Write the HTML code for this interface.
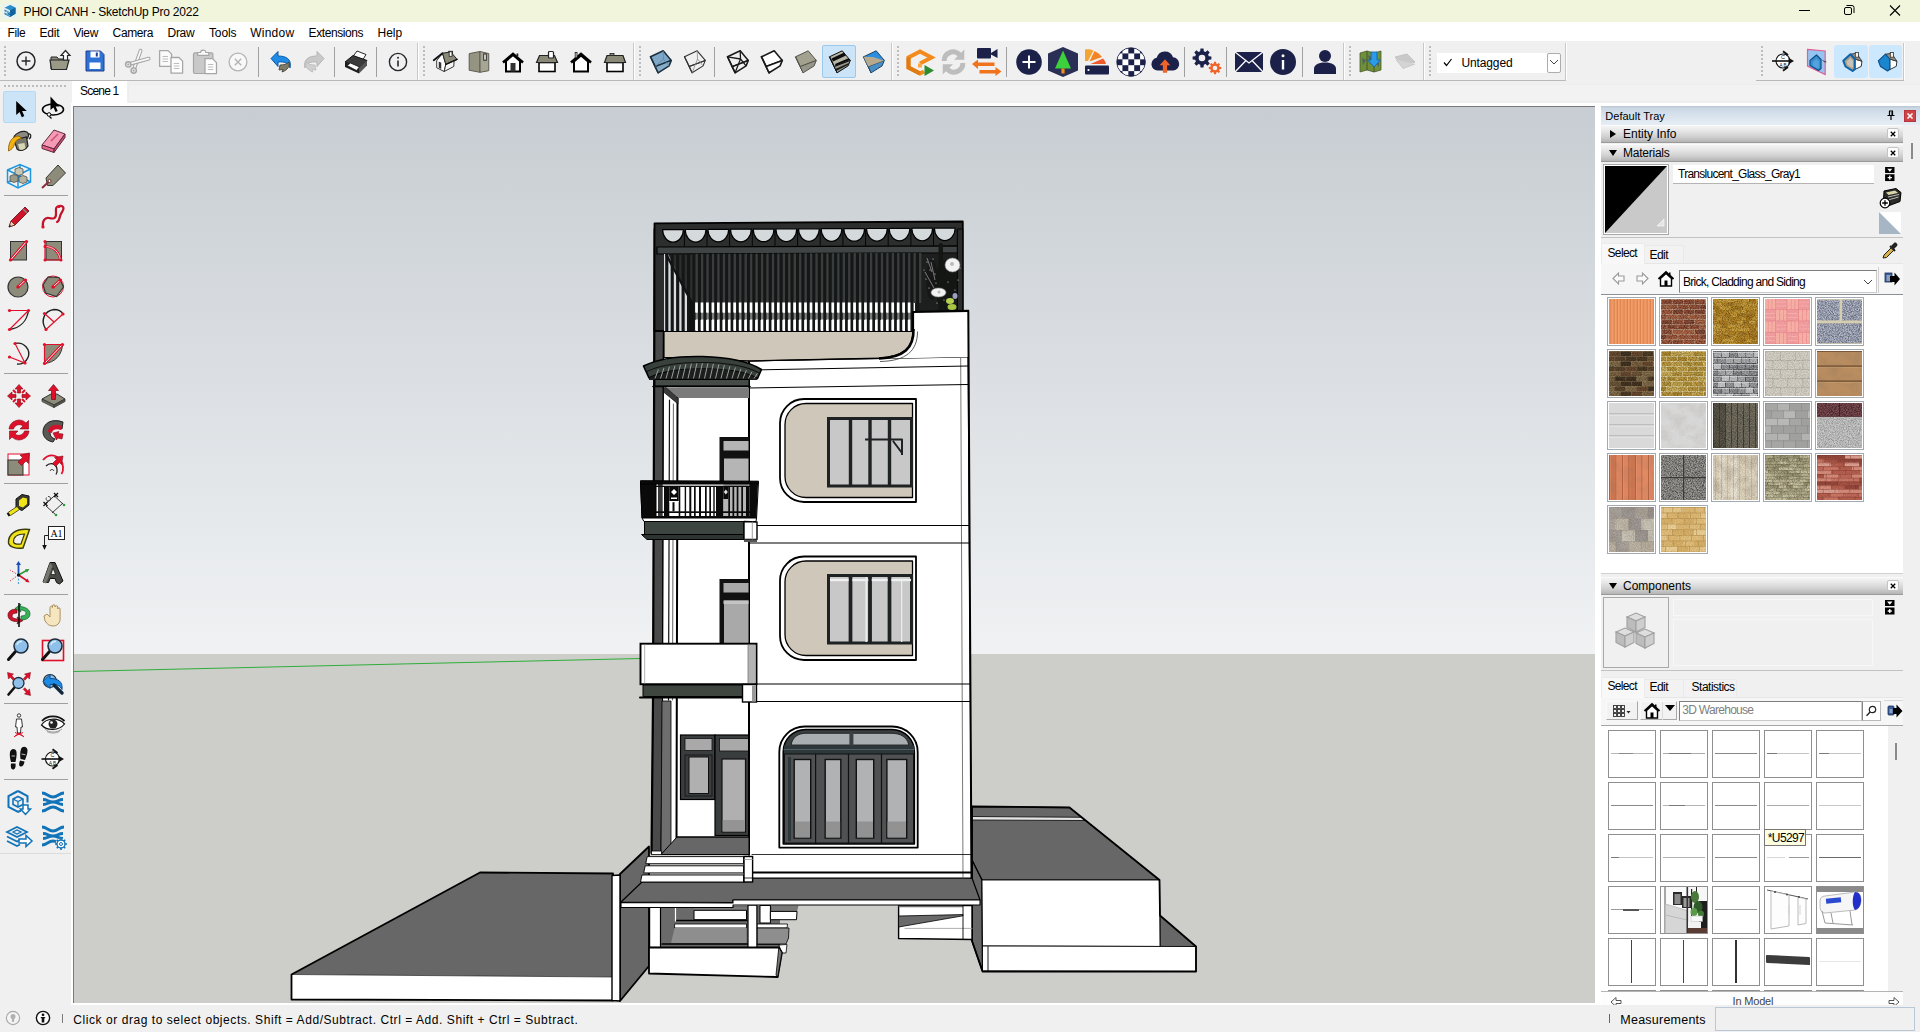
<!DOCTYPE html>
<html lang="en"><head><meta charset="utf-8"><title>PHOI CANH - SketchUp Pro 2022</title>
<style>
*{box-sizing:border-box;margin:0;padding:0}
html,body{width:1920px;height:1032px;overflow:hidden;background:#f0f0f0;font-family:"Liberation Sans",sans-serif;font-size:12px;color:#000}
.abs{position:absolute}
.t{position:absolute;white-space:nowrap;line-height:1;transform-origin:0 0}
#titlebar{position:absolute;left:0;top:0;width:1920px;height:22px;background:#f1f5dc}
#menubar{position:absolute;left:0;top:22px;width:1920px;height:19px;background:#fff}
#toolbar{position:absolute;left:0;top:41px;width:1920px;height:40px;background:#f0f0f0}
#lefttb{position:absolute;left:0;top:81px;width:71px;height:924px;background:#f0f0f0}
#scenerow{position:absolute;left:71px;top:81px;width:1530px;height:25px;background:#f0f0f0}
#vp{position:absolute;left:73px;top:106px;width:1522px;height:897px;background:#ccc;border-left:1px solid #7a7a7a;border-top:1px solid #7a7a7a;overflow:hidden}
#tray{position:absolute;left:1601px;top:106px;width:319px;height:899px;background:#f0f0f0}
#status{position:absolute;left:0;top:1005px;width:1920px;height:27px;background:#f0f0f0}
svg{position:absolute;overflow:visible}
</style></head><body>
<div id="titlebar">
<div class="abs" style="left:2px;top:3px;width:16px;height:16px;background:#eaf3ee"></div>
<svg class="abs" style="left:4px;top:5px" width="12" height="12" viewBox="0 0 12 12"><path d="M6 0L11.500 2.800V8.800L6 12 0.500 9.200V7.600L3.500 9V7.600L0.500 6.200V4.600L6 7.200Z" fill="#1b78b3"/><path d="M6 0L11.500 2.800 6 5.600 0.500 2.800Z" fill="#2a8fcc"/><path d="M6 5.600L11.500 2.800V8.800L6 12Z" fill="#12659c"/><path d="M1.800 3.400l4.200 2.200M1.800 6l4.200 2.200M2 8.800l4 2" stroke="#cfe6f4" stroke-width=".7" fill="none" opacity=".7"/></svg>
<div class="t"  style="left:23.6px;top:5.5px;font-size:12px;letter-spacing:-0.221px;color:#000;">PHOI CANH - SketchUp Pro 2022</div>
<svg class="abs" style="left:1780px;top:0" width="140" height="23" viewBox="0 0 140 23"><path d="M19 10.5h11" stroke="#000" stroke-width="1" fill="none"/><rect x="64.500" y="7.500" width="7" height="7" rx="1.500" stroke="#000" stroke-width="1" fill="none"/><path d="M66.500 5.500h5.500a2 2 0 0 1 2 2v5.500" stroke="#000" stroke-width="1" fill="none"/><path d="M110 5.500l10 10M120 5.500l-10 10" stroke="#000" stroke-width="1.100" fill="none"/></svg>
</div>
<div id="menubar">
<div class="t"  style="left:7.6px;top:4.6px;font-size:12px;letter-spacing:-0.409px;color:#000;">File</div>
<div class="t"  style="left:39.599999999999994px;top:4.6px;font-size:12px;letter-spacing:-0.244px;color:#000;">Edit</div>
<div class="t"  style="left:73.6px;top:4.6px;font-size:12px;letter-spacing:-0.348px;color:#000;">View</div>
<div class="t"  style="left:112.6px;top:4.6px;font-size:12px;letter-spacing:-0.38px;color:#000;">Camera</div>
<div class="t"  style="left:167.60000000000002px;top:4.6px;font-size:12px;letter-spacing:-0.326px;color:#000;">Draw</div>
<div class="t"  style="left:209.0px;top:4.6px;font-size:12px;letter-spacing:-0.143px;color:#000;">Tools</div>
<div class="t"  style="left:250.3px;top:4.6px;font-size:12px;letter-spacing:0.22px;color:#000;">Window</div>
<div class="t"  style="left:308.6px;top:4.6px;font-size:12px;letter-spacing:-0.43px;color:#000;">Extensions</div>
<div class="t"  style="left:377.6px;top:4.6px;font-size:12px;letter-spacing:-0.07px;color:#000;">Help</div>
</div>
<div id="toolbar"><div class="abs" style="left:0;top:39px;width:1566px;height:1px;background:#b9b9b9"></div><div class="abs" style="left:1756px;top:39px;width:148px;height:1px;background:#b9b9b9"></div></div>
<div class="abs" style="left:4px;top:46px;width:2px;height:2px;background:#bdbdbd"></div><div class="abs" style="left:4px;top:50px;width:2px;height:2px;background:#bdbdbd"></div><div class="abs" style="left:4px;top:54px;width:2px;height:2px;background:#bdbdbd"></div><div class="abs" style="left:4px;top:58px;width:2px;height:2px;background:#bdbdbd"></div><div class="abs" style="left:4px;top:62px;width:2px;height:2px;background:#bdbdbd"></div><div class="abs" style="left:4px;top:66px;width:2px;height:2px;background:#bdbdbd"></div><div class="abs" style="left:4px;top:70px;width:2px;height:2px;background:#bdbdbd"></div><div class="abs" style="left:4px;top:74px;width:2px;height:2px;background:#bdbdbd"></div>
<svg class="abs" style="left:14.399999999999999px;top:49.3px" width="24" height="24" viewBox="0 0 24 24"><circle cx="12" cy="12" r="9" fill="none" stroke="#25272b" stroke-width="1.500"/><path d="M12 7.600v8.800M7.600 12h8.800" stroke="#25272b" stroke-width="1.400"/></svg>
<svg class="abs" style="left:48.0px;top:49.0px" width="24" height="24" viewBox="0 0 24 24"><path d="M3 8h6l1.500 2H18v10H3z" fill="#8c8b78" stroke="#25272b" stroke-width="1"/><path d="M2 11h19l-2.500 9.500H3.500z" fill="#9a9985" stroke="#25272b" stroke-width="1.200"/><path d="M17.500 1.500l4.500 5h-2.500v4.500h-4v-4.500H13z" fill="#fff" stroke="#25272b" stroke-width="1.200"/></svg>
<svg class="abs" style="left:83.0px;top:49.0px" width="24" height="24" viewBox="0 0 24 24"><path d="M3 2h14.500L21 5.500V22H3z" fill="#2f72d6" stroke="#1f3f8f" stroke-width="1"/><rect x="7.500" y="2.500" width="9" height="6" fill="#fff"/><rect x="12.800" y="3.500" width="2" height="4" fill="#1f3f8f"/><rect x="6.500" y="13.500" width="11" height="6.500" fill="#fff"/></svg>
<div class="abs" style="left:114px;top:47px;width:1px;height:30px;background:#a0a0a0"></div>
<svg class="abs" style="left:124.0px;top:49.0px" width="26" height="26" viewBox="0 0 26 26"><path d="M16.600 1.600L10.200 19.500" stroke="#a6a6a6" stroke-width="3.800" stroke-linecap="round"/><path d="M16.600 1.600L10.200 19.500" stroke="#fafafa" stroke-width="1.700" stroke-linecap="round"/><path d="M24.700 9.600L6 14.800" stroke="#a6a6a6" stroke-width="3.800" stroke-linecap="round"/><path d="M24.700 9.600L6 14.800" stroke="#fafafa" stroke-width="1.700" stroke-linecap="round"/><circle cx="4.200" cy="15.400" r="2.700" fill="#e0e0e0" stroke="#a6a6a6" stroke-width="1.400"/><circle cx="4.200" cy="15.400" r=".9" fill="#a6a6a6"/><circle cx="9.700" cy="21.600" r="2.700" fill="#e0e0e0" stroke="#a6a6a6" stroke-width="1.400"/><circle cx="9.700" cy="21.600" r=".9" fill="#a6a6a6"/></svg>
<svg class="abs" style="left:159.0px;top:50.0px" width="24" height="24" viewBox="0 0 24 24"><path d="M.6 .6h8.500l3.500 3.500V16.300H.6z" fill="#fafafa" stroke="#a6a6a6" stroke-width="1.300" stroke-linejoin="round"/><path d="M3.500 6.500h5.500M3.500 9h5.500M3.500 11.500h5.500" stroke="#bdbdbd" stroke-width="1.100"/><path d="M12 7.500h8l3.600 3.600V23.200H12z" fill="#fdfdfd" stroke="#a6a6a6" stroke-width="1.300" stroke-linejoin="round"/><path d="M14.800 13.500h5.500M14.800 16h5.500M14.800 18.500h5.500" stroke="#bdbdbd" stroke-width="1.100"/></svg>
<svg class="abs" style="left:193.0px;top:50.0px" width="24" height="24" viewBox="0 0 24 24"><rect x=".5" y="2.800" width="19.400" height="20.700" rx="1.500" fill="#c9c9c9" stroke="#a6a6a6" stroke-width="1.200"/><path d="M4.600 5.300V2.500h3c0-3.300 5.200-3.300 5.200 0h3v2.800z" fill="#fafafa" stroke="#a6a6a6" stroke-width="1.200" stroke-linejoin="round"/><path d="M12 8.600h7.500l4 4V23.600H12z" fill="#fdfdfd" stroke="#a6a6a6" stroke-width="1.300" stroke-linejoin="round"/><path d="M14.800 14.500h5.500M14.800 17h5.500M14.800 19.500h5.500" stroke="#bdbdbd" stroke-width="1.100"/></svg>
<svg class="abs" style="left:226.1px;top:49.5px" width="24" height="24" viewBox="0 0 24 24"><circle cx="12" cy="12" r="8.900" fill="#f8f8f8" stroke="#b4b4b4" stroke-width="1.300"/><path d="M8.800 8.800l6.400 6.400M15.200 8.800l-6.400 6.400" stroke="#b4b4b4" stroke-width="1.400"/></svg>
<div class="abs" style="left:258px;top:47px;width:1px;height:30px;background:#a0a0a0"></div>
<svg class="abs" style="left:269.0px;top:50.0px" width="24" height="24" viewBox="0 0 24 24"><path d="M2 8.500L9 1.500v4.500c8 0 14 3 12 12-1.500-5-5-6.500-12-6v4.500z" fill="#1e8ce6" stroke="#0d5aa8" stroke-width="1"/><path d="M11 15c4 0 7-1 9-3 1 4-1 8-7 10l1-2.500-4 .5z" fill="#7d7c69" stroke="#3c3c34" stroke-width=".8"/></svg>
<svg class="abs" style="left:302.0px;top:50.0px" width="24" height="24" viewBox="0 0 24 24"><path d="M22 8.500L15 1.500v4.500c-8 0-14 3-12 12 1.500-5 5-6.500 12-6v4.500z" fill="#c9c9c9" stroke="#b5b5b5" stroke-width="1"/><path d="M13 15c-4 0-7-1-9-3-1 4 1 8 7 10l-1-2.500 4 .5z" fill="#cfcfcf" stroke="#bcbcbc" stroke-width=".8"/></svg>
<div class="abs" style="left:334px;top:47px;width:1px;height:30px;background:#a0a0a0"></div>
<svg class="abs" style="left:344.0px;top:50.0px" width="24" height="24" viewBox="0 0 24 24"><path d="M9 6.500L13 1l9 3.500-3 5z" fill="#fff" stroke="#25272b" stroke-width="1"/><path d="M1 12l8-6.500L23 10.500l-7 7.500z" fill="#3b3b3b" stroke="#111" stroke-width="1"/><path d="M1 12v5l14 6.500V18z" fill="#1e1e1e"/><path d="M15 18l8-7.500v5L15 23.500z" fill="#555"/><path d="M3 15.500l3.500-2.500 9 4-3 3.500z" fill="#fff" stroke="#111" stroke-width=".8"/></svg>
<div class="abs" style="left:376px;top:47px;width:1px;height:30px;background:#a0a0a0"></div>
<svg class="abs" style="left:386.0px;top:49.5px" width="24" height="24" viewBox="0 0 24 24"><circle cx="12" cy="12" r="8.600" fill="none" stroke="#25272b" stroke-width="1.400"/><path d="M12 10.500v6" stroke="#25272b" stroke-width="1.600"/><circle cx="12" cy="7.800" r="1" fill="#25272b"/></svg>
<div class="abs" style="left:417px;top:43px;width:1px;height:37px;background:#c8c8c8"></div><div class="abs" style="left:418px;top:43px;width:1px;height:37px;background:#fff"></div>
<div class="abs" style="left:423px;top:46px;width:2px;height:2px;background:#bdbdbd"></div><div class="abs" style="left:423px;top:50px;width:2px;height:2px;background:#bdbdbd"></div><div class="abs" style="left:423px;top:54px;width:2px;height:2px;background:#bdbdbd"></div><div class="abs" style="left:423px;top:58px;width:2px;height:2px;background:#bdbdbd"></div><div class="abs" style="left:423px;top:62px;width:2px;height:2px;background:#bdbdbd"></div><div class="abs" style="left:423px;top:66px;width:2px;height:2px;background:#bdbdbd"></div><div class="abs" style="left:423px;top:70px;width:2px;height:2px;background:#bdbdbd"></div><div class="abs" style="left:423px;top:74px;width:2px;height:2px;background:#bdbdbd"></div>
<svg class="abs" style="left:433.0px;top:50.0px" width="24" height="24" viewBox="0 0 24 24"><path d="M3.700 10.700L9.500 3.200 12.800 14.400 11.200 21.500 3.700 17.750z" fill="#fff" stroke="#222" stroke-width=".9" stroke-linejoin="round"/><path d="M12.800 14.400L21.200 10.250 20.750 16.500 11.200 21.500z" fill="#f4f4f4" stroke="#222" stroke-width=".9" stroke-linejoin="round"/><rect x="15.750" y="1.300" width="3.750" height="6" fill="#fff" stroke="#222" stroke-width=".9"/><path d="M9.500 3.200L17.800 1.900 24.100 9.400 12.800 14.400z" fill="#8a8978" stroke="#222" stroke-width="1" stroke-linejoin="round"/><rect x="16.200" y="1.800" width="2.800" height="4.500" fill="#fff" stroke="#222" stroke-width=".8"/><path d="M.75 10.250L9.500 3.200" stroke="#111" stroke-width="1.800" stroke-linecap="round"/><path d="M12.800 14.400L24.100 9.400" stroke="#111" stroke-width="1.500" stroke-linecap="round"/><rect x="5.750" y="12" width="2.500" height="6.200" fill="#333" transform="skewY(26) translate(0 -3.300)"/></svg>
<svg class="abs" style="left:467.0px;top:50.0px" width="24" height="24" viewBox="0 0 24 24"><path d="M2.200 3.600L13 1.500V22.300L2.200 20.250z" fill="#959382" stroke="#5e5d50" stroke-width="1"/><path d="M13 1.500L21.750 3.600V20.700L13 22.300z" fill="#a7a594" stroke="#5e5d50" stroke-width="1"/><rect x="16.750" y="4" width="2.500" height="6.250" fill="#fff" stroke="#222" stroke-width="1"/></svg>
<svg class="abs" style="left:501.0px;top:50.0px" width="24" height="24" viewBox="0 0 24 24"><path d="M2 12.500L12 4l10 8.500" fill="none" stroke="#000" stroke-width="2.600"/><path d="M5 11v10.500h14V11L12 5z" fill="#fff" stroke="#000" stroke-width="2"/><rect x="9.500" y="13" width="5" height="8.500" fill="#333"/><rect x="15.500" y="3.500" width="1.800" height="3" fill="#222"/></svg>
<svg class="abs" style="left:535.0px;top:50.0px" width="24" height="24" viewBox="0 0 24 24"><rect x="4" y="12.500" width="16" height="9" fill="#fff" stroke="#000" stroke-width="1.600"/><path d="M1.500 12.500L4.500 5.500h15l3 7z" fill="#8a8978" stroke="#222" stroke-width="1.200"/><rect x="13.500" y="1.500" width="5" height="6.500" rx="1" fill="#fff" stroke="#222" stroke-width="1.200"/></svg>
<svg class="abs" style="left:569.0px;top:50.0px" width="24" height="24" viewBox="0 0 24 24"><path d="M2 12.500L12 4l10 8.500" fill="none" stroke="#000" stroke-width="2.600"/><path d="M5 11.500V21.500h14V11.500L12 5.500z" fill="#fff" stroke="#000" stroke-width="2"/><rect x="6.200" y="2.500" width="1.800" height="5" fill="#fff" stroke="#222" stroke-width=".9"/></svg>
<svg class="abs" style="left:603.0px;top:50.0px" width="24" height="24" viewBox="0 0 24 24"><rect x="4" y="12.500" width="16" height="9" fill="#fff" stroke="#000" stroke-width="1.600"/><path d="M1.500 12.500L4 5.500h16l2.500 7z" fill="#8a8978" stroke="#222" stroke-width="1.200"/><rect x="7" y="3.500" width="4" height="2" fill="#8a8978" stroke="#222" stroke-width=".8"/></svg>
<div class="abs" style="left:633px;top:43px;width:1px;height:37px;background:#c8c8c8"></div><div class="abs" style="left:634px;top:43px;width:1px;height:37px;background:#fff"></div>
<div class="abs" style="left:639px;top:46px;width:2px;height:2px;background:#bdbdbd"></div><div class="abs" style="left:639px;top:50px;width:2px;height:2px;background:#bdbdbd"></div><div class="abs" style="left:639px;top:54px;width:2px;height:2px;background:#bdbdbd"></div><div class="abs" style="left:639px;top:58px;width:2px;height:2px;background:#bdbdbd"></div><div class="abs" style="left:639px;top:62px;width:2px;height:2px;background:#bdbdbd"></div><div class="abs" style="left:639px;top:66px;width:2px;height:2px;background:#bdbdbd"></div><div class="abs" style="left:639px;top:70px;width:2px;height:2px;background:#bdbdbd"></div><div class="abs" style="left:639px;top:74px;width:2px;height:2px;background:#bdbdbd"></div>
<svg class="abs" style="left:648.0px;top:50.0px" width="24" height="24" viewBox="0 0 24 24"><path d="M2.500 6.800L15.200 .8 23.300 10.400 7.200 16.600z" fill="#7fa8c8" stroke="#1d2f3d" stroke-width="1.5" stroke-linejoin="round"/><path d="M2.500 6.800L7.200 16.600 10.100 22.800z" fill="#6d97b8" stroke="#1d2f3d" stroke-width="1.5" stroke-linejoin="round"/><path d="M7.200 16.600L23.300 10.400 21.100 15.900 10.100 22.800z" fill="#86aeca" stroke="#1d2f3d" stroke-width="1.5" stroke-linejoin="round"/><path d="M15.200 .8L15.500 9 7.200 16.600M15.500 9l5.600 6.900" stroke="#5d88a6" stroke-width=".8" fill="none"/></svg>
<svg class="abs" style="left:682.0px;top:50.0px" width="24" height="24" viewBox="0 0 24 24"><path d="M2.500 6.800L15.200 .8 23.300 10.400 7.200 16.600z" fill="none" stroke="#333" stroke-width="1.1" stroke-linejoin="round"/><path d="M2.500 6.800L7.200 16.600 10.100 22.800z" fill="none" stroke="#333" stroke-width="1.1" stroke-linejoin="round"/><path d="M7.200 16.600L23.300 10.400 21.100 15.900 10.100 22.800z" fill="none" stroke="#333" stroke-width="1.1" stroke-linejoin="round"/><path d="M15.200 .8L15.500 9 10.100 22.800M15.500 9l5.600 6.900" stroke="#888" stroke-width=".8" fill="none"/></svg>
<div class="abs" style="left:714px;top:47px;width:1px;height:30px;background:#a0a0a0"></div>
<svg class="abs" style="left:725.0px;top:50.0px" width="24" height="24" viewBox="0 0 24 24"><path d="M2.500 6.800L15.200 .8 23.300 10.400 7.200 16.600z" fill="none" stroke="#1a1a1a" stroke-width="1.5" stroke-linejoin="round"/><path d="M2.500 6.800L7.200 16.600 10.100 22.800z" fill="none" stroke="#1a1a1a" stroke-width="1.5" stroke-linejoin="round"/><path d="M7.200 16.600L23.300 10.400 21.100 15.900 10.100 22.800z" fill="none" stroke="#1a1a1a" stroke-width="1.5" stroke-linejoin="round"/><path d="M15.200 .8L15.500 9 10.100 22.800M15.500 9l5.600 6.900M2.500 6.800L15.500 9" stroke="#1a1a1a" stroke-width="1.300" fill="none"/></svg>
<svg class="abs" style="left:759.0px;top:50.0px" width="24" height="24" viewBox="0 0 24 24"><path d="M2.500 6.800L15.200 .8 23.300 10.400 7.200 16.600z" fill="#fff" stroke="#1a1a1a" stroke-width="1.6" stroke-linejoin="round"/><path d="M2.500 6.800L7.200 16.600 10.100 22.800z" fill="#fff" stroke="#1a1a1a" stroke-width="1.6" stroke-linejoin="round"/><path d="M7.200 16.600L23.300 10.400 21.100 15.900 10.100 22.800z" fill="#fff" stroke="#1a1a1a" stroke-width="1.6" stroke-linejoin="round"/></svg>
<svg class="abs" style="left:793.0px;top:50.0px" width="24" height="24" viewBox="0 0 24 24"><path d="M2.500 6.800L15.200 .8 23.300 10.400 7.200 16.600z" fill="#a3a291" stroke="#55554a" stroke-width="1.0" stroke-linejoin="round"/><path d="M2.500 6.800L7.200 16.600 10.100 22.800z" fill="#8b8a79" stroke="#55554a" stroke-width="1.0" stroke-linejoin="round"/><path d="M7.200 16.600L23.300 10.400 21.100 15.900 10.100 22.800z" fill="#97968a" stroke="#55554a" stroke-width="1.0" stroke-linejoin="round"/></svg>
<div class="abs" style="left:822px;top:45px;width:34px;height:33px;background:#cce4f7;border:1px solid #99c9ef;border-radius:2px"></div>
<svg class="abs" style="left:827.0px;top:50.0px" width="24" height="24" viewBox="0 0 24 24"><path d="M2.500 6.800L15.200 .8 23.300 10.400 7.200 16.600z" fill="#b6b5a5" stroke="#111" stroke-width="1.0" stroke-linejoin="round"/><path d="M2.500 6.800L7.200 16.600 10.100 22.800z" fill="#8b8a79" stroke="#111" stroke-width="1.0" stroke-linejoin="round"/><path d="M7.200 16.600L23.300 10.400 21.100 15.900 10.100 22.800z" fill="#97968a" stroke="#111" stroke-width="1.0" stroke-linejoin="round"/><path d="M4.500 8.500L16.800 2.800 19 5.500 6 11.500z M8 14L21.500 8.300 22.800 10 8.800 15.800z" fill="#0c0c0c"/><path d="M8.300 19l13.700-6-.6 1.800L9 21z" fill="#1a1a1a"/></svg>
<svg class="abs" style="left:861.0px;top:50.0px" width="24" height="24" viewBox="0 0 24 24"><path d="M2.500 6.800L15.200 .8 23.300 10.400 7.200 16.600z" fill="#2e8ede" stroke="#1d4466" stroke-width="1.0" stroke-linejoin="round"/><path d="M2.500 6.800L7.200 16.600 10.100 22.800z" fill="#a69c85" stroke="#1d4466" stroke-width="1.0" stroke-linejoin="round"/><path d="M7.200 16.600L23.300 10.400 21.100 15.900 10.100 22.800z" fill="#4a8fc4" stroke="#1d4466" stroke-width="1.0" stroke-linejoin="round"/><path d="M2.500 6.800L7.200 16.600 23.300 10.400 12 7z" fill="#b7a98d"/></svg>
<div class="abs" style="left:891px;top:43px;width:1px;height:37px;background:#c8c8c8"></div><div class="abs" style="left:892px;top:43px;width:1px;height:37px;background:#fff"></div>
<div class="abs" style="left:897px;top:46px;width:2px;height:2px;background:#bdbdbd"></div><div class="abs" style="left:897px;top:50px;width:2px;height:2px;background:#bdbdbd"></div><div class="abs" style="left:897px;top:54px;width:2px;height:2px;background:#bdbdbd"></div><div class="abs" style="left:897px;top:58px;width:2px;height:2px;background:#bdbdbd"></div><div class="abs" style="left:897px;top:62px;width:2px;height:2px;background:#bdbdbd"></div><div class="abs" style="left:897px;top:66px;width:2px;height:2px;background:#bdbdbd"></div><div class="abs" style="left:897px;top:70px;width:2px;height:2px;background:#bdbdbd"></div><div class="abs" style="left:897px;top:74px;width:2px;height:2px;background:#bdbdbd"></div>
<svg class="abs" style="left:904.5px;top:46.5px" width="30" height="30" viewBox="0 0 30 30"><path d="M15 16.500L26.500 10.500 15 4.500 3.500 10.500V20.500l11.500 6 4-2" fill="none" stroke="#f28a1c" stroke-width="4" stroke-linejoin="miter"/><path d="M3.500 10.500V20.500l11.500 6" fill="none" stroke="#e07a12" stroke-width="4"/><path d="M15 16.500v4" stroke="#ffa63f" stroke-width="4"/><path d="M19.500 18l9.500 5.500-9.500 5.500z" fill="#2e8b2e"/></svg>
<svg class="abs" style="left:938.5px;top:48.0px" width="29" height="28" viewBox="0 0 26 26"><path d="M2 12A10.500 10.500 0 0 1 20 4.500L23 1.500v9.500h-9.500l3.300-3.300A6 6 0 0 0 6.600 12z" fill="#bdbdbd"/><path d="M24 14A10.500 10.500 0 0 1 6 21.500L3 24.500V15h9.500l-3.300 3.300A6 6 0 0 0 19.400 14z" fill="#bdbdbd"/></svg>
<svg class="abs" style="left:972.0px;top:47.5px" width="30" height="28" viewBox="0 0 30 28"><rect x="5" y="0" width="14" height="10.500" rx="1" fill="#1b2149"/><path d="M19 5l6.500-4v9L19 6.500z" fill="#1b2149"/><path d="M0 16l6-4.500v3h16.500v3.500H6V21z" fill="#f0731e"/><path d="M29.500 23.500l-6-4.500v3H7.500v3.500H23.500V28z" fill="#f0731e"/></svg>
<div class="abs" style="left:1006px;top:47px;width:1px;height:30px;background:#a0a0a0"></div>
<svg class="abs" style="left:1015.5px;top:49.0px" width="26" height="26" viewBox="0 0 26 26"><circle cx="13" cy="13" r="12.800" fill="#1b2149"/><path d="M13 6.500v13M6.500 13h13" stroke="#fff" stroke-width="2"/></svg>
<svg class="abs" style="left:1048.0px;top:47.0px" width="30" height="30" viewBox="0 0 30 30"><path d="M15 0L30 6.500V23.500L15 30 0 23.500V6.500z" fill="#2a2f55"/><path d="M15 3.500L23 21.500H7z" fill="#3ed13e"/><rect x="13.400" y="21.500" width="3.200" height="5" fill="#f28a1c"/></svg>
<svg class="abs" style="left:1084.0px;top:48.0px" width="26" height="28" viewBox="0 0 26 28"><path d="M1 1.500c3-.6 6 0 8.500 1L4 13H1z" fill="#f4a433"/><path d="M10.500 3c3 1.300 5.500 3.500 7.500 6L5.500 13.500z" fill="#f28424"/><path d="M19 10.500c1.500 1.500 2.500 3.500 3 5.500H6.500z" fill="#ef5a2a"/><rect x="1" y="17.500" width="24" height="9" rx="1" fill="#1b2149"/><circle cx="4.500" cy="22" r="1.100" fill="#fff"/></svg>
<svg class="abs" style="left:1116.0px;top:47.0px" width="30" height="30" viewBox="0 0 28 28"><defs><pattern id="chk" width="11" height="11" patternUnits="userSpaceOnUse"><rect width="11" height="11" fill="#fff"/><rect width="5.500" height="5.500" fill="#1b2149"/><rect x="5.500" y="5.500" width="5.500" height="5.500" fill="#1b2149"/></pattern><clipPath id="cc"><circle cx="14" cy="14" r="13.500"/></clipPath></defs><g clip-path="url(#cc)"><rect x="0" y="0" width="28" height="28" fill="url(#chk)" transform="translate(0.500 0.500)"/></g><circle cx="14" cy="14" r="13.300" fill="none" stroke="#1b2149" stroke-width=".8"/></svg>
<svg class="abs" style="left:1149.0px;top:47.0px" width="32" height="30" viewBox="-1 -1 30 28"><path d="M7 21a6 6 0 0 1-.8-11.900A8 8 0 0 1 21.500 8.500 6.300 6.300 0 0 1 22 21z" fill="#1b2149"/><path d="M14 10.500l5 5.500h-3v7h-4v-7H9z" fill="#f0642a"/></svg>
<div class="abs" style="left:1184px;top:47px;width:1px;height:30px;background:#a0a0a0"></div>
<svg class="abs" style="left:1192.0px;top:48.0px" width="30" height="28" viewBox="0 0 30 28"><polygon points="19.38,8.49 19.38,11.51 16.79,11.81 16.08,13.53 17.70,15.56 15.56,17.70 13.53,16.08 11.81,16.79 11.51,19.38 8.49,19.38 8.19,16.79 6.47,16.08 4.44,17.70 2.30,15.56 3.92,13.53 3.21,11.81 0.62,11.51 0.62,8.49 3.21,8.19 3.92,6.47 2.30,4.44 4.44,2.30 6.47,3.92 8.19,3.21 8.49,0.62 11.51,0.62 11.81,3.21 13.53,3.92 15.56,2.30 17.70,4.44 16.08,6.47 16.79,8.19" fill="#1b2149"/><circle cx="10" cy="10" r="3.3" fill="#f0f0f0"/><polygon points="29.22,19.00 29.22,21.00 27.51,21.20 27.03,22.34 28.11,23.69 26.69,25.11 25.34,24.03 24.20,24.51 24.00,26.22 22.00,26.22 21.80,24.51 20.66,24.03 19.31,25.11 17.89,23.69 18.97,22.34 18.49,21.20 16.78,21.00 16.78,19.00 18.49,18.80 18.97,17.66 17.89,16.31 19.31,14.89 20.66,15.97 21.80,15.49 22.00,13.78 24.00,13.78 24.20,15.49 25.34,15.97 26.69,14.89 28.11,16.31 27.03,17.66 27.51,18.80" fill="#f0642a"/><circle cx="23" cy="20" r="2.3" fill="#f0f0f0"/></svg>
<div class="abs" style="left:1226px;top:47px;width:1px;height:30px;background:#a0a0a0"></div>
<svg class="abs" style="left:1234.5px;top:52.0px" width="28" height="20" viewBox="0 0 28 20"><rect x="0" y="0" width="28" height="20" fill="#1b2149"/><path d="M0 0l14 11L28 0M0 20l10.500-11M28 20L17.500 9" stroke="#fff" stroke-width="1.300" fill="none"/></svg>
<svg class="abs" style="left:1270.0px;top:49.0px" width="26" height="26" viewBox="0 0 26 26"><circle cx="13" cy="13" r="13" fill="#1b2149"/><path d="M13 11v9.500" stroke="#fff" stroke-width="2.400"/><circle cx="13" cy="6.800" r="1.500" fill="#fff"/></svg>
<div class="abs" style="left:1302px;top:47px;width:1px;height:30px;background:#a0a0a0"></div>
<svg class="abs" style="left:1313.5px;top:50.0px" width="22" height="24" viewBox="0 0 22 24"><circle cx="11" cy="6" r="6" fill="#1b2149"/><path d="M0 24v-5c0-4 4-6.500 11-6.500s11 2.500 11 6.500v5z" fill="#1b2149"/></svg>
<div class="abs" style="left:1343px;top:43px;width:1px;height:37px;background:#c8c8c8"></div><div class="abs" style="left:1344px;top:43px;width:1px;height:37px;background:#fff"></div>
<div class="abs" style="left:1349px;top:46px;width:2px;height:2px;background:#bdbdbd"></div><div class="abs" style="left:1349px;top:50px;width:2px;height:2px;background:#bdbdbd"></div><div class="abs" style="left:1349px;top:54px;width:2px;height:2px;background:#bdbdbd"></div><div class="abs" style="left:1349px;top:58px;width:2px;height:2px;background:#bdbdbd"></div><div class="abs" style="left:1349px;top:62px;width:2px;height:2px;background:#bdbdbd"></div><div class="abs" style="left:1349px;top:66px;width:2px;height:2px;background:#bdbdbd"></div><div class="abs" style="left:1349px;top:70px;width:2px;height:2px;background:#bdbdbd"></div><div class="abs" style="left:1349px;top:74px;width:2px;height:2px;background:#bdbdbd"></div>
<svg class="abs" style="left:1359.0px;top:50.0px" width="24" height="24" viewBox="0 0 24 24"><path d="M1 3l7-2 7 2 7-2v19l-7 2-7-2-7 2z" fill="#6f8f3a" stroke="#4a5a2a" stroke-width=".8"/><path d="M8 1v19M15 3v19" stroke="#3d4a22" stroke-width=".8"/><path d="M3 8l4 2-3 5zM9 5l4 3-2 6zM16 12l4-2v7z" fill="#49566b" opacity=".8"/><path d="M12 2h6v8h3.500L15 17 8.500 10H12z" fill="#2e9be8" stroke="#0f5fa8" stroke-width=".8"/></svg>
<svg class="abs" style="left:1393.0px;top:50.0px" width="24" height="24" viewBox="0 0 24 24"><path d="M2 7l12-3 8 8-12 4z" fill="#c9c9c9" stroke="#bdbdbd" stroke-width=".8"/><path d="M3 9.500l7 9 12-4.500" fill="#d4d4d4" stroke="#c2c2c2" stroke-width=".8"/></svg>
<div class="abs" style="left:1423px;top:43px;width:1px;height:37px;background:#c8c8c8"></div><div class="abs" style="left:1424px;top:43px;width:1px;height:37px;background:#fff"></div>
<div class="abs" style="left:1429px;top:46px;width:2px;height:2px;background:#bdbdbd"></div><div class="abs" style="left:1429px;top:50px;width:2px;height:2px;background:#bdbdbd"></div><div class="abs" style="left:1429px;top:54px;width:2px;height:2px;background:#bdbdbd"></div><div class="abs" style="left:1429px;top:58px;width:2px;height:2px;background:#bdbdbd"></div><div class="abs" style="left:1429px;top:62px;width:2px;height:2px;background:#bdbdbd"></div><div class="abs" style="left:1429px;top:66px;width:2px;height:2px;background:#bdbdbd"></div><div class="abs" style="left:1429px;top:70px;width:2px;height:2px;background:#bdbdbd"></div><div class="abs" style="left:1429px;top:74px;width:2px;height:2px;background:#bdbdbd"></div>
<div class="abs" style="left:1437px;top:53px;width:110px;height:20px;background:#fff"></div>
<svg class="abs" style="left:1443px;top:58px" width="10" height="9" viewBox="0 0 10 9"><path d="M1 4.500l2.500 3L8.500 1" stroke="#000" stroke-width="1.200" fill="none"/></svg>
<div class="t"  style="left:1461.5px;top:57px;font-size:12px;letter-spacing:-0.13px;color:#000;">Untagged</div>
<div class="abs" style="left:1547px;top:53px;width:14px;height:20px;background:#fff;border:1px solid #adadad;border-radius:2px"></div>
<svg class="abs" style="left:1549px;top:59px" width="10" height="7" viewBox="0 0 10 7"><path d="M1 1l4 4 4-4" stroke="#444" stroke-width="1" fill="none"/></svg>
<div class="abs" style="left:1565px;top:43px;width:1px;height:37px;background:#c8c8c8"></div><div class="abs" style="left:1566px;top:43px;width:1px;height:37px;background:#fff"></div>
<div class="abs" style="left:1761px;top:46px;width:2px;height:2px;background:#bdbdbd"></div><div class="abs" style="left:1761px;top:50px;width:2px;height:2px;background:#bdbdbd"></div><div class="abs" style="left:1761px;top:54px;width:2px;height:2px;background:#bdbdbd"></div><div class="abs" style="left:1761px;top:58px;width:2px;height:2px;background:#bdbdbd"></div><div class="abs" style="left:1761px;top:62px;width:2px;height:2px;background:#bdbdbd"></div><div class="abs" style="left:1761px;top:66px;width:2px;height:2px;background:#bdbdbd"></div><div class="abs" style="left:1761px;top:70px;width:2px;height:2px;background:#bdbdbd"></div><div class="abs" style="left:1761px;top:74px;width:2px;height:2px;background:#bdbdbd"></div>
<svg class="abs" style="left:1770.7px;top:49.3px" width="24" height="24" viewBox="0 0 24 24"><circle cx="12" cy="12" r="7" fill="#fff" stroke="#111" stroke-width="1.100"/><path d="M1 12h20" stroke="#111" stroke-width="1.600"/><path d="M23 12l-5.500-3.200v6.400z" fill="#111"/><path d="M12 2.200l5 3.800M12 21.800l5-3.800" stroke="#111" stroke-width="1.800"/><text x="12" y="10.300" font-size="5.500" text-anchor="middle" font-family="Liberation Sans,sans-serif" fill="#111">C</text><text x="12" y="18" font-size="4.600" text-anchor="middle" font-family="Liberation Sans,sans-serif" fill="#111">A B</text></svg>
<svg class="abs" style="left:1804.0px;top:49.0px" width="26" height="26" viewBox="0 0 26 26"><path d="M3.500 .3L21.200 2 21.200 25.500 3.500 17z" fill="#8cc0f0" opacity=".9" stroke="#e0508a" stroke-width="1.200"/><path d="M6 11.500l6.500-5.500 4.500 4.500v9l-2.500 2-8.500-5z" fill="#3a8fd0" stroke="#0d4f86" stroke-width="1.200" stroke-linejoin="round"/><path d="M17 10.500l6 2.500-2 .5z" fill="#444"/><path d="M9 13l3.500-3 2.500 2.500v6l-1.500 1-4.500-2.800z" fill="#5aa5e0" opacity=".8"/></svg>
<div class="abs" style="left:1834px;top:45px;width:34px;height:33px;background:#cce8ff;border-radius:3px"></div>
<div class="abs" style="left:1869px;top:45px;width:33px;height:33px;background:#cce8ff;border-radius:3px"></div>
<svg class="abs" style="left:1839.0px;top:49.0px" width="26" height="26" viewBox="0 0 26 26"><path d="M15.800 10L22.900 12.200 22.300 17.300 15.800 20.600z" fill="#fff" stroke="#222" stroke-width=".9" stroke-linejoin="miter"/><path d="M11.400 5.200L17.600 4.300 22.900 12.200 15.800 10z" fill="#9a9182" stroke="#333" stroke-width=".9" stroke-linejoin="round"/><rect x="16.300" y="3.500" width="3.200" height="4.700" fill="#f4f0ea" stroke="#333" stroke-width=".8"/><path d="M4.300 11.800L11.400 5.200 15.800 10V20.200L13.600 22 6.500 17.500z" fill="#a89e8e" stroke="#0d62a8" stroke-width="2" stroke-linejoin="round"/><path d="M7.500 12.500l4-3.500 2.500 3v6l-1 .8-4.500-2.800z" fill="#c9c1b3"/></svg>
<svg class="abs" style="left:1874.0px;top:49.0px" width="26" height="26" viewBox="0 0 26 26"><path d="M15.800 10L22.900 12.200 22.300 17.300 15.800 20.600z" fill="#fff" stroke="#222" stroke-width=".9" stroke-linejoin="miter"/><path d="M11.400 5.200L17.600 4.300 22.900 12.200 15.800 10z" fill="#9a9182" stroke="#333" stroke-width=".9" stroke-linejoin="round"/><rect x="16.300" y="3.500" width="3.200" height="4.700" fill="#f4f0ea" stroke="#333" stroke-width=".8"/><path d="M4.300 11.800L11.400 5.200 15.800 10V20.200L13.600 22 6.500 17.500z" fill="#1a86d0" stroke="#0d4f86" stroke-width="1.100" stroke-linejoin="round"/></svg>
<div class="abs" style="left:1903px;top:43px;width:1px;height:37px;background:#c8c8c8"></div><div class="abs" style="left:1904px;top:43px;width:1px;height:37px;background:#fff"></div>
<div id="lefttb"></div>
<div class="abs" style="left:71px;top:81px;width:2px;height:924px;background:#fff"></div>
<div class="abs" style="left:4px;top:85px;width:2px;height:2px;background:#bdbdbd"></div><div class="abs" style="left:8px;top:85px;width:2px;height:2px;background:#bdbdbd"></div><div class="abs" style="left:12px;top:85px;width:2px;height:2px;background:#bdbdbd"></div><div class="abs" style="left:16px;top:85px;width:2px;height:2px;background:#bdbdbd"></div><div class="abs" style="left:20px;top:85px;width:2px;height:2px;background:#bdbdbd"></div><div class="abs" style="left:24px;top:85px;width:2px;height:2px;background:#bdbdbd"></div><div class="abs" style="left:28px;top:85px;width:2px;height:2px;background:#bdbdbd"></div><div class="abs" style="left:32px;top:85px;width:2px;height:2px;background:#bdbdbd"></div><div class="abs" style="left:36px;top:85px;width:2px;height:2px;background:#bdbdbd"></div><div class="abs" style="left:40px;top:85px;width:2px;height:2px;background:#bdbdbd"></div><div class="abs" style="left:44px;top:85px;width:2px;height:2px;background:#bdbdbd"></div><div class="abs" style="left:48px;top:85px;width:2px;height:2px;background:#bdbdbd"></div><div class="abs" style="left:52px;top:85px;width:2px;height:2px;background:#bdbdbd"></div><div class="abs" style="left:56px;top:85px;width:2px;height:2px;background:#bdbdbd"></div><div class="abs" style="left:60px;top:85px;width:2px;height:2px;background:#bdbdbd"></div><div class="abs" style="left:64px;top:85px;width:2px;height:2px;background:#bdbdbd"></div>
<div class="abs" style="left:4px;top:195px;width:64px;height:1px;background:#a0a0a0"></div>
<div class="abs" style="left:4px;top:373px;width:64px;height:1px;background:#a0a0a0"></div>
<div class="abs" style="left:4px;top:483px;width:64px;height:1px;background:#a0a0a0"></div>
<div class="abs" style="left:4px;top:594px;width:64px;height:1px;background:#a0a0a0"></div>
<div class="abs" style="left:4px;top:703px;width:64px;height:1px;background:#a0a0a0"></div>
<div class="abs" style="left:4px;top:779px;width:64px;height:1px;background:#a0a0a0"></div>
<div class="abs" style="left:0px;top:853px;width:71px;height:1px;background:#dcdcdc"></div>
<div class="abs" style="left:3px;top:91px;width:33px;height:32px;background:#cce4f7;border:1px solid #b5d8f3;border-radius:2px"></div>
<svg class="abs" style="left:6.0px;top:95.0px" width="26" height="26" viewBox="0 0 26 26"><path d="M10.200 6V20l3.400-3 2.200 5.200 2.500-1.100-2.200-5h4.700z" fill="#000"/></svg>
<svg class="abs" style="left:40.0px;top:95.0px" width="26" height="26" viewBox="0 0 26 26"><ellipse cx="13" cy="14.500" rx="10.500" ry="5.500" fill="none" stroke="#000" stroke-width="1.600"/><path d="M10.500 1.500V15l3-2.500 2 4.500 2.200-1-2-4.500h4z" fill="#000"/><circle cx="9" cy="19.500" r="1.800" fill="#fff" stroke="#000" stroke-width="1"/><path d="M9.500 21.500l2 2" stroke="#000" stroke-width="1.200"/></svg>
<svg class="abs" style="left:6.0px;top:128.0px" width="26" height="26" viewBox="0 0 26 26"><ellipse cx="15" cy="9" rx="8" ry="5" transform="rotate(-25 15 9)" fill="#8a8a80" stroke="#222" stroke-width="1.200"/><path d="M8 12l3 9c3 3 9 1 11-3l-1.500-9z" fill="#77776c" stroke="#222" stroke-width="1.200"/><path d="M12 16l1.500 5.500c2 1 5 0 6-1.500l-1-5z" fill="#d8d7b5"/><path d="M22 6c3-1 4 3 1 5" fill="none" stroke="#222" stroke-width="1.300"/><path d="M13 8C7 8 2 13 2.500 23c2.500-1 5-3 6-7 1-3 3-5 7-5.500z" fill="#f3b211" stroke="#8a5a00" stroke-width=".8"/></svg>
<svg class="abs" style="left:40.0px;top:128.0px" width="26" height="26" viewBox="0 0 26 26"><path d="M2 17L14 2l11 4-11 15z" fill="#f59ab5" stroke="#5a2a3a" stroke-width="1"/><path d="M2 17l12 4v3.500L2 20.500z" fill="#e8648a" stroke="#5a2a3a" stroke-width="1"/><path d="M14 21L25 6v3.500L14 24.500z" fill="#c94d74" stroke="#5a2a3a" stroke-width="1"/><path d="M11 13l7-7" stroke="#c94d74" stroke-width="1.500"/></svg>
<svg class="abs" style="left:6.0px;top:163.0px" width="26" height="26" viewBox="0 0 26 26"><g fill="none" stroke="#1e96e0" stroke-width="1.500"><path d="M1.500 7L14 1.500 24.500 6v13L12 25 1.500 19.500z"/><path d="M1.500 7L12 12v13M12 12l12.500-6M14 1.500V13M1.500 19.500L14 13l10.500 6"/></g><g stroke="#444" stroke-width=".7"><path d="M9 6l4-1.500 4 1.500v5l-4 1.500-4-1.500z" fill="#c8c7b5"/><path d="M4 13l4-1.500 4 1.500v5l-4 1.500-4-1.500z" fill="#9c9b8a"/><path d="M13 14l4-1.500 4 1.500v5l-4 1.500-4-1.500z" fill="#b6b5a3"/></g></svg>
<svg class="abs" style="left:40.0px;top:163.0px" width="26" height="26" viewBox="0 0 26 26"><path d="M6 15L18 2l7.500 8L13 22.500H7.500z" fill="#8d8c7a" stroke="#3a3a33" stroke-width="1"/><circle cx="9.500" cy="18" r="1.500" fill="#fff" stroke="#5a1a1a" stroke-width=".8"/><path d="M8.500 19L2 25" stroke="#8a2b3a" stroke-width="2"/></svg>
<svg class="abs" style="left:6.0px;top:204.0px" width="26" height="26" viewBox="0 0 26 26"><path d="M3 23l2-6L19 3l4 4L9 21z" fill="#d0122a" stroke="#5a0a12" stroke-width=".8"/><path d="M3 23l2-6 4 4z" fill="#e8d2a8" stroke="#5a0a12" stroke-width=".6"/><path d="M3 23l.8-2.300 1.500 1.500z" fill="#222"/><path d="M17 5l4 4" stroke="#888" stroke-width="1.500"/></svg>
<svg class="abs" style="left:40.0px;top:204.0px" width="26" height="26" viewBox="0 0 26 26"><path d="M3 23c-1-6 2-10 6-9s7 1 7-4-1-7 3-8 6 2 3 6-2 9-5 10" fill="none" stroke="#c0142c" stroke-width="2.200" stroke-linecap="round"/><circle cx="3" cy="23" r="1.600" fill="#e0102a"/><circle cx="19" cy="2.500" r="1.600" fill="#e0102a"/></svg>
<svg class="abs" style="left:6.0px;top:238.0px" width="26" height="26" viewBox="0 0 26 26"><rect x="4.500" y="3.500" width="16" height="18.500" fill="#8d8c7a" stroke="#333" stroke-width="1"/><path d="M4.500 22L20.500 3.500" stroke="#e0102a" stroke-width="3"/><path d="M4.500 22L20.500 3.500" stroke="#fff" stroke-width="1"/><circle cx="4.500" cy="22" r="1.600" fill="#e0102a"/><circle cx="20.500" cy="3.500" r="1.600" fill="#e0102a"/></svg>
<svg class="abs" style="left:40.0px;top:238.0px" width="26" height="26" viewBox="0 0 26 26"><rect x="6" y="3.500" width="15.500" height="18.500" fill="#8d8c7a" stroke="#333" stroke-width="1"/><path d="M5 3.500v18.500h16.500" fill="none" stroke="#e0102a" stroke-width="1.200"/><path d="M5 8.500c8 0 14 5 15.500 13.500" fill="none" stroke="#e0102a" stroke-width="2.600"/><path d="M5 8.500c8 0 14 5 15.500 13.500" fill="none" stroke="#fff" stroke-width=".8"/><circle cx="5" cy="3.500" r="1.500" fill="#e0102a"/><circle cx="5" cy="8.500" r="1.500" fill="#e0102a"/><circle cx="5" cy="22" r="1.500" fill="#e0102a"/><circle cx="21" cy="22" r="1.500" fill="#e0102a"/></svg>
<svg class="abs" style="left:6.0px;top:273.0px" width="26" height="26" viewBox="0 0 26 26"><circle cx="12" cy="14" r="10" fill="#8d8c7a" stroke="#333" stroke-width="1.200"/><path d="M12 14l7.500-7" stroke="#e0102a" stroke-width="3"/><path d="M12 14l7.500-7" stroke="#fff" stroke-width="1"/><circle cx="12" cy="14" r="1.700" fill="#e0102a"/><circle cx="19.500" cy="7" r="1.600" fill="#e0102a"/></svg>
<svg class="abs" style="left:40.0px;top:273.0px" width="26" height="26" viewBox="0 0 26 26"><circle cx="13" cy="13.500" r="10.500" fill="none" stroke="#e0102a" stroke-width="1"/><path d="M8 4l11 .5 4.500 9.500-7 9.500-11-3.500-2.500-8z" fill="#8d8c7a" stroke="#333" stroke-width="1.200"/><path d="M13 14l7.500-7" stroke="#e0102a" stroke-width="3"/><path d="M13 14l7.500-7" stroke="#fff" stroke-width="1"/><circle cx="13" cy="14" r="1.700" fill="#e0102a"/><circle cx="20.500" cy="7" r="1.600" fill="#e0102a"/></svg>
<svg class="abs" style="left:6.0px;top:307.0px" width="26" height="26" viewBox="0 0 26 26"><path d="M3.500 22.500C14 21 21 14 22.500 3.500" fill="none" stroke="#222" stroke-width="1.400"/><path d="M3.500 3.500h19L3.500 22.500" fill="none" stroke="#e0102a" stroke-width="1.200"/><circle cx="3.500" cy="3.500" r="1.600" fill="#e0102a"/><circle cx="22.500" cy="3.500" r="1.600" fill="#e0102a"/><circle cx="3.500" cy="22.500" r="1.600" fill="#e0102a"/></svg>
<svg class="abs" style="left:40.0px;top:307.0px" width="26" height="26" viewBox="0 0 26 26"><path d="M6 22.500C0 14 4 4 14 2.500c4 0 7 1 9 4.500" fill="none" stroke="#222" stroke-width="1.400"/><path d="M6 22.500L23 7M4.500 6.500L14 15" fill="none" stroke="#e0102a" stroke-width="1.200"/><circle cx="6" cy="22.500" r="1.600" fill="#e0102a"/><circle cx="23" cy="7" r="1.600" fill="#e0102a"/><circle cx="4.500" cy="6.500" r="1.600" fill="#e0102a"/></svg>
<svg class="abs" style="left:6.0px;top:341.0px" width="26" height="26" viewBox="0 0 26 26"><path d="M9 2.500c9-2 16 6 13 14-2 5-7 7-11 6.500" fill="none" stroke="#222" stroke-width="1.400"/><path d="M9 2.500L19 22 3.500 16" fill="none" stroke="#e0102a" stroke-width="1.200"/><circle cx="9" cy="2.500" r="1.600" fill="#e0102a"/><circle cx="19" cy="22" r="1.600" fill="#e0102a"/><circle cx="3.500" cy="16" r="1.600" fill="#e0102a"/></svg>
<svg class="abs" style="left:40.0px;top:341.0px" width="26" height="26" viewBox="0 0 26 26"><path d="M4.500 3.500h18C22 14 15 21.500 4.500 22.500z" fill="#8d8c7a" stroke="#333" stroke-width="1"/><path d="M4.500 22.500L22.500 3.500" stroke="#e0102a" stroke-width="3"/><path d="M4.500 22.500L22.500 3.500" stroke="#fff" stroke-width="1"/><path d="M4.500 3.500h18M4.500 3.500v19" stroke="#e0102a" stroke-width="1.200"/><circle cx="4.500" cy="3.500" r="1.600" fill="#e0102a"/><circle cx="22.500" cy="3.500" r="1.600" fill="#e0102a"/><circle cx="4.500" cy="22.500" r="1.600" fill="#e0102a"/></svg>
<svg class="abs" style="left:6.0px;top:383.0px" width="26" height="26" viewBox="0 0 26 26"><g fill="#e0102a" stroke="#7a0a14" stroke-width=".6"><path d="M13 1.500l4 4.500h-2.500v4h-3V6H9z"/><path d="M13 24.500l4-4.500h-2.500v-4h-3v4H9z"/><path d="M1.500 13l4.500-4v2.500h4v3H6V17z"/><path d="M24.500 13l-4.500-4v2.500h-4v3h4V17z"/></g><path d="M7 7l3 3M19 7l-3 3M7 19l3-3M19 19l-3-3" stroke="#e0102a" stroke-width="2"/></svg>
<svg class="abs" style="left:40.0px;top:383.0px" width="26" height="26" viewBox="0 0 26 26"><path d="M2 16l9-5h6l8 5-11 6z" fill="#8d8c7a" stroke="#333" stroke-width="1"/><path d="M2 16l12 6v2.500L2 18.500z" fill="#6d6c5d" stroke="#333" stroke-width=".8"/><path d="M14 22l11-6v2.500L14 24.500z" fill="#55554a" stroke="#333" stroke-width=".8"/><path d="M13.500 1.500l5 6h-3v9h-4v-9h-3z" fill="#e0102a" stroke="#7a0a14" stroke-width=".7"/></svg>
<svg class="abs" style="left:6.0px;top:417.0px" width="26" height="26" viewBox="0 0 26 26"><path d="M3 12A10 10 0 0 1 20 6l2.500-2.500V12H14l3-3A6 6 0 0 0 7.500 12z" fill="#e0102a" stroke="#7a0a14" stroke-width=".6"/><path d="M23 14A10 10 0 0 1 6 20L3.500 22.500V14H12l-3 3a6 6 0 0 0 9.500-3z" fill="#e0102a" stroke="#7a0a14" stroke-width=".6"/></svg>
<svg class="abs" style="left:40.0px;top:417.0px" width="26" height="26" viewBox="0 0 26 26"><path d="M3 15C3 6 12 1 23 5l-1 7c-6-3-12-1-12 4 0 3 2 5 5 6l-2 3C7 24 3 20 3 15z" fill="#5a5a55" stroke="#222" stroke-width="1"/><path d="M8 15c0-6 7-9 14-6l-1 4c-5-2-9 0-9 3z" fill="#d0122a"/><path d="M13 16l6-1.500-1 2 5 .5-1 5-4.500-1-1 2z" fill="#e0102a" stroke="#7a0a14" stroke-width=".6"/></svg>
<svg class="abs" style="left:6.0px;top:451.0px" width="26" height="26" viewBox="0 0 26 26"><rect x="2" y="3" width="21" height="21" fill="#fff" stroke="#e0102a" stroke-width="1"/><rect x="2" y="9" width="15" height="15" fill="#8d8c7a" stroke="#333" stroke-width="1"/><path d="M23.500 2L14 4l2.500 2.500L12 11l3.500 3.500L20 10l2.500 2.500z" fill="#e0102a" stroke="#7a0a14" stroke-width=".6"/></svg>
<svg class="abs" style="left:40.0px;top:451.0px" width="26" height="26" viewBox="0 0 26 26"><path d="M3 9C10 1 22 4 23 16c.3 3-.5 5.500-1.500 7" fill="none" stroke="#e0102a" stroke-width="1.800"/><path d="M6 15c4-4 10-3 11 3 .3 2 0 4-1 5.500" fill="none" stroke="#222" stroke-width="1.300"/><path d="M10 20c1-2 3-2 4 0" fill="none" stroke="#222" stroke-width="1"/><path d="M23 5L14.500 6.500l2 2-4 4 3 3 4-4 2 2z" fill="#e0102a" stroke="#7a0a14" stroke-width=".6"/></svg>
<svg class="abs" style="left:6.0px;top:492.0px" width="26" height="26" viewBox="0 0 26 26"><path d="M10 7l6-4.500 7 1.500v9l-7 5.500-6-2.500z" fill="#3a3a32" stroke="#111" stroke-width="1"/><path d="M13 8.500l4-3 4 1v5.500l-4 3.500-4-1.500z" fill="#f1e419"/><path d="M2 20.500l9-6 2.500 3-9 6z" fill="#f1e419" stroke="#3a3a12" stroke-width=".8"/><path d="M1.500 21l2 3" stroke="#111" stroke-width="2"/></svg>
<svg class="abs" style="left:40.0px;top:492.0px" width="26" height="26" viewBox="0 0 26 26"><path d="M5 12L16 2.500M12 21L23 11" stroke="#222" stroke-width=".9"/><path d="M6 14l10 9M15 4.500l9 8.500" stroke="#222" stroke-width=".9"/><path d="M3.500 10l4 4M3.500 14l4-4M14 1l4 4M14 5l4-4" stroke="#111" stroke-width="1.300"/><circle cx="16" cy="23" r="1.300" fill="#2c9a3a"/><circle cx="24" cy="13" r="1.300" fill="#2c9a3a"/><path d="M8 4.500a2.300 2.300 0 1 1-1.500 1" fill="none" stroke="#222" stroke-width=".8"/></svg>
<svg class="abs" style="left:6.0px;top:525.0px" width="26" height="26" viewBox="0 0 26 26"><path d="M2.500 18C2 9 10 3 23.500 4.500L17 23C10 24 3.500 22 2.500 18z" fill="#f1e419" stroke="#3a3a12" stroke-width="1.400"/><path d="M7.500 17c0-5 4-8 11-8l-3.500 10c-4 .5-7-.5-7.500-2z" fill="#f0f0f0" stroke="#3a3a12" stroke-width="1.200"/></svg>
<svg class="abs" style="left:40.0px;top:525.0px" width="26" height="26" viewBox="0 0 26 26"><rect x="8.500" y="1.500" width="16" height="13" fill="#fff" stroke="#222" stroke-width="1"/><text x="16.500" y="12" font-family="Liberation Serif,serif" font-size="10" text-anchor="middle" fill="#000">A1</text><path d="M8.500 10.500H4.500V21" fill="none" stroke="#222" stroke-width="1"/><path d="M4.500 25l-2.300-5h4.600z" fill="#111"/></svg>
<svg class="abs" style="left:6.0px;top:560.0px" width="26" height="26" viewBox="0 0 26 26"><path d="M12.500 15V3" stroke="#1a4fb5" stroke-width="1.800"/><path d="M12.500 1l-2.500 4h5z" fill="#1a4fb5"/><path d="M12.500 15l9-5" stroke="#2c9a3a" stroke-width="1.600"/><path d="M23.500 9l-4.500.2 2 3.300z" fill="#2c9a3a"/><path d="M12.500 15l9 6" stroke="#d0122a" stroke-width="1.600"/><path d="M23.500 22.500l-2-4-2.300 3.200z" fill="#d0122a"/><path d="M12.500 15v9" stroke="#58a8e0" stroke-width="1.200" stroke-dasharray="2 1.500"/><path d="M12.500 15L4 10M12.500 15L4 21" stroke="#d0122a" stroke-width=".8" stroke-dasharray="1.500 1.500"/><circle cx="12.500" cy="15" r="1.600" fill="#111"/></svg>
<svg class="abs" style="left:40.0px;top:560.0px" width="26" height="26" viewBox="0 0 26 26"><path d="M3 22L10 2.500h5L23 21l-3.500 3-3-1.500-1.500-4H10l-1.500 4z" fill="#4a4a45" stroke="#111" stroke-width="1"/><path d="M10 2.500L3 22l3 1.500L12.500 6z" fill="#77776f"/><path d="M11 14.500h4.500L13 8z" fill="#f0f0f0" stroke="#111" stroke-width=".7"/></svg>
<svg class="abs" style="left:6.0px;top:602.0px" width="26" height="26" viewBox="0 0 26 26"><path d="M2 13c0-4 4-6 9-6v4c-3 0-5 1-5 3s3 3 6 3l-1-2 6 3.500-6 3.500 1-2.500C6 20 2 17.500 2 13z" fill="#d0122a" stroke="#6a0a12" stroke-width=".7"/><path d="M24 12c0 4-4 6-9 6v-4c3 0 5-1 5-3s-3-3-6-3l1 2-6-3.500L15 2l-1 2.500C20 5 24 7.500 24 12z" fill="#38b058" stroke="#14602a" stroke-width=".7"/><path d="M13 1v24" stroke="#111" stroke-width="1.600"/></svg>
<svg class="abs" style="left:40.0px;top:602.0px" width="26" height="26" viewBox="0 0 26 26"><path d="M4 14l3-2 3 3V5.500c0-1.800 2.500-1.800 2.500 0V4c0-1.800 2.600-1.800 2.600 0v1c0-1.800 2.600-1.800 2.600 0v2c0-1.600 2.400-1.600 2.400 0V17c0 4-3 7-7 7s-6-2-8-5z" fill="#f6e6c0" stroke="#a89060" stroke-width="1"/></svg>
<svg class="abs" style="left:6.0px;top:637.0px" width="26" height="26" viewBox="0 0 26 26"><path d="M9.500 14.500L2.500 22.500" stroke="#111" stroke-width="3" stroke-linecap="round"/><circle cx="15" cy="9" r="7" fill="#8fc0ea" stroke="#1c2c3c" stroke-width="1.500"/><path d="M11 8a4.500 4.500 0 0 1 5-3.500" fill="none" stroke="#d8ecfa" stroke-width="1.400"/></svg>
<svg class="abs" style="left:40.0px;top:637.0px" width="26" height="26" viewBox="0 0 26 26"><rect x="2.500" y="3.500" width="21" height="20" fill="none" stroke="#e0102a" stroke-width="1.600"/><path d="M9.500 14.500L2.500 22.500" stroke="#111" stroke-width="3" stroke-linecap="round"/><circle cx="15" cy="9" r="7" fill="#8fc0ea" stroke="#1c2c3c" stroke-width="1.500"/><path d="M11 8a4.500 4.500 0 0 1 5-3.500" fill="none" stroke="#d8ecfa" stroke-width="1.400"/></svg>
<svg class="abs" style="left:6.0px;top:671.0px" width="26" height="26" viewBox="0 0 26 26"><path d="M8.500 16.500L2.500 23.500" stroke="#111" stroke-width="2.600" stroke-linecap="round"/><circle cx="12.500" cy="12" r="5.500" fill="#8fc0ea" stroke="#1c2c3c" stroke-width="1.300"/><g fill="#e0102a" stroke="#7a0a14" stroke-width=".5"><path d="M1.500 1.500l6 1.500-1.700 1.700 3 3-1.600 1.600-3-3L2.500 8z"/><path d="M24.500 1.500l-6 1.500 1.700 1.700-3 3 1.600 1.600 3-3L23.500 8z"/><path d="M24.500 24.500l-6-1.500 1.700-1.700-3-3 1.600-1.600 3 3 1.700-1.700z"/></g></svg>
<svg class="abs" style="left:40.0px;top:671.0px" width="26" height="26" viewBox="0 0 26 26"><circle cx="10" cy="10" r="6.500" fill="#8fc0ea" stroke="#1c2c3c" stroke-width="1.200"/><path d="M3 10.500l7-7v4c8 0 13 3 12 11-2-4-5-5.500-12-5v4z" fill="#1e8ce6" stroke="#0d4a88" stroke-width="1"/><path d="M14 14l8 8" stroke="#12283c" stroke-width="3.400" stroke-linecap="round"/></svg>
<svg class="abs" style="left:6.0px;top:712.0px" width="26" height="26" viewBox="0 0 26 26"><circle cx="13" cy="3.500" r="1.700" fill="#fff" stroke="#222" stroke-width=".9"/><path d="M10.500 7h5l1 8h-1.500l-.5 6h-3l-.5-6H9.500z" fill="#fff" stroke="#222" stroke-width=".9"/><path d="M8 25l5-4 5 4M9 20.500l8 3.500M17 20.500L9 24" fill="none" stroke="#e0102a" stroke-width="1"/></svg>
<svg class="abs" style="left:40.0px;top:712.0px" width="26" height="26" viewBox="0 0 26 26"><path d="M1.500 13C6 6 18 5 24.500 12 19 19 7 19 1.500 13z" fill="#fff" stroke="#111" stroke-width="1.200"/><path d="M2 9C7 3 18 2.500 24.500 9" fill="none" stroke="#111" stroke-width="1.800"/><circle cx="13" cy="12" r="4.500" fill="#222"/><circle cx="11.500" cy="10.500" r="1.300" fill="#fff"/><path d="M5 17c4 4 12 4 17 0M7 19.500c3 2 9 2 12.500 0" fill="none" stroke="#888" stroke-width=".8"/></svg>
<svg class="abs" style="left:6.0px;top:746.0px" width="26" height="26" viewBox="0 0 26 26"><path d="M4 6c1-4 6-4 6.500 0 .5 3.500-.5 7-1 10H5C4 13 3.500 9 4 6z" fill="#111"/><path d="M5 17.500h4.500c.5 3.500-.5 6-2.500 6s-2.500-3-2-6z" fill="#111"/><path d="M15 3c1.500-3.500 6.500-2.500 6.500 1.500 0 3.500-1.500 6.500-2.500 9.500l-4.500-1C14 10 14 6 15 3z" fill="#111"/><path d="M14 14.500l4.500 1c-.5 3.500-2 5.500-4 5s-1.500-3.500-.5-6z" fill="#111"/><path d="M5.500 10h3.500M15.500 8l4 .8" stroke="#bbb" stroke-width="1"/></svg>
<svg class="abs" style="left:40.0px;top:746.0px" width="26" height="26" viewBox="0 0 26 26"><circle cx="12.500" cy="13" r="7" fill="#fff" stroke="#111" stroke-width="1.100"/><path d="M1.500 13h20" stroke="#111" stroke-width="1.600"/><path d="M24 13l-5.500-3.200v6.400z" fill="#111"/><path d="M12.500 3.200l5 3.800M12.500 22.800l5-3.800" stroke="#111" stroke-width="1.800"/><text x="12.500" y="11.300" font-size="5.500" text-anchor="middle" font-family="Liberation Sans,sans-serif" fill="#111">C</text><text x="12.500" y="19" font-size="4.600" text-anchor="middle" font-family="Liberation Sans,sans-serif" fill="#111">A B</text></svg>
<svg class="abs" style="left:5.0px;top:788.0px" width="28" height="28" viewBox="-1 -1 28 28"><g fill="none" stroke="#1173b8" stroke-width="2"><path d="M12 2L21.500 7v6.500M12 2L2.500 7v11l9.500 5 3-1.500"/><path d="M12 7.500l5 2.500v5.500l-5 2.500-5-2.500V10z" stroke-width="1.600"/><path d="M7 10l5 2.500 5-2.500M12 12.500V18" stroke-width="1.300"/></g><path d="M17 16h5v4h2.500L19.500 25.500 14.500 20H17z" fill="#fff" stroke="#1173b8" stroke-width="1.500"/></svg>
<svg class="abs" style="left:39.0px;top:788.0px" width="28" height="28" viewBox="-1 -1 28 28"><g fill="none" stroke="#1173b8" stroke-width="2.800"><path d="M2 4c5 0 6 4 11 4s6-4 11-4"/><path d="M2 22c5 0 6-4 11-4s6 4 11 4"/><path d="M3 10.500c5 0 5 2.500 10 2.500s5-2.500 10-2.500M3 15.500c5 0 5-2.500 10-2.500s5 2.500 10 2.500"/></g></svg>
<svg class="abs" style="left:5.0px;top:822.0px" width="28" height="28" viewBox="0 -1 28 28"><g fill="none" stroke="#1173b8" stroke-width="1.800"><path d="M2 9l10-5 10 5-10 5z"/><path d="M2 13.500l10 5 4-2M2 18l10 5 3-1.500"/><path d="M8 9l4-2 4 2-4 2z" stroke-width="1.300"/></g><path d="M14 16h7v-3.500l6 5.500-6 5.500V20h-7z" fill="#fff" stroke="#1173b8" stroke-width="1.500"/></svg>
<svg class="abs" style="left:39.0px;top:822.0px" width="28" height="28" viewBox="-1 -1 28 28"><g fill="none" stroke="#1173b8" stroke-width="2.800"><path d="M2 4c5 0 6 4 11 4s6-4 11-4"/><path d="M2 22c5 0 6-4 11-4s6 4 11 4"/><path d="M3 10.500c5 0 5 2.500 10 2.500s5-2.500 10-2.500M3 15.500c5 0 5-2.500 10-2.500s5 2.500 10 2.500"/></g><circle cx="21" cy="21" r="5.500" fill="#f0f0f0"/><circle cx="21" cy="21" r="4" fill="#fff" stroke="#1173b8" stroke-width="1.400"/><circle cx="21" cy="21" r="1.500" fill="none" stroke="#1173b8" stroke-width="1"/><g stroke="#1173b8" stroke-width="1.600"><path d="M21 15v2M21 25v2M15 21h2M25 21h2M16.800 16.800l1.400 1.400M23.800 23.800l1.400 1.400M16.800 25.200l1.400-1.400M23.800 18.200l1.400-1.400"/></g></svg>
<div id="vp"><svg style="left:-74px;top:-107px" width="1920" height="1032" viewBox="0 0 1920 1032">
<defs><linearGradient id="sky" x1="0" y1="0" x2="0" y2="1"><stop offset="0" stop-color="#c7cdd2"/><stop offset="1" stop-color="#f0f2f4"/></linearGradient><clipPath id="slatclip"><polygon points="664,254 957,252.500 957,312 913,312 913,331 664,331"/></clipPath></defs>
<rect x="74" y="107" width="1521" height="547" fill="url(#sky)"/>
<rect x="74" y="654" width="1521" height="349" fill="#cdcec9"/>
<line x1="74" y1="671.500" x2="641" y2="658.500" stroke="#2fae3a" stroke-width="1"/>
<polygon points="291.500,974.500 480,872.500 613,873.500 613,977" fill="#676767" stroke="none" stroke-width="1" stroke-linejoin="round" />
<polygon points="291.500,974.500 613,977 613,1000.500 291.500,999.500" fill="#fff" stroke="none" stroke-width="1" stroke-linejoin="round" />
<line x1="291.5" y1="974.5" x2="613" y2="977" stroke="#222" stroke-width="0.7" stroke-linecap="round"/>
<polygon points="291.500,974.500 480,872.500 613,873.500 613,1000.500 291.500,999.500" fill="none" stroke="#000" stroke-width="1.8" stroke-linejoin="round" />
<polygon points="620,874 649,846.500 649,966 620,1001" fill="#676767" stroke="#000" stroke-width="1.8" stroke-linejoin="round" />
<polygon points="612,875.500 620,875 620,1001 612,1000.500" fill="#fff" stroke="#000" stroke-width="1.4" stroke-linejoin="round" />
<polygon points="972,806.500 1069.500,807.500 1159,880 982,880 972,860" fill="#676767" stroke="#000" stroke-width="0.9" stroke-linejoin="round" />
<polygon points="972,816.500 1081,817.300 1084.500,820.500 972,820" fill="#e4e4e4" stroke="#000" stroke-width="0.8" stroke-linejoin="round" />
<polygon points="972,860 982,880 982.500,971 972,941" fill="#676767" stroke="#000" stroke-width="1.4" stroke-linejoin="round" />
<polygon points="1160,915.500 1196,946.500 1160,946.500" fill="#676767" stroke="#000" stroke-width="0.9" stroke-linejoin="round" />
<polygon points="982,880 1159.500,880 1160,946.500 982.500,946" fill="#fff" stroke="#000" stroke-width="0.9" stroke-linejoin="round" />
<polygon points="982.500,946 1196,946.500 1196,971.500 982.500,971" fill="#fff" stroke="#000" stroke-width="0.9" stroke-linejoin="round" />
<path d="M972 806.500L1069.500 807.500 1159.500 880 1160 915.500 1196 946.500V971.500H982.500L972 941z" fill="none" stroke="#000" stroke-width="1.800" stroke-linejoin="round"/>
<line x1="988" y1="946.5" x2="988" y2="971" stroke="#000" stroke-width="0.9" stroke-linecap="round"/>
<polygon points="660,906 780,906 780,948 660,948" fill="#6a6a6a" stroke="none" stroke-width="1" stroke-linejoin="round" />
<polygon points="694,907 747,907 747,910.300 694,910.300" fill="#7a7a7a" stroke="none" stroke-width="1" stroke-linejoin="round" />
<polygon points="694,910.300 746.500,910.300 746.500,919.700 694,919.700" fill="#fff" stroke="#000" stroke-width="1" stroke-linejoin="round" />
<line x1="676" y1="920.5" x2="747" y2="920.5" stroke="#000" stroke-width="1.4" stroke-linecap="round"/>
<line x1="675.5" y1="907" x2="675.5" y2="921" stroke="#fff" stroke-width="1.2" stroke-linecap="round"/>
<polygon points="674.600,924 746.500,924 746.500,928 674.600,928" fill="#fff" stroke="#000" stroke-width="0.8" stroke-linejoin="round" />
<polygon points="674.600,928 746.500,928 746.500,943 671,943" fill="#8e8e8e" stroke="none" stroke-width="1" stroke-linejoin="round" />
<line x1="662" y1="944" x2="780" y2="944" stroke="#000" stroke-width="1.4" stroke-linecap="round"/>
<polygon points="772,905.500 798.500,905.500 797,911.400 772,911.400" fill="#7a7a7a" stroke="none" stroke-width="1" stroke-linejoin="round" />
<rect x="760" y="905.5" width="10.4" height="17.5" fill="#fff" stroke="#000" stroke-width="1" />
<polygon points="770.400,911.400 797,911.400 796.500,919.700 770.400,919.700" fill="#fff" stroke="#000" stroke-width="1" stroke-linejoin="round" />
<polygon points="757,924 787.500,924 787,928 757,928" fill="#fff" stroke="#000" stroke-width="0.8" stroke-linejoin="round" />
<polygon points="757,928 789,928 788.500,938 786,944 757,944" fill="#8e8e8e" stroke="#000" stroke-width="0.8" stroke-linejoin="round" />
<polygon points="778.800,945 787,944.500 786,953 781.900,953" fill="#fff" stroke="#000" stroke-width="0.8" stroke-linejoin="round" />
<rect x="649.6" y="906.5" width="10.9" height="41" fill="#fff" stroke="#000" stroke-width="1.2" />
<rect x="748" y="905" width="8.9" height="44.5" fill="#fff" stroke="#000" stroke-width="1.2" />
<polygon points="649,947.500 778.800,947.500 781.900,952.500 777.700,977 649,973.500" fill="#fff" stroke="#000" stroke-width="1.8" stroke-linejoin="round" />
<polygon points="778.800,947.500 781.900,952.500 777.700,977 776,975" fill="#777" stroke="#000" stroke-width="0.8" stroke-linejoin="round" />
<polygon points="898.600,905.500 972,905.500 972,939.500 898.600,938.500" fill="#fff" stroke="#000" stroke-width="1.4" stroke-linejoin="round" />
<polygon points="898.600,905.500 963,905.500 963,907.300 898.600,907.300" fill="#6a6a6a" stroke="none" stroke-width="1" stroke-linejoin="round" />
<polygon points="898.600,916 963,914.600 963,915.800 898.600,927" fill="#6a6a6a" stroke="#000" stroke-width="0.8" stroke-linejoin="round" />
<line x1="905" y1="928.4" x2="972" y2="928.4" stroke="#999" stroke-width="0.8" stroke-linecap="round"/>
<line x1="963" y1="905.5" x2="963" y2="939.3" stroke="#000" stroke-width="0.9" stroke-linecap="round"/>
<polygon points="621,902 642,882 745,882 752,878 972,878 980,900 733,900 733,902.500" fill="#676767" stroke="#000" stroke-width="1.2" stroke-linejoin="round" />
<polygon points="621,902.500 733,903 733,900 980,900 980,905 733,905 733,907.500 621,907.500" fill="#fff" stroke="#000" stroke-width="1.1" stroke-linejoin="round" />
<polygon points="749,361 968,357 971.500,878 752,878 749,855" fill="#fff" stroke="#000" stroke-width="1" stroke-linejoin="round" />
<line x1="960.5" y1="312" x2="963" y2="878" stroke="#555" stroke-width="0.8" stroke-linecap="round"/>
<line x1="752" y1="854.5" x2="971" y2="854.5" stroke="#000" stroke-width="0.8" stroke-linecap="round"/>
<line x1="752" y1="872.5" x2="971.5" y2="872.5" stroke="#000" stroke-width="1.8" stroke-linecap="round"/>
<polygon points="664,386 678,386 677,855 663,855" fill="#fff" stroke="none" stroke-width="1" stroke-linejoin="round" />
<polygon points="678,398 749,398 749,838 677,838" fill="#fff" stroke="none" stroke-width="1" stroke-linejoin="round" />
<line x1="669.5" y1="400" x2="668.5" y2="700" stroke="#111" stroke-width="1.2" stroke-linecap="round"/>
<line x1="673.4" y1="404" x2="672.5" y2="700" stroke="#555" stroke-width="0.9" stroke-linecap="round"/>
<line x1="677.5" y1="398" x2="676.5" y2="838" stroke="#000" stroke-width="2" stroke-linecap="round"/>
<polygon points="654.500,229 663.500,229 662.500,701 661,853 651.500,853 653,701" fill="#4a4a4a" stroke="#000" stroke-width="1" stroke-linejoin="round" />
<line x1="654.7" y1="229" x2="653" y2="701" stroke="#000" stroke-width="2.2" stroke-linecap="round"/>
<line x1="653" y1="701" x2="651.5" y2="853" stroke="#000" stroke-width="2.2" stroke-linecap="round"/>
<line x1="663.5" y1="331" x2="662.5" y2="701" stroke="#000" stroke-width="1" stroke-linecap="round"/>
<polygon points="662,701 671,701 671,853 661,853" fill="#6e6e6e" stroke="#000" stroke-width="0.8" stroke-linejoin="round" />
<polygon points="654.500,223.300 962.800,221.500 962.800,311 957,311 957,331 654.500,331" fill="#2c2e2e" stroke="#000" stroke-width="1.8" stroke-linejoin="round" />
<path d="M662.6 229.6h20.800a10.400 12.600 0 0 1 -20.800 0z" fill="#d4d9dc" stroke="#000" stroke-width="1.200"/>
<path d="M685.2 229.5h20.800a10.400 12.600 0 0 1 -20.800 0z" fill="#d4d9dc" stroke="#000" stroke-width="1.200"/>
<line x1="684.4" y1="230.5" x2="684.4" y2="246.7" stroke="#000" stroke-width=".9"/>
<path d="M707.9 229.3h20.800a10.400 12.600 0 0 1 -20.800 0z" fill="#d4d9dc" stroke="#000" stroke-width="1.200"/>
<line x1="707.0" y1="230.3" x2="707.0" y2="246.6" stroke="#000" stroke-width=".9"/>
<path d="M730.5 229.2h20.800a10.400 12.600 0 0 1 -20.800 0z" fill="#d4d9dc" stroke="#000" stroke-width="1.200"/>
<line x1="729.6" y1="230.2" x2="729.6" y2="246.6" stroke="#000" stroke-width=".9"/>
<path d="M753.2 229.1h20.800a10.400 12.600 0 0 1 -20.800 0z" fill="#d4d9dc" stroke="#000" stroke-width="1.200"/>
<line x1="752.3" y1="230.1" x2="752.3" y2="246.5" stroke="#000" stroke-width=".9"/>
<path d="M775.9 229.0h20.800a10.400 12.600 0 0 1 -20.800 0z" fill="#d4d9dc" stroke="#000" stroke-width="1.200"/>
<line x1="775.0" y1="230.0" x2="775.0" y2="246.4" stroke="#000" stroke-width=".9"/>
<path d="M798.5 228.8h20.800a10.400 12.600 0 0 1 -20.800 0z" fill="#d4d9dc" stroke="#000" stroke-width="1.200"/>
<line x1="797.6" y1="229.8" x2="797.6" y2="246.3" stroke="#000" stroke-width=".9"/>
<path d="M821.1 228.7h20.800a10.400 12.600 0 0 1 -20.800 0z" fill="#d4d9dc" stroke="#000" stroke-width="1.200"/>
<line x1="820.2" y1="229.7" x2="820.2" y2="246.2" stroke="#000" stroke-width=".9"/>
<path d="M843.8 228.6h20.800a10.400 12.600 0 0 1 -20.800 0z" fill="#d4d9dc" stroke="#000" stroke-width="1.200"/>
<line x1="842.9" y1="229.6" x2="842.9" y2="246.2" stroke="#000" stroke-width=".9"/>
<path d="M866.5 228.5h20.800a10.400 12.600 0 0 1 -20.800 0z" fill="#d4d9dc" stroke="#000" stroke-width="1.200"/>
<line x1="865.6" y1="229.5" x2="865.6" y2="246.1" stroke="#000" stroke-width=".9"/>
<path d="M889.1 228.3h20.800a10.400 12.600 0 0 1 -20.800 0z" fill="#d4d9dc" stroke="#000" stroke-width="1.200"/>
<line x1="888.2" y1="229.3" x2="888.2" y2="246.0" stroke="#000" stroke-width=".9"/>
<path d="M911.8 228.2h20.800a10.400 12.600 0 0 1 -20.800 0z" fill="#d4d9dc" stroke="#000" stroke-width="1.200"/>
<line x1="910.9" y1="229.2" x2="910.9" y2="245.9" stroke="#000" stroke-width=".9"/>
<path d="M934.4 228.1h20.800a10.400 12.600 0 0 1 -20.800 0z" fill="#d4d9dc" stroke="#000" stroke-width="1.200"/>
<line x1="933.5" y1="229.1" x2="933.5" y2="245.8" stroke="#000" stroke-width=".9"/>
<polygon points="657,247 960,245.800 960,252.800 657,254" fill="#414444" stroke="#000" stroke-width="1.2" stroke-linejoin="round" />
<g clip-path="url(#slatclip)">
<polygon points="664,254 668,254 691,302 691,331 664,331" fill="#d9dde0" stroke="none" stroke-width="1" stroke-linejoin="round" />
<rect x="691" y="302.5" width="224" height="28.5" fill="#fff" stroke="none" stroke-width="1" />
<rect x="691" y="312.5" width="224" height="7" fill="#7d7d7d" stroke="none" stroke-width="1" />
<rect x="915" y="254" width="42" height="58" fill="#1d1f1f" stroke="none" stroke-width="1" />
<rect x="665.20" y="253" width="3.150" height="78" fill="#151717"/>
<rect x="668.35" y="253" width="2.300" height="50" fill="#3a3d3d" opacity="0"/>
<rect x="670.65" y="253" width="3.150" height="78" fill="#151717"/>
<rect x="673.80" y="253" width="2.300" height="50" fill="#3a3d3d" opacity="0"/>
<rect x="676.10" y="253" width="3.150" height="78" fill="#151717"/>
<rect x="679.25" y="253" width="2.300" height="50" fill="#3a3d3d" opacity="0"/>
<rect x="681.55" y="253" width="3.150" height="78" fill="#151717"/>
<rect x="684.70" y="253" width="2.300" height="50" fill="#3a3d3d" opacity="0"/>
<rect x="687.00" y="253" width="3.150" height="78" fill="#151717"/>
<rect x="690.15" y="253" width="2.300" height="50" fill="#3a3d3d" opacity="0"/>
<rect x="692.45" y="253" width="3.150" height="78" fill="#151717"/>
<rect x="695.60" y="253" width="2.300" height="50" fill="#3a3d3d" opacity="1"/>
<rect x="695.20" y="302.500" width="3" height="10" fill="#fff"/><rect x="695.20" y="320" width="3" height="10.500" fill="#fff"/>
<rect x="697.90" y="253" width="3.150" height="78" fill="#151717"/>
<rect x="701.05" y="253" width="2.300" height="50" fill="#3a3d3d" opacity="1"/>
<rect x="700.65" y="302.500" width="3" height="10" fill="#fff"/><rect x="700.65" y="320" width="3" height="10.500" fill="#fff"/>
<rect x="703.35" y="253" width="3.150" height="78" fill="#151717"/>
<rect x="706.50" y="253" width="2.300" height="50" fill="#3a3d3d" opacity="1"/>
<rect x="706.10" y="302.500" width="3" height="10" fill="#fff"/><rect x="706.10" y="320" width="3" height="10.500" fill="#fff"/>
<rect x="708.80" y="253" width="3.150" height="78" fill="#151717"/>
<rect x="711.95" y="253" width="2.300" height="50" fill="#3a3d3d" opacity="1"/>
<rect x="711.55" y="302.500" width="3" height="10" fill="#fff"/><rect x="711.55" y="320" width="3" height="10.500" fill="#fff"/>
<rect x="714.25" y="253" width="3.150" height="78" fill="#151717"/>
<rect x="717.40" y="253" width="2.300" height="50" fill="#3a3d3d" opacity="1"/>
<rect x="717.00" y="302.500" width="3" height="10" fill="#fff"/><rect x="717.00" y="320" width="3" height="10.500" fill="#fff"/>
<rect x="719.70" y="253" width="3.150" height="78" fill="#151717"/>
<rect x="722.85" y="253" width="2.300" height="50" fill="#3a3d3d" opacity="1"/>
<rect x="722.45" y="302.500" width="3" height="10" fill="#fff"/><rect x="722.45" y="320" width="3" height="10.500" fill="#fff"/>
<rect x="725.15" y="253" width="3.150" height="78" fill="#151717"/>
<rect x="728.30" y="253" width="2.300" height="50" fill="#3a3d3d" opacity="1"/>
<rect x="727.90" y="302.500" width="3" height="10" fill="#fff"/><rect x="727.90" y="320" width="3" height="10.500" fill="#fff"/>
<rect x="730.60" y="253" width="3.150" height="78" fill="#151717"/>
<rect x="733.75" y="253" width="2.300" height="50" fill="#3a3d3d" opacity="1"/>
<rect x="733.35" y="302.500" width="3" height="10" fill="#fff"/><rect x="733.35" y="320" width="3" height="10.500" fill="#fff"/>
<rect x="736.05" y="253" width="3.150" height="78" fill="#151717"/>
<rect x="739.20" y="253" width="2.300" height="50" fill="#3a3d3d" opacity="1"/>
<rect x="738.80" y="302.500" width="3" height="10" fill="#fff"/><rect x="738.80" y="320" width="3" height="10.500" fill="#fff"/>
<rect x="741.50" y="253" width="3.150" height="78" fill="#151717"/>
<rect x="744.65" y="253" width="2.300" height="50" fill="#3a3d3d" opacity="1"/>
<rect x="744.25" y="302.500" width="3" height="10" fill="#fff"/><rect x="744.25" y="320" width="3" height="10.500" fill="#fff"/>
<rect x="746.95" y="253" width="3.150" height="78" fill="#151717"/>
<rect x="750.10" y="253" width="2.300" height="50" fill="#3a3d3d" opacity="1"/>
<rect x="749.70" y="302.500" width="3" height="10" fill="#fff"/><rect x="749.70" y="320" width="3" height="10.500" fill="#fff"/>
<rect x="752.40" y="253" width="3.150" height="78" fill="#151717"/>
<rect x="755.55" y="253" width="2.300" height="50" fill="#3a3d3d" opacity="1"/>
<rect x="755.15" y="302.500" width="3" height="10" fill="#fff"/><rect x="755.15" y="320" width="3" height="10.500" fill="#fff"/>
<rect x="757.85" y="253" width="3.150" height="78" fill="#151717"/>
<rect x="761.00" y="253" width="2.300" height="50" fill="#3a3d3d" opacity="1"/>
<rect x="760.60" y="302.500" width="3" height="10" fill="#fff"/><rect x="760.60" y="320" width="3" height="10.500" fill="#fff"/>
<rect x="763.30" y="253" width="3.150" height="78" fill="#151717"/>
<rect x="766.45" y="253" width="2.300" height="50" fill="#3a3d3d" opacity="1"/>
<rect x="766.05" y="302.500" width="3" height="10" fill="#fff"/><rect x="766.05" y="320" width="3" height="10.500" fill="#fff"/>
<rect x="768.75" y="253" width="3.150" height="78" fill="#151717"/>
<rect x="771.90" y="253" width="2.300" height="50" fill="#3a3d3d" opacity="1"/>
<rect x="771.50" y="302.500" width="3" height="10" fill="#fff"/><rect x="771.50" y="320" width="3" height="10.500" fill="#fff"/>
<rect x="774.20" y="253" width="3.150" height="78" fill="#151717"/>
<rect x="777.35" y="253" width="2.300" height="50" fill="#3a3d3d" opacity="1"/>
<rect x="776.95" y="302.500" width="3" height="10" fill="#fff"/><rect x="776.95" y="320" width="3" height="10.500" fill="#fff"/>
<rect x="779.65" y="253" width="3.150" height="78" fill="#151717"/>
<rect x="782.80" y="253" width="2.300" height="50" fill="#3a3d3d" opacity="1"/>
<rect x="782.40" y="302.500" width="3" height="10" fill="#fff"/><rect x="782.40" y="320" width="3" height="10.500" fill="#fff"/>
<rect x="785.10" y="253" width="3.150" height="78" fill="#151717"/>
<rect x="788.25" y="253" width="2.300" height="50" fill="#3a3d3d" opacity="1"/>
<rect x="787.85" y="302.500" width="3" height="10" fill="#fff"/><rect x="787.85" y="320" width="3" height="10.500" fill="#fff"/>
<rect x="790.55" y="253" width="3.150" height="78" fill="#151717"/>
<rect x="793.70" y="253" width="2.300" height="50" fill="#3a3d3d" opacity="1"/>
<rect x="793.30" y="302.500" width="3" height="10" fill="#fff"/><rect x="793.30" y="320" width="3" height="10.500" fill="#fff"/>
<rect x="796.00" y="253" width="3.150" height="78" fill="#151717"/>
<rect x="799.15" y="253" width="2.300" height="50" fill="#3a3d3d" opacity="1"/>
<rect x="798.75" y="302.500" width="3" height="10" fill="#fff"/><rect x="798.75" y="320" width="3" height="10.500" fill="#fff"/>
<rect x="801.45" y="253" width="3.150" height="78" fill="#151717"/>
<rect x="804.60" y="253" width="2.300" height="50" fill="#3a3d3d" opacity="1"/>
<rect x="804.20" y="302.500" width="3" height="10" fill="#fff"/><rect x="804.20" y="320" width="3" height="10.500" fill="#fff"/>
<rect x="806.90" y="253" width="3.150" height="78" fill="#151717"/>
<rect x="810.05" y="253" width="2.300" height="50" fill="#3a3d3d" opacity="1"/>
<rect x="809.65" y="302.500" width="3" height="10" fill="#fff"/><rect x="809.65" y="320" width="3" height="10.500" fill="#fff"/>
<rect x="812.35" y="253" width="3.150" height="78" fill="#151717"/>
<rect x="815.50" y="253" width="2.300" height="50" fill="#3a3d3d" opacity="1"/>
<rect x="815.10" y="302.500" width="3" height="10" fill="#fff"/><rect x="815.10" y="320" width="3" height="10.500" fill="#fff"/>
<rect x="817.80" y="253" width="3.150" height="78" fill="#151717"/>
<rect x="820.95" y="253" width="2.300" height="50" fill="#3a3d3d" opacity="1"/>
<rect x="820.55" y="302.500" width="3" height="10" fill="#fff"/><rect x="820.55" y="320" width="3" height="10.500" fill="#fff"/>
<rect x="823.25" y="253" width="3.150" height="78" fill="#151717"/>
<rect x="826.40" y="253" width="2.300" height="50" fill="#3a3d3d" opacity="1"/>
<rect x="826.00" y="302.500" width="3" height="10" fill="#fff"/><rect x="826.00" y="320" width="3" height="10.500" fill="#fff"/>
<rect x="828.70" y="253" width="3.150" height="78" fill="#151717"/>
<rect x="831.85" y="253" width="2.300" height="50" fill="#3a3d3d" opacity="1"/>
<rect x="831.45" y="302.500" width="3" height="10" fill="#fff"/><rect x="831.45" y="320" width="3" height="10.500" fill="#fff"/>
<rect x="834.15" y="253" width="3.150" height="78" fill="#151717"/>
<rect x="837.30" y="253" width="2.300" height="50" fill="#3a3d3d" opacity="1"/>
<rect x="836.90" y="302.500" width="3" height="10" fill="#fff"/><rect x="836.90" y="320" width="3" height="10.500" fill="#fff"/>
<rect x="839.60" y="253" width="3.150" height="78" fill="#151717"/>
<rect x="842.75" y="253" width="2.300" height="50" fill="#3a3d3d" opacity="1"/>
<rect x="842.35" y="302.500" width="3" height="10" fill="#fff"/><rect x="842.35" y="320" width="3" height="10.500" fill="#fff"/>
<rect x="845.05" y="253" width="3.150" height="78" fill="#151717"/>
<rect x="848.20" y="253" width="2.300" height="50" fill="#3a3d3d" opacity="1"/>
<rect x="847.80" y="302.500" width="3" height="10" fill="#fff"/><rect x="847.80" y="320" width="3" height="10.500" fill="#fff"/>
<rect x="850.50" y="253" width="3.150" height="78" fill="#151717"/>
<rect x="853.65" y="253" width="2.300" height="50" fill="#3a3d3d" opacity="1"/>
<rect x="853.25" y="302.500" width="3" height="10" fill="#fff"/><rect x="853.25" y="320" width="3" height="10.500" fill="#fff"/>
<rect x="855.95" y="253" width="3.150" height="78" fill="#151717"/>
<rect x="859.10" y="253" width="2.300" height="50" fill="#3a3d3d" opacity="1"/>
<rect x="858.70" y="302.500" width="3" height="10" fill="#fff"/><rect x="858.70" y="320" width="3" height="10.500" fill="#fff"/>
<rect x="861.40" y="253" width="3.150" height="78" fill="#151717"/>
<rect x="864.55" y="253" width="2.300" height="50" fill="#3a3d3d" opacity="1"/>
<rect x="864.15" y="302.500" width="3" height="10" fill="#fff"/><rect x="864.15" y="320" width="3" height="10.500" fill="#fff"/>
<rect x="866.85" y="253" width="3.150" height="78" fill="#151717"/>
<rect x="870.00" y="253" width="2.300" height="50" fill="#3a3d3d" opacity="1"/>
<rect x="869.60" y="302.500" width="3" height="10" fill="#fff"/><rect x="869.60" y="320" width="3" height="10.500" fill="#fff"/>
<rect x="872.30" y="253" width="3.150" height="78" fill="#151717"/>
<rect x="875.45" y="253" width="2.300" height="50" fill="#3a3d3d" opacity="1"/>
<rect x="875.05" y="302.500" width="3" height="10" fill="#fff"/><rect x="875.05" y="320" width="3" height="10.500" fill="#fff"/>
<rect x="877.75" y="253" width="3.150" height="78" fill="#151717"/>
<rect x="880.90" y="253" width="2.300" height="50" fill="#3a3d3d" opacity="1"/>
<rect x="880.50" y="302.500" width="3" height="10" fill="#fff"/><rect x="880.50" y="320" width="3" height="10.500" fill="#fff"/>
<rect x="883.20" y="253" width="3.150" height="78" fill="#151717"/>
<rect x="886.35" y="253" width="2.300" height="50" fill="#3a3d3d" opacity="1"/>
<rect x="885.95" y="302.500" width="3" height="10" fill="#fff"/><rect x="885.95" y="320" width="3" height="10.500" fill="#fff"/>
<rect x="888.65" y="253" width="3.150" height="78" fill="#151717"/>
<rect x="891.80" y="253" width="2.300" height="50" fill="#3a3d3d" opacity="1"/>
<rect x="891.40" y="302.500" width="3" height="10" fill="#fff"/><rect x="891.40" y="320" width="3" height="10.500" fill="#fff"/>
<rect x="894.10" y="253" width="3.150" height="78" fill="#151717"/>
<rect x="897.25" y="253" width="2.300" height="50" fill="#3a3d3d" opacity="1"/>
<rect x="896.85" y="302.500" width="3" height="10" fill="#fff"/><rect x="896.85" y="320" width="3" height="10.500" fill="#fff"/>
<rect x="899.55" y="253" width="3.150" height="78" fill="#151717"/>
<rect x="902.70" y="253" width="2.300" height="50" fill="#3a3d3d" opacity="1"/>
<rect x="902.30" y="302.500" width="3" height="10" fill="#fff"/><rect x="902.30" y="320" width="3" height="10.500" fill="#fff"/>
<rect x="905.00" y="253" width="3.150" height="78" fill="#151717"/>
<rect x="908.15" y="253" width="2.300" height="50" fill="#3a3d3d" opacity="1"/>
<rect x="907.75" y="302.500" width="3" height="10" fill="#fff"/><rect x="907.75" y="320" width="3" height="10.500" fill="#fff"/>
<rect x="910.45" y="253" width="3.150" height="78" fill="#151717"/>
<rect x="913.60" y="253" width="2.300" height="50" fill="#3a3d3d" opacity="1"/>
<rect x="915.90" y="253" width="3.150" height="78" fill="#151717"/>
<rect x="919.05" y="253" width="2.300" height="50" fill="#3a3d3d" opacity="1"/>
</g>
<line x1="666.5" y1="255" x2="692" y2="303" stroke="#111" stroke-width="2.4" stroke-linecap="round"/>
<rect x="689.5" y="302" width="4.5" height="29" fill="#111" stroke="none" stroke-width="1" />
<polygon points="957.300,229 962.800,229 962.800,311 957.300,311" fill="#2c2e2e" stroke="#000" stroke-width="1" stroke-linejoin="round" />
<g fill="#141614"><rect x="938.500" y="243" width="4.500" height="68" rx="2"/><ellipse cx="946" cy="285" rx="11" ry="25"/><ellipse cx="932" cy="280" rx="6" ry="20" opacity=".75"/></g>
<g fill="#d8d8d8"><circle cx="927" cy="262" r=".6"/><circle cx="930" cy="270" r=".6"/><circle cx="926" cy="279" r=".6"/><circle cx="933" cy="259" r=".6"/><circle cx="935" cy="274" r=".6"/><circle cx="929" cy="288" r=".6"/><circle cx="936" cy="283" r=".6"/><circle cx="924" cy="270" r=".5"/><circle cx="958" cy="280" r=".6"/><circle cx="960" cy="268" r=".6"/><circle cx="955" cy="290" r=".6"/><circle cx="948" cy="282" r=".6"/><circle cx="944" cy="300" r=".6"/><circle cx="937" cy="303" r=".6"/></g>
<path d="M927 258l5 14M931 262l4 18M925 272l9 16" stroke="#bbb" stroke-width=".6" fill="none"/>
<ellipse cx="952.500" cy="265" rx="7.500" ry="7" fill="#f2f2f2" stroke="#888" stroke-width=".6"/><ellipse cx="938.500" cy="292.500" rx="7.500" ry="4.500" fill="#f2f2f2" stroke="#888" stroke-width=".6"/><circle cx="952" cy="264" r="2" fill="#bbb"/><circle cx="939" cy="292" r="1.500" fill="#bbb"/>
<ellipse cx="950" cy="301" rx="4" ry="3" fill="#b5cf52"/><ellipse cx="952" cy="307" rx="4.500" ry="3" fill="#a9c544"/><ellipse cx="955" cy="296" rx="2.500" ry="3" fill="#9d9fc0"/>
<polygon points="664,331.500 913,331.500 913,312 968.300,310.800 968,357 749,361 664,357.500" fill="#fff" stroke="none" stroke-width="1" stroke-linejoin="round" />
<path d="M664 331.500H913C913 348 903 356.500 879 358L749 361 664 357.500z" fill="#cfc7ba" stroke="#000" stroke-width="1.2" stroke-linejoin="round"/>
<path d="M913 331.500V312L968.300 310.800" fill="none" stroke="#000" stroke-width="2.2" stroke-linejoin="round"/>
<path d="M913.500 329C914 348 904 357.500 879 358.500" fill="none" stroke="#000" stroke-width="2.6" stroke-linejoin="round"/>
<path d="M917.500 331.500C917.500 351 906 361 880 361.500" fill="none" stroke="#333" stroke-width="0.8" stroke-linejoin="round"/>
<line x1="968.3" y1="310.8" x2="971.5" y2="878" stroke="#000" stroke-width="2" stroke-linecap="round"/>
<line x1="664" y1="357.5" x2="749" y2="361" stroke="#000" stroke-width="1.2" stroke-linecap="round"/>
<line x1="749" y1="361" x2="879" y2="358.3" stroke="#000" stroke-width="1.2" stroke-linecap="round"/>
<line x1="762" y1="369.8" x2="968" y2="366" stroke="#000" stroke-width="1" stroke-linecap="round"/>
<line x1="749" y1="388" x2="968" y2="384.5" stroke="#000" stroke-width="1" stroke-linecap="round"/>
<path d="M749 361V855" fill="none" stroke="#000" stroke-width="2" stroke-linejoin="round"/>
<path d="M643.500 366C670 352.500 735 353 761.500 369.500L757.500 378.500C735 366 672 366 649 378z" fill="#39413d" stroke="#000" stroke-width="1.6" stroke-linejoin="round"/>
<path d="M649 378C672 365.500 735 365.500 757.500 378.500L757 380H649z" fill="#1c1e1d" stroke="none" stroke-width="1" stroke-linejoin="round"/>
<path d="M647 371.500C672 359 735 359.500 759 373" fill="none" stroke="#111" stroke-width="1.2" stroke-linejoin="round"/>
<line x1="655.0" y1="378.5" x2="658.4" y2="369.4" stroke="#a9b0ac" stroke-width=".9"/>
<line x1="660.5" y1="378.5" x2="663.9" y2="368.1" stroke="#a9b0ac" stroke-width=".9"/>
<line x1="666.0" y1="378.5" x2="669.4" y2="366.8" stroke="#a9b0ac" stroke-width=".9"/>
<line x1="671.5" y1="378.5" x2="674.9" y2="365.8" stroke="#a9b0ac" stroke-width=".9"/>
<line x1="677.0" y1="378.5" x2="680.4" y2="364.9" stroke="#a9b0ac" stroke-width=".9"/>
<line x1="682.5" y1="378.5" x2="685.9" y2="364.1" stroke="#a9b0ac" stroke-width=".9"/>
<line x1="688.0" y1="378.5" x2="691.4" y2="363.6" stroke="#a9b0ac" stroke-width=".9"/>
<line x1="693.5" y1="378.5" x2="696.9" y2="363.3" stroke="#a9b0ac" stroke-width=".9"/>
<line x1="699.0" y1="378.5" x2="702.4" y2="363.2" stroke="#a9b0ac" stroke-width=".9"/>
<line x1="704.5" y1="378.5" x2="707.9" y2="363.4" stroke="#a9b0ac" stroke-width=".9"/>
<line x1="710.0" y1="378.5" x2="713.4" y2="363.8" stroke="#a9b0ac" stroke-width=".9"/>
<line x1="715.5" y1="378.5" x2="718.9" y2="364.4" stroke="#a9b0ac" stroke-width=".9"/>
<line x1="721.0" y1="378.5" x2="724.4" y2="365.2" stroke="#a9b0ac" stroke-width=".9"/>
<line x1="726.5" y1="378.5" x2="729.9" y2="366.3" stroke="#a9b0ac" stroke-width=".9"/>
<line x1="732.0" y1="378.5" x2="735.4" y2="367.5" stroke="#a9b0ac" stroke-width=".9"/>
<line x1="737.5" y1="378.5" x2="740.9" y2="368.8" stroke="#a9b0ac" stroke-width=".9"/>
<line x1="743.0" y1="378.5" x2="746.4" y2="370.2" stroke="#a9b0ac" stroke-width=".9"/>
<line x1="748.5" y1="378.5" x2="751.9" y2="371.8" stroke="#a9b0ac" stroke-width=".9"/>
<line x1="754.0" y1="378.5" x2="757.4" y2="373.3" stroke="#a9b0ac" stroke-width=".9"/>
<rect x="655" y="379.5" width="94" height="6.5" fill="#454c48" stroke="#000" stroke-width="1" />
<line x1="653" y1="386.5" x2="750" y2="386.5" stroke="#000" stroke-width="1.6" stroke-linecap="round"/>
<polygon points="666,387.500 749,387.500 749,398 678,398" fill="#7b7b7b" stroke="none" stroke-width="1" stroke-linejoin="round" />
<polygon points="663.500,388 666,387.500 678,398 678,404 663.500,392" fill="#3a3a3a" stroke="#000" stroke-width="0.6" stroke-linejoin="round" />
<path d="M916 399H804A24 24 0 0 0 780 423V478A24 24 0 0 0 804 502H916z" fill="#fff" stroke="#000" stroke-width="1.8" stroke-linejoin="round"/>
<path d="M912.500 403.5H806A21 21 0 0 0 785 424.5V476.5A21 21 0 0 0 806 497.5H912.500z" fill="#cfc7ba" stroke="#000" stroke-width="1.3" stroke-linejoin="round"/>
<rect x="828.5" y="418.5" width="83" height="67.5" fill="#c8c8c8" stroke="#1e2223" stroke-width="3" />
<rect x="848.8" y="418.5" width="3.400" height="67.5" fill="#1e2223"/>
<rect x="868.3" y="418.5" width="3.400" height="67.5" fill="#1e2223"/>
<rect x="887.8" y="418.5" width="3.400" height="67.5" fill="#1e2223"/>
<path d="M916 556.5H804A24 24 0 0 0 780 580.5V636A24 24 0 0 0 804 660H916z" fill="#fff" stroke="#000" stroke-width="1.8" stroke-linejoin="round"/>
<path d="M912.500 561.0H806A21 21 0 0 0 785 582.0V634.5A21 21 0 0 0 806 655.5H912.500z" fill="#cfc7ba" stroke="#000" stroke-width="1.3" stroke-linejoin="round"/>
<rect x="828.5" y="575.5" width="83" height="67.5" fill="#c8c8c8" stroke="#1e2223" stroke-width="3" />
<rect x="848.8" y="575.5" width="3.400" height="67.5" fill="#1e2223"/>
<rect x="868.3" y="575.5" width="3.400" height="67.5" fill="#1e2223"/>
<rect x="887.8" y="575.5" width="3.400" height="67.5" fill="#1e2223"/>
<path d="M865 439.500H902V455M893 441L902 453" fill="none" stroke="#1e2223" stroke-width="2" stroke-linejoin="round"/>
<rect x="830" y="578.800" width="81" height="2.400" fill="#f0f0f0"/><rect x="865.400" y="577" width="1.800" height="65" fill="#ececec"/><rect x="901" y="581" width="1.300" height="61" fill="#ececec"/>
<rect x="848.8" y="575.500" width="3.400" height="67.500" fill="#1e2223"/>
<rect x="868.3" y="575.500" width="3.400" height="67.500" fill="#1e2223"/>
<rect x="887.8" y="575.500" width="3.400" height="67.500" fill="#1e2223"/>
<line x1="757" y1="525.5" x2="968.8" y2="525.5" stroke="#000" stroke-width="1.2" stroke-linecap="round"/>
<line x1="749" y1="543" x2="969" y2="543" stroke="#000" stroke-width="1.2" stroke-linecap="round"/>
<line x1="756" y1="684" x2="969.7" y2="684" stroke="#000" stroke-width="1.2" stroke-linecap="round"/>
<line x1="749" y1="701.5" x2="970" y2="701.5" stroke="#000" stroke-width="1.2" stroke-linecap="round"/>
<rect x="719.5" y="437" width="29.5" height="46" fill="#111" stroke="none" stroke-width="1" />
<rect x="723.5" y="441" width="25" height="9.5" fill="#b5b5b5" stroke="none" stroke-width="1" />
<rect x="723.5" y="458.5" width="25" height="23.5" fill="#b5b5b5" stroke="none" stroke-width="1" />
<line x1="723.5" y1="458.5" x2="723.5" y2="482" stroke="#111" stroke-width="1" stroke-linecap="round"/>
<rect x="719.5" y="579" width="29.5" height="66" fill="#111" stroke="none" stroke-width="1" />
<rect x="723.5" y="583" width="25" height="9.5" fill="#a9a9a9" stroke="none" stroke-width="1" />
<rect x="723.5" y="600.5" width="25" height="43.5" fill="#a9a9a9" stroke="none" stroke-width="1" />
<line x1="723.5" y1="600.5" x2="723.5" y2="644" stroke="#111" stroke-width="1" stroke-linecap="round"/>
<rect x="723.500" y="600.500" width="25" height="3.500" fill="#c4c4c4"/>
<rect x="656" y="484" width="100" height="34" fill="#fff" stroke="none" stroke-width="1" />
<rect x="723.5" y="484" width="25" height="34" fill="#b5b5b5" stroke="none" stroke-width="1" />
<polygon points="640.500,481.500 758.500,482 756.500,519 642,518" fill="none" stroke="#000" stroke-width="1" stroke-linejoin="round" />
<polygon points="640.500,481.500 656,481.500 656,518 642,518" fill="#0a0a0a" stroke="#000" stroke-width="1" stroke-linejoin="round" />
<rect x="658" y="484" width="4.7" height="34" fill="#3a3a3a" stroke="none" stroke-width="1" />
<polygon points="640.500,480.700 758.500,481.200 758,484 640.500,484" fill="#0a0a0a" stroke="#000" stroke-width="1" stroke-linejoin="round" />
<rect x="656" y="485.7" width="94" height="1.3" fill="#0a0a0a" stroke="none" stroke-width="1" />
<rect x="656" y="511.3" width="94" height="1.7" fill="#0a0a0a" stroke="none" stroke-width="1" />
<rect x="642" y="516" width="114.5" height="2.2" fill="#0a0a0a" stroke="none" stroke-width="1" />
<polygon points="749.300,484 758,484 756.500,518 749.300,518" fill="#0a0a0a" stroke="none" stroke-width="1" stroke-linejoin="round" />
<rect x="664" y="486" width="5.3" height="30" fill="#0a0a0a" stroke="none" stroke-width="1" />
<rect x="678.7" y="486" width="1.6" height="30" fill="#0a0a0a" stroke="none" stroke-width="1" />
<rect x="684.7" y="486" width="1.4" height="30" fill="#0a0a0a" stroke="none" stroke-width="1" />
<rect x="689.3" y="486" width="2" height="30" fill="#0a0a0a" stroke="none" stroke-width="1" />
<rect x="694" y="486" width="1.7" height="30" fill="#0a0a0a" stroke="none" stroke-width="1" />
<rect x="699" y="486" width="2" height="30" fill="#0a0a0a" stroke="none" stroke-width="1" />
<rect x="705" y="486" width="1.7" height="30" fill="#0a0a0a" stroke="none" stroke-width="1" />
<rect x="709.3" y="486" width="1.7" height="30" fill="#0a0a0a" stroke="none" stroke-width="1" />
<rect x="713.3" y="486" width="1.4" height="30" fill="#0a0a0a" stroke="none" stroke-width="1" />
<rect x="716" y="486" width="7.3" height="30" fill="#0a0a0a" stroke="none" stroke-width="1" />
<rect x="728.3" y="486" width="1.7" height="30" fill="#0a0a0a" stroke="none" stroke-width="1" />
<rect x="732.5" y="486" width="1.7" height="30" fill="#0a0a0a" stroke="none" stroke-width="1" />
<rect x="736.7" y="486" width="1.7" height="30" fill="#0a0a0a" stroke="none" stroke-width="1" />
<rect x="741.3" y="486" width="1.7" height="30" fill="#0a0a0a" stroke="none" stroke-width="1" />
<rect x="746" y="486" width="3.3" height="30" fill="#0a0a0a" stroke="none" stroke-width="1" />
<path d="M669.300 487h9.400v14h-9.400z" fill="#0a0a0a"/><path d="M674 489l3 3-3 3-3-3z M671 497.500h6v1.500h-6z" fill="#fff"/><path d="M723.300 487h5v12h-5z" fill="#0a0a0a"/><path d="M725.800 489.500l2 2.500-2 2.500-2-2.500z" fill="#ddd"/>
<rect x="669.3" y="501" width="9.4" height="1.2" fill="#fff" stroke="none" stroke-width="1" />
<rect x="672.5" y="502.2" width="2" height="9" fill="#0a0a0a" stroke="none" stroke-width="1" />
<polygon points="642,518 756.500,518 756,521.500 644,521.500" fill="#fff" stroke="#000" stroke-width="1" stroke-linejoin="round" />
<polygon points="644.500,521.500 744,521.500 744,534.500 644.500,534.500" fill="#3d4541" stroke="#000" stroke-width="1" stroke-linejoin="round" />
<polygon points="641.500,534.500 744,534.500 744,539.500 647,539.500" fill="#2d3330" stroke="#000" stroke-width="1" stroke-linejoin="round" />
<polygon points="744,521.500 757,522 757,539.500 744,539.500" fill="#fff" stroke="#000" stroke-width="1.4" stroke-linejoin="round" />
<line x1="752.3" y1="522" x2="752.3" y2="539.5" stroke="#888" stroke-width="0.8" stroke-linecap="round"/>
<rect x="744" y="539.5" width="13" height="2.5" fill="#555" stroke="none" stroke-width="1" />
<rect x="640.5" y="643.7" width="116" height="40.5" fill="#fff" stroke="#000" stroke-width="1.9" />
<line x1="644.7" y1="645" x2="644.7" y2="683" stroke="#aaa" stroke-width="0.9" stroke-linecap="round"/>
<rect x="748" y="645" width="7.500" height="38" fill="#b4b4b4"/>
<line x1="748" y1="645" x2="748" y2="683" stroke="#777" stroke-width="0.8" stroke-linecap="round"/>
<polygon points="643,685 742.500,685 742.500,696.500 643,696.500" fill="#3f4640" stroke="#000" stroke-width="1" stroke-linejoin="round" />
<line x1="640" y1="697.5" x2="742.5" y2="697.5" stroke="#000" stroke-width="2" stroke-linecap="round"/>
<rect x="742.5" y="684.5" width="14" height="17.5" fill="#fff" stroke="#000" stroke-width="1.4" />
<rect x="752" y="685.500" width="3.800" height="16" fill="#999"/>
<path d="M917.700 847.600V752A25.500 25.500 0 0 0 892 726.500H805A25.500 25.500 0 0 0 779.300 752V847.600z" fill="#fff" stroke="#000" stroke-width="1.8" stroke-linejoin="round"/>
<path d="M914.400 844V752A22.500 22.500 0 0 0 892 729.400H805.500A22.500 22.500 0 0 0 783.200 752V844z" fill="#3a3f41" stroke="#000" stroke-width="1.5" stroke-linejoin="round"/>
<path d="M908.600 745H791.300V744C793 737 798 733.300 806 733.300H891C901 733.300 906.500 737 908.600 744z" fill="#a9aeb0" stroke="#111" stroke-width="0.8" stroke-linejoin="round"/>
<rect x="849.4" y="732" width="4" height="14" fill="#3a3f41" stroke="none" stroke-width="1" />
<rect x="784" y="745.5" width="130" height="8.5" fill="#2e383b" stroke="none" stroke-width="1" />
<line x1="784" y1="749.5" x2="914" y2="749.5" stroke="#4d6066" stroke-width="1.2" stroke-linecap="round"/>
<rect x="784.5" y="754" width="129" height="89" fill="#4f5152" stroke="#111" stroke-width="1" />
<line x1="815.6" y1="754" x2="815.6" y2="843" stroke="#111" stroke-width="1.2" stroke-linecap="round"/>
<line x1="848.5" y1="754" x2="848.5" y2="843" stroke="#111" stroke-width="1.2" stroke-linecap="round"/>
<line x1="881.5" y1="754" x2="881.5" y2="843" stroke="#111" stroke-width="1.2" stroke-linecap="round"/>
<rect x="794.2" y="759.5" width="16.5" height="78.5" fill="#b0b2b3" stroke="#111" stroke-width="1.4" />
<rect x="794.9000000000001" y="821.5" width="15.1" height="16" fill="#929292" stroke="none" stroke-width="1" />
<rect x="825.2" y="759.5" width="15.599999999999909" height="78.5" fill="#b0b2b3" stroke="#111" stroke-width="1.4" />
<rect x="825.9000000000001" y="821.5" width="14.199999999999909" height="16" fill="#929292" stroke="none" stroke-width="1" />
<rect x="856.3" y="759.5" width="17.40000000000009" height="78.5" fill="#b0b2b3" stroke="#111" stroke-width="1.4" />
<rect x="857.0" y="821.5" width="16.000000000000092" height="16" fill="#929292" stroke="none" stroke-width="1" />
<rect x="886.9" y="759.5" width="19.800000000000068" height="78.5" fill="#b0b2b3" stroke="#111" stroke-width="1.4" />
<rect x="887.6" y="821.5" width="18.40000000000007" height="16" fill="#929292" stroke="none" stroke-width="1" />
<rect x="788" y="757" width="3" height="84" fill="#2e383b" stroke="none" stroke-width="1" />
<rect x="680.5" y="735" width="34.5" height="64.5" fill="#3a3d3e" stroke="#000" stroke-width="1.2" />
<rect x="685" y="738.5" width="27" height="12" fill="#a9a9a9" stroke="#111" stroke-width="0.8" />
<rect x="689" y="757" width="19.5" height="36.5" fill="#b0b0b0" stroke="#111" stroke-width="1" />
<rect x="685" y="755" width="27" height="41" fill="none" stroke="#111" stroke-width="0.8" />
<rect x="715" y="735" width="34" height="100.5" fill="#3a3d3e" stroke="#000" stroke-width="1.2" />
<rect x="719.5" y="738.5" width="29.5" height="12.5" fill="#a9a9a9" stroke="#111" stroke-width="0.8" />
<rect x="722" y="759" width="23.5" height="73" fill="#b0b0b0" stroke="#111" stroke-width="1.2" />
<rect x="722.7" y="820" width="22.1" height="11.5" fill="#949494" stroke="none" stroke-width="1" />
<line x1="748.5" y1="735" x2="748.5" y2="836" stroke="#000" stroke-width="1" stroke-linecap="round"/>
<polygon points="661,854.500 677,837 749,837 749,854.500" fill="#676767" stroke="#000" stroke-width="1" stroke-linejoin="round" />
<line x1="677" y1="837" x2="749" y2="837" stroke="#000" stroke-width="1.2" stroke-linecap="round"/>
<rect x="651.5" y="851" width="10" height="3.5" fill="#fff" stroke="#000" stroke-width="0.8" />
<polygon points="647.2,856.6 743.500,856.6 743.500,863.7 645.7,863.7" fill="#fff" stroke="#000" stroke-width="0.9" stroke-linejoin="round" />
<polygon points="645.2,865.8 743.500,865.8 743.500,872.9 643.7,872.9" fill="#fff" stroke="#000" stroke-width="0.9" stroke-linejoin="round" />
<polygon points="642,875 743.500,875 743.500,882 640.5,882" fill="#fff" stroke="#000" stroke-width="0.9" stroke-linejoin="round" />
<rect x="744" y="856.5" width="8.6" height="25.5" fill="#fff" stroke="#000" stroke-width="1.4" />
<line x1="744" y1="878" x2="752.6" y2="878" stroke="#000" stroke-width="0.8" stroke-linecap="round"/>
<line x1="744" y1="859.5" x2="752.6" y2="859.5" stroke="#888" stroke-width="0.7" stroke-linecap="round"/>
</svg></div>
<div id="scenerow"></div>
<div class="abs" style="left:71px;top:103px;width:1849px;height:3px;background:#fff"></div>
<div class="abs" style="left:72px;top:81px;width:55px;height:24px;background:#fff"></div>
<div class="t" style="left:80px;top:85px;font-size:12px;letter-spacing:-0.79px;color:#000;">Scene 1</div>
<div class="abs" style="left:128px;top:84px;width:1792px;height:18px;background:#f2f2f2;border:1px solid #ededed;border-right:none"></div>
<div class="abs" style="left:1595px;top:106px;width:6px;height:899px;background:#fff"></div>
<div class="abs" style="left:73px;top:1003px;width:1530px;height:2px;background:#fff"></div>
<div id="tray"></div>
<div class="abs" style="left:1601px;top:106px;width:319px;height:19px;background:linear-gradient(#b9c6d2 0,#cbd8e4 12%,#d6e1ec 45%,#e6edf4 100%)"></div>
<div class="t" style="left:1605.3px;top:110.5px;font-size:11px;letter-spacing:0.016px;color:#000;">Default Tray</div>
<svg class="abs" style="left:1886px;top:110px" width="10" height="11" viewBox="0 0 10 11"><path d="M3 1h4M3.500 1v4.500M6.500 1v4.500M1.500 5.500h7M5 5.500V10" stroke="#000" stroke-width="1.200" fill="none"/><path d="M5.500 1.500h1v4h-1z" fill="#000"/></svg>
<div class="abs" style="left:1904px;top:110px;width:12px;height:12px;background:#cf4448;border:1px solid #b8343a"></div>
<svg class="abs" style="left:1906px;top:112px" width="8" height="8" viewBox="0 0 8 8"><path d="M1.500 1.500l5 5M6.500 1.500l-5 5" stroke="#fff" stroke-width="1.500"/></svg>
<div class="abs" style="left:1601px;top:125px;width:302px;height:18px;background:linear-gradient(#f4f4f4 0,#e9e9e9 25%,#d2d2d2 65%,#b4b4b4 100%);border-top:1px solid #fafafa;border-bottom:1px solid #9a9a9a"></div>
<svg class="abs" style="left:1610px;top:130.0px" width="6" height="8" viewBox="0 0 6 8"><path d="M0 0v8L6 4z" fill="#000"/></svg>
<div class="t" style="left:1623px;top:128px;font-size:12px;letter-spacing:0.013px;color:#000;">Entity Info</div>
<div class="abs" style="left:1887px;top:128px;width:12px;height:11px;background:#fdfdfd;border:1px solid #c4c4c4;border-radius:2px"></div>
<svg class="abs" style="left:1890px;top:131px" width="6" height="6" viewBox="0 0 6 6"><path d="M.8 .8l4.400 4.400M5.200 .8L.8 5.200" stroke="#000" stroke-width="1.300"/></svg>
<div class="abs" style="left:1601px;top:144px;width:302px;height:18px;background:linear-gradient(#f4f4f4 0,#e9e9e9 25%,#d2d2d2 65%,#b4b4b4 100%);border-top:1px solid #fafafa;border-bottom:1px solid #9a9a9a"></div>
<svg class="abs" style="left:1609px;top:150.0px" width="8" height="6" viewBox="0 0 8 6"><path d="M0 0h8L4 6z" fill="#000"/></svg>
<div class="t" style="left:1623px;top:147px;font-size:12px;letter-spacing:-0.242px;color:#000;">Materials</div>
<div class="abs" style="left:1887px;top:147px;width:12px;height:11px;background:#fdfdfd;border:1px solid #c4c4c4;border-radius:2px"></div>
<svg class="abs" style="left:1890px;top:150px" width="6" height="6" viewBox="0 0 6 6"><path d="M.8 .8l4.400 4.400M5.200 .8L.8 5.200" stroke="#000" stroke-width="1.300"/></svg>
<div class="abs" style="left:1601px;top:577px;width:302px;height:18px;background:linear-gradient(#f4f4f4 0,#e9e9e9 25%,#d2d2d2 65%,#b4b4b4 100%);border-top:1px solid #fafafa;border-bottom:1px solid #9a9a9a"></div>
<svg class="abs" style="left:1609px;top:583.0px" width="8" height="6" viewBox="0 0 8 6"><path d="M0 0h8L4 6z" fill="#000"/></svg>
<div class="t" style="left:1623px;top:580px;font-size:12px;letter-spacing:-0.004px;color:#000;">Components</div>
<div class="abs" style="left:1887px;top:580px;width:12px;height:11px;background:#fdfdfd;border:1px solid #c4c4c4;border-radius:2px"></div>
<svg class="abs" style="left:1890px;top:583px" width="6" height="6" viewBox="0 0 6 6"><path d="M.8 .8l4.400 4.400M5.200 .8L.8 5.200" stroke="#000" stroke-width="1.300"/></svg>
<div class="abs" style="left:1911px;top:143px;width:2px;height:16px;background:#8a8a8a"></div>
<div class="abs" style="left:1603px;top:164px;width:66px;height:71px;background:#fff;border:1px solid #a8a8a8"></div>
<svg class="abs" style="left:1605px;top:166px" width="62" height="67" viewBox="0 0 62 67"><rect width="62" height="67" fill="#c9c9c9"/><path d="M0 0h62L0 67z" fill="#000"/><path d="M59 53v7h-7z" fill="#e4e4e4" stroke="#f4f4f4" stroke-width=".8"/></svg>
<div class="abs" style="left:1673px;top:165px;width:201px;height:19px;background:#fff;border-bottom:1px solid #b4b4b4"></div>
<div class="t" style="left:1678px;top:168px;font-size:12px;letter-spacing:-0.737px;color:#000;">Translucent_Glass_Gray1</div>
<svg class="abs" style="left:1885px;top:167px" width="10" height="14.5" viewBox="0 0 11.500 17"><rect x="0" y="0" width="11" height="7" fill="#000"/><path d="M2.500 2h6l-3 3.500z" fill="#fff"/><rect x="0" y="8.500" width="11" height="8" fill="#000"/><path d="M5.500 10v5M3 12.500h5" stroke="#fff" stroke-width="1.500"/></svg>
<svg class="abs" style="left:1879px;top:187px" width="24" height="24" viewBox="0 0 24 24"><path d="M5 4l12-2.500 5 4-1 9-12 4.500-4.500-5z" fill="#2b2b28" stroke="#000" stroke-width="1"/><path d="M7 5.500l9-2 3 2.500-9.500 2z" fill="#d9d7a8"/><path d="M9 10l11-2.500M9 13l10.500-3" stroke="#bbb" stroke-width="1"/><circle cx="6" cy="16" r="4.800" fill="#fff" stroke="#000" stroke-width="1.200"/><path d="M6 13.200v5.600M3.200 16h5.600" stroke="#000" stroke-width="1.300"/></svg>
<svg class="abs" style="left:1879px;top:212px" width="22" height="22" viewBox="0 0 22 22"><rect width="22" height="22" fill="#fff"/><path d="M0 0l22 22H0z" fill="#a7b6c4"/></svg>
<div class="abs" style="left:1601px;top:237px;width:302px;height:1px;background:#c2c2c2"></div>
<div class="abs" style="left:1601px;top:263px;width:302px;height:1px;background:#e6e6e6"></div>
<div class="abs" style="left:1601px;top:243px;width:44px;height:21px;background:#f8f8f8;border:1px solid #ebebeb;border-bottom:none"></div>
<div class="t" style="left:1607.5px;top:246.6px;font-size:12px;letter-spacing:-0.642px;color:#000;">Select</div>
<div class="abs" style="left:1645px;top:245px;width:39px;height:18px;background:#f2f2f2;border:1px solid #e9e9e9;border-bottom:none;border-left:none"></div>
<div class="t" style="left:1649.6px;top:248.7px;font-size:12px;letter-spacing:-0.594px;color:#000;">Edit</div>
<div class="abs" style="left:1601px;top:264px;width:302px;height:31px;background:#f6f6f6"></div>
<svg class="abs" style="left:1880px;top:241px" width="20" height="20" viewBox="0 0 20 20"><path d="M3 17l1-3 8-8 2.500 2.500-8 8z" fill="#d8b34a" stroke="#222" stroke-width="1"/><path d="M11 5l3-3c1.500-1.500 4.500 1.500 3 3l-3 3z" fill="#222"/><path d="M10 5l5 5" stroke="#222" stroke-width="2"/></svg>
<svg class="abs" style="left:1612px;top:271.5px" width="13" height="13" viewBox="0 0 13 13"><path d="M1 6.500l5.500-5.500v3h5.500v5H6.500v3z" fill="#fafafa" stroke="#9a9a9a" stroke-width="1.100"/></svg>
<svg class="abs" style="left:1635.5px;top:271.5px" width="13" height="13" viewBox="0 0 13 13"><path d="M12 6.500L6.500 1v3H1v5h5.500v3z" fill="#fafafa" stroke="#9a9a9a" stroke-width="1.100"/></svg>
<svg class="abs" style="left:1657px;top:270px" width="18" height="18" viewBox="0 0 18 18"><path d="M1.500 9L9 2l7.500 7" fill="none" stroke="#000" stroke-width="1.800"/><path d="M3.500 8.500V16h11V8.500L9 3.500z" fill="#fff" stroke="#000" stroke-width="1.400"/><rect x="7.500" y="10.500" width="3" height="5.500" fill="#000"/><rect x="12" y="2.500" width="1.500" height="3" fill="#000"/></svg>
<div class="abs" style="left:1679px;top:270px;width:198px;height:23px;background:#fff;border:1px solid #c9c9c9;border-top-color:#7f7f7f;border-left-color:#7f7f7f"></div>
<div class="t" style="left:1683px;top:276px;font-size:12px;letter-spacing:-0.721px;color:#000;">Brick, Cladding and Siding</div>
<svg class="abs" style="left:1863px;top:279px" width="10" height="7" viewBox="0 0 10 7"><path d="M1 1l4 4 4-4" stroke="#444" stroke-width="1" fill="none"/></svg>
<div class="abs" style="left:1878px;top:267px;width:1px;height:26px;background:#d0d0d0"></div>
<svg class="abs" style="left:1883px;top:270px" width="18" height="18" viewBox="0 0 18 18"><rect x="2" y="3" width="7" height="9" fill="#3a5f9a" stroke="#1c2f55" stroke-width=".8"/><path d="M3.500 6h4M3.500 8h4M3.500 10h4" stroke="#fff" stroke-width=".8"/><path d="M7 6h4.500V2.500L17 9l-5.500 6.500V12H7z" fill="#000"/></svg>
<div class="abs" style="left:1601px;top:295px;width:302px;height:278px;background:#fff"></div>
<div class="abs" style="left:1601px;top:294px;width:302px;height:1px;background:#8a9098"></div>
<div class="abs" style="left:1601px;top:573px;width:302px;height:1px;background:#d0d0d0"></div>
<svg width="0" height="0" style="position:absolute"><defs><filter id="nzd" x="0" y="0" width="100%" height="100%"><feTurbulence type="fractalNoise" baseFrequency="0.85" numOctaves="2" seed="7"/><feColorMatrix type="matrix" values="0 0 0 0 0  0 0 0 0 0  0 0 0 0 0  3 0 0 0 -1.1"/></filter><filter id="nzl" x="0" y="0" width="100%" height="100%"><feTurbulence type="fractalNoise" baseFrequency="0.8" numOctaves="2" seed="23"/><feColorMatrix type="matrix" values="0 0 0 0 1  0 0 0 0 1  0 0 0 0 1  0 3 0 0 -1.1"/></filter><filter id="nzs" x="0" y="0" width="100%" height="100%"><feTurbulence type="fractalNoise" baseFrequency="0.09" numOctaves="3" seed="11"/><feColorMatrix type="matrix" values="0 0 0 0 0.2  0 0 0 0 0.15  0 0 0 0 0.1  0 0 3 0 -1.1"/></filter></defs></svg>
<div class="abs" style="left:1607px;top:297px;width:49px;height:49px;background:#fff;border:1px solid #a3a9b0"></div>
<svg class="abs" style="left:1609px;top:299px;overflow:hidden" width="45" height="45" viewBox="0 0 45 45"><rect width="45" height="45" fill="#ee9560"/><rect x="1.5" y="0" width="0.9" height="45" fill="#d88250" opacity="1"/><rect x="4.8" y="0" width="0.9" height="45" fill="#d88250" opacity="1"/><rect x="8.1" y="0" width="0.9" height="45" fill="#d88250" opacity="1"/><rect x="11.4" y="0" width="0.9" height="45" fill="#d88250" opacity="1"/><rect x="14.7" y="0" width="0.9" height="45" fill="#d88250" opacity="1"/><rect x="18.0" y="0" width="0.9" height="45" fill="#d88250" opacity="1"/><rect x="21.3" y="0" width="0.9" height="45" fill="#d88250" opacity="1"/><rect x="24.6" y="0" width="0.9" height="45" fill="#d88250" opacity="1"/><rect x="27.9" y="0" width="0.9" height="45" fill="#d88250" opacity="1"/><rect x="31.2" y="0" width="0.9" height="45" fill="#d88250" opacity="1"/><rect x="34.5" y="0" width="0.9" height="45" fill="#d88250" opacity="1"/><rect x="37.8" y="0" width="0.9" height="45" fill="#d88250" opacity="1"/><rect x="41.1" y="0" width="0.9" height="45" fill="#d88250" opacity="1"/><rect x="44.4" y="0" width="0.9" height="45" fill="#d88250" opacity="1"/><rect x="2.6" y="0" width="0.7" height="45" fill="#f6a672" opacity="1"/><rect x="5.9" y="0" width="0.7" height="45" fill="#f6a672" opacity="1"/><rect x="9.2" y="0" width="0.7" height="45" fill="#f6a672" opacity="1"/><rect x="12.5" y="0" width="0.7" height="45" fill="#f6a672" opacity="1"/><rect x="15.8" y="0" width="0.7" height="45" fill="#f6a672" opacity="1"/><rect x="19.1" y="0" width="0.7" height="45" fill="#f6a672" opacity="1"/><rect x="22.4" y="0" width="0.7" height="45" fill="#f6a672" opacity="1"/><rect x="25.7" y="0" width="0.7" height="45" fill="#f6a672" opacity="1"/><rect x="29.0" y="0" width="0.7" height="45" fill="#f6a672" opacity="1"/><rect x="32.3" y="0" width="0.7" height="45" fill="#f6a672" opacity="1"/><rect x="35.6" y="0" width="0.7" height="45" fill="#f6a672" opacity="1"/><rect x="38.9" y="0" width="0.7" height="45" fill="#f6a672" opacity="1"/><rect x="42.2" y="0" width="0.7" height="45" fill="#f6a672" opacity="1"/><rect x="45.5" y="0" width="0.7" height="45" fill="#f6a672" opacity="1"/></svg>
<div class="abs" style="left:1659px;top:297px;width:49px;height:49px;background:#fff;border:1px solid #a3a9b0"></div>
<svg class="abs" style="left:1661px;top:299px;overflow:hidden" width="45" height="45" viewBox="0 0 45 45"><rect width="45" height="45" fill="#9e5a40"/><rect x="0.0" y="0.0" width="11" height="5" fill="#94503a" opacity="1"/><rect x="11.0" y="0.0" width="11" height="5" fill="#94503a" opacity="1"/><rect x="22.0" y="0.0" width="11" height="5" fill="#94503a" opacity="1"/><rect x="33.0" y="0.0" width="11" height="5" fill="#9a563c" opacity="1"/><rect x="44.0" y="0.0" width="11" height="5" fill="#a85e42" opacity="1"/><rect x="-5.5" y="5.0" width="11" height="5" fill="#a46246" opacity="1"/><rect x="5.5" y="5.0" width="11" height="5" fill="#a46246" opacity="1"/><rect x="16.5" y="5.0" width="11" height="5" fill="#9a563c" opacity="1"/><rect x="27.5" y="5.0" width="11" height="5" fill="#9a563c" opacity="1"/><rect x="38.5" y="5.0" width="11" height="5" fill="#8a4c38" opacity="1"/><rect x="0.0" y="10.0" width="11" height="5" fill="#a85e42" opacity="1"/><rect x="11.0" y="10.0" width="11" height="5" fill="#8a4c38" opacity="1"/><rect x="22.0" y="10.0" width="11" height="5" fill="#94503a" opacity="1"/><rect x="33.0" y="10.0" width="11" height="5" fill="#8a4c38" opacity="1"/><rect x="44.0" y="10.0" width="11" height="5" fill="#a46246" opacity="1"/><rect x="-5.5" y="15.0" width="11" height="5" fill="#a85e42" opacity="1"/><rect x="5.5" y="15.0" width="11" height="5" fill="#b06848" opacity="1"/><rect x="16.5" y="15.0" width="11" height="5" fill="#a46246" opacity="1"/><rect x="27.5" y="15.0" width="11" height="5" fill="#b06848" opacity="1"/><rect x="38.5" y="15.0" width="11" height="5" fill="#a46246" opacity="1"/><rect x="0.0" y="20.0" width="11" height="5" fill="#8a4c38" opacity="1"/><rect x="11.0" y="20.0" width="11" height="5" fill="#9a563c" opacity="1"/><rect x="22.0" y="20.0" width="11" height="5" fill="#8a4c38" opacity="1"/><rect x="33.0" y="20.0" width="11" height="5" fill="#b06848" opacity="1"/><rect x="44.0" y="20.0" width="11" height="5" fill="#8a4c38" opacity="1"/><rect x="-5.5" y="25.0" width="11" height="5" fill="#9a563c" opacity="1"/><rect x="5.5" y="25.0" width="11" height="5" fill="#94503a" opacity="1"/><rect x="16.5" y="25.0" width="11" height="5" fill="#94503a" opacity="1"/><rect x="27.5" y="25.0" width="11" height="5" fill="#9a563c" opacity="1"/><rect x="38.5" y="25.0" width="11" height="5" fill="#b06848" opacity="1"/><rect x="0.0" y="30.0" width="11" height="5" fill="#9a563c" opacity="1"/><rect x="11.0" y="30.0" width="11" height="5" fill="#b06848" opacity="1"/><rect x="22.0" y="30.0" width="11" height="5" fill="#b06848" opacity="1"/><rect x="33.0" y="30.0" width="11" height="5" fill="#8a4c38" opacity="1"/><rect x="44.0" y="30.0" width="11" height="5" fill="#a85e42" opacity="1"/><rect x="-5.5" y="35.0" width="11" height="5" fill="#8a4c38" opacity="1"/><rect x="5.5" y="35.0" width="11" height="5" fill="#a85e42" opacity="1"/><rect x="16.5" y="35.0" width="11" height="5" fill="#a85e42" opacity="1"/><rect x="27.5" y="35.0" width="11" height="5" fill="#a85e42" opacity="1"/><rect x="38.5" y="35.0" width="11" height="5" fill="#94503a" opacity="1"/><rect x="0.0" y="40.0" width="11" height="5" fill="#a85e42" opacity="1"/><rect x="11.0" y="40.0" width="11" height="5" fill="#9a563c" opacity="1"/><rect x="22.0" y="40.0" width="11" height="5" fill="#a85e42" opacity="1"/><rect x="33.0" y="40.0" width="11" height="5" fill="#a85e42" opacity="1"/><rect x="44.0" y="40.0" width="11" height="5" fill="#8a4c38" opacity="1"/><rect x="0" y="0.0" width="45" height="0.8" fill="#cda98e" opacity="0.8"/><rect x="0.0" y="0.0" width="0.8" height="5" fill="#cda98e" opacity="0.8"/><rect x="11.0" y="0.0" width="0.8" height="5" fill="#cda98e" opacity="0.8"/><rect x="22.0" y="0.0" width="0.8" height="5" fill="#cda98e" opacity="0.8"/><rect x="33.0" y="0.0" width="0.8" height="5" fill="#cda98e" opacity="0.8"/><rect x="44.0" y="0.0" width="0.8" height="5" fill="#cda98e" opacity="0.8"/><rect x="0" y="5.0" width="45" height="0.8" fill="#cda98e" opacity="0.8"/><rect x="5.5" y="5.0" width="0.8" height="5" fill="#cda98e" opacity="0.8"/><rect x="16.5" y="5.0" width="0.8" height="5" fill="#cda98e" opacity="0.8"/><rect x="27.5" y="5.0" width="0.8" height="5" fill="#cda98e" opacity="0.8"/><rect x="38.5" y="5.0" width="0.8" height="5" fill="#cda98e" opacity="0.8"/><rect x="0" y="10.0" width="45" height="0.8" fill="#cda98e" opacity="0.8"/><rect x="0.0" y="10.0" width="0.8" height="5" fill="#cda98e" opacity="0.8"/><rect x="11.0" y="10.0" width="0.8" height="5" fill="#cda98e" opacity="0.8"/><rect x="22.0" y="10.0" width="0.8" height="5" fill="#cda98e" opacity="0.8"/><rect x="33.0" y="10.0" width="0.8" height="5" fill="#cda98e" opacity="0.8"/><rect x="44.0" y="10.0" width="0.8" height="5" fill="#cda98e" opacity="0.8"/><rect x="0" y="15.0" width="45" height="0.8" fill="#cda98e" opacity="0.8"/><rect x="5.5" y="15.0" width="0.8" height="5" fill="#cda98e" opacity="0.8"/><rect x="16.5" y="15.0" width="0.8" height="5" fill="#cda98e" opacity="0.8"/><rect x="27.5" y="15.0" width="0.8" height="5" fill="#cda98e" opacity="0.8"/><rect x="38.5" y="15.0" width="0.8" height="5" fill="#cda98e" opacity="0.8"/><rect x="0" y="20.0" width="45" height="0.8" fill="#cda98e" opacity="0.8"/><rect x="0.0" y="20.0" width="0.8" height="5" fill="#cda98e" opacity="0.8"/><rect x="11.0" y="20.0" width="0.8" height="5" fill="#cda98e" opacity="0.8"/><rect x="22.0" y="20.0" width="0.8" height="5" fill="#cda98e" opacity="0.8"/><rect x="33.0" y="20.0" width="0.8" height="5" fill="#cda98e" opacity="0.8"/><rect x="44.0" y="20.0" width="0.8" height="5" fill="#cda98e" opacity="0.8"/><rect x="0" y="25.0" width="45" height="0.8" fill="#cda98e" opacity="0.8"/><rect x="5.5" y="25.0" width="0.8" height="5" fill="#cda98e" opacity="0.8"/><rect x="16.5" y="25.0" width="0.8" height="5" fill="#cda98e" opacity="0.8"/><rect x="27.5" y="25.0" width="0.8" height="5" fill="#cda98e" opacity="0.8"/><rect x="38.5" y="25.0" width="0.8" height="5" fill="#cda98e" opacity="0.8"/><rect x="0" y="30.0" width="45" height="0.8" fill="#cda98e" opacity="0.8"/><rect x="0.0" y="30.0" width="0.8" height="5" fill="#cda98e" opacity="0.8"/><rect x="11.0" y="30.0" width="0.8" height="5" fill="#cda98e" opacity="0.8"/><rect x="22.0" y="30.0" width="0.8" height="5" fill="#cda98e" opacity="0.8"/><rect x="33.0" y="30.0" width="0.8" height="5" fill="#cda98e" opacity="0.8"/><rect x="44.0" y="30.0" width="0.8" height="5" fill="#cda98e" opacity="0.8"/><rect x="0" y="35.0" width="45" height="0.8" fill="#cda98e" opacity="0.8"/><rect x="5.5" y="35.0" width="0.8" height="5" fill="#cda98e" opacity="0.8"/><rect x="16.5" y="35.0" width="0.8" height="5" fill="#cda98e" opacity="0.8"/><rect x="27.5" y="35.0" width="0.8" height="5" fill="#cda98e" opacity="0.8"/><rect x="38.5" y="35.0" width="0.8" height="5" fill="#cda98e" opacity="0.8"/><rect x="0" y="40.0" width="45" height="0.8" fill="#cda98e" opacity="0.8"/><rect x="0.0" y="40.0" width="0.8" height="5" fill="#cda98e" opacity="0.8"/><rect x="11.0" y="40.0" width="0.8" height="5" fill="#cda98e" opacity="0.8"/><rect x="22.0" y="40.0" width="0.8" height="5" fill="#cda98e" opacity="0.8"/><rect x="33.0" y="40.0" width="0.8" height="5" fill="#cda98e" opacity="0.8"/><rect x="44.0" y="40.0" width="0.8" height="5" fill="#cda98e" opacity="0.8"/><rect width="45" height="45" filter="url(#nzd)" opacity="0.35"/></svg>
<div class="abs" style="left:1711px;top:297px;width:49px;height:49px;background:#fff;border:1px solid #a3a9b0"></div>
<svg class="abs" style="left:1713px;top:299px;overflow:hidden" width="45" height="45" viewBox="0 0 45 45"><rect width="45" height="45" fill="#bc8a22"/><rect x="0.0" y="0.0" width="6" height="3.6" fill="#c6962c" opacity="1"/><rect x="6.0" y="0.0" width="6" height="3.6" fill="#cc9e34" opacity="1"/><rect x="12.0" y="0.0" width="6" height="3.6" fill="#cc9e34" opacity="1"/><rect x="18.0" y="0.0" width="6" height="3.6" fill="#c6962c" opacity="1"/><rect x="24.0" y="0.0" width="6" height="3.6" fill="#ba8822" opacity="1"/><rect x="30.0" y="0.0" width="6" height="3.6" fill="#cc9e34" opacity="1"/><rect x="36.0" y="0.0" width="6" height="3.6" fill="#a87616" opacity="1"/><rect x="42.0" y="0.0" width="6" height="3.6" fill="#cc9e34" opacity="1"/><rect x="-3.0" y="3.6" width="6" height="3.6" fill="#b4821c" opacity="1"/><rect x="3.0" y="3.6" width="6" height="3.6" fill="#cc9e34" opacity="1"/><rect x="9.0" y="3.6" width="6" height="3.6" fill="#b4821c" opacity="1"/><rect x="15.0" y="3.6" width="6" height="3.6" fill="#a87616" opacity="1"/><rect x="21.0" y="3.6" width="6" height="3.6" fill="#ba8822" opacity="1"/><rect x="27.0" y="3.6" width="6" height="3.6" fill="#cc9e34" opacity="1"/><rect x="33.0" y="3.6" width="6" height="3.6" fill="#c6962c" opacity="1"/><rect x="39.0" y="3.6" width="6" height="3.6" fill="#c6962c" opacity="1"/><rect x="0.0" y="7.2" width="6" height="3.6" fill="#a87616" opacity="1"/><rect x="6.0" y="7.2" width="6" height="3.6" fill="#cc9e34" opacity="1"/><rect x="12.0" y="7.2" width="6" height="3.6" fill="#cc9e34" opacity="1"/><rect x="18.0" y="7.2" width="6" height="3.6" fill="#a87616" opacity="1"/><rect x="24.0" y="7.2" width="6" height="3.6" fill="#a87616" opacity="1"/><rect x="30.0" y="7.2" width="6" height="3.6" fill="#c6962c" opacity="1"/><rect x="36.0" y="7.2" width="6" height="3.6" fill="#c6962c" opacity="1"/><rect x="42.0" y="7.2" width="6" height="3.6" fill="#c6962c" opacity="1"/><rect x="-3.0" y="10.8" width="6" height="3.6" fill="#cc9e34" opacity="1"/><rect x="3.0" y="10.8" width="6" height="3.6" fill="#a87616" opacity="1"/><rect x="9.0" y="10.8" width="6" height="3.6" fill="#b4821c" opacity="1"/><rect x="15.0" y="10.8" width="6" height="3.6" fill="#b4821c" opacity="1"/><rect x="21.0" y="10.8" width="6" height="3.6" fill="#c6962c" opacity="1"/><rect x="27.0" y="10.8" width="6" height="3.6" fill="#cc9e34" opacity="1"/><rect x="33.0" y="10.8" width="6" height="3.6" fill="#b4821c" opacity="1"/><rect x="39.0" y="10.8" width="6" height="3.6" fill="#ba8822" opacity="1"/><rect x="0.0" y="14.4" width="6" height="3.6" fill="#b4821c" opacity="1"/><rect x="6.0" y="14.4" width="6" height="3.6" fill="#ba8822" opacity="1"/><rect x="12.0" y="14.4" width="6" height="3.6" fill="#a87616" opacity="1"/><rect x="18.0" y="14.4" width="6" height="3.6" fill="#cc9e34" opacity="1"/><rect x="24.0" y="14.4" width="6" height="3.6" fill="#a87616" opacity="1"/><rect x="30.0" y="14.4" width="6" height="3.6" fill="#a87616" opacity="1"/><rect x="36.0" y="14.4" width="6" height="3.6" fill="#a87616" opacity="1"/><rect x="42.0" y="14.4" width="6" height="3.6" fill="#cc9e34" opacity="1"/><rect x="-3.0" y="18.0" width="6" height="3.6" fill="#a87616" opacity="1"/><rect x="3.0" y="18.0" width="6" height="3.6" fill="#c6962c" opacity="1"/><rect x="9.0" y="18.0" width="6" height="3.6" fill="#ba8822" opacity="1"/><rect x="15.0" y="18.0" width="6" height="3.6" fill="#b4821c" opacity="1"/><rect x="21.0" y="18.0" width="6" height="3.6" fill="#b4821c" opacity="1"/><rect x="27.0" y="18.0" width="6" height="3.6" fill="#c6962c" opacity="1"/><rect x="33.0" y="18.0" width="6" height="3.6" fill="#a87616" opacity="1"/><rect x="39.0" y="18.0" width="6" height="3.6" fill="#c6962c" opacity="1"/><rect x="0.0" y="21.6" width="6" height="3.6" fill="#ba8822" opacity="1"/><rect x="6.0" y="21.6" width="6" height="3.6" fill="#a87616" opacity="1"/><rect x="12.0" y="21.6" width="6" height="3.6" fill="#ba8822" opacity="1"/><rect x="18.0" y="21.6" width="6" height="3.6" fill="#a87616" opacity="1"/><rect x="24.0" y="21.6" width="6" height="3.6" fill="#cc9e34" opacity="1"/><rect x="30.0" y="21.6" width="6" height="3.6" fill="#a87616" opacity="1"/><rect x="36.0" y="21.6" width="6" height="3.6" fill="#cc9e34" opacity="1"/><rect x="42.0" y="21.6" width="6" height="3.6" fill="#ba8822" opacity="1"/><rect x="-3.0" y="25.2" width="6" height="3.6" fill="#cc9e34" opacity="1"/><rect x="3.0" y="25.2" width="6" height="3.6" fill="#cc9e34" opacity="1"/><rect x="9.0" y="25.2" width="6" height="3.6" fill="#a87616" opacity="1"/><rect x="15.0" y="25.2" width="6" height="3.6" fill="#cc9e34" opacity="1"/><rect x="21.0" y="25.2" width="6" height="3.6" fill="#c6962c" opacity="1"/><rect x="27.0" y="25.2" width="6" height="3.6" fill="#ba8822" opacity="1"/><rect x="33.0" y="25.2" width="6" height="3.6" fill="#b4821c" opacity="1"/><rect x="39.0" y="25.2" width="6" height="3.6" fill="#ba8822" opacity="1"/><rect x="0.0" y="28.8" width="6" height="3.6" fill="#cc9e34" opacity="1"/><rect x="6.0" y="28.8" width="6" height="3.6" fill="#c6962c" opacity="1"/><rect x="12.0" y="28.8" width="6" height="3.6" fill="#ba8822" opacity="1"/><rect x="18.0" y="28.8" width="6" height="3.6" fill="#cc9e34" opacity="1"/><rect x="24.0" y="28.8" width="6" height="3.6" fill="#cc9e34" opacity="1"/><rect x="30.0" y="28.8" width="6" height="3.6" fill="#cc9e34" opacity="1"/><rect x="36.0" y="28.8" width="6" height="3.6" fill="#b4821c" opacity="1"/><rect x="42.0" y="28.8" width="6" height="3.6" fill="#c6962c" opacity="1"/><rect x="-3.0" y="32.4" width="6" height="3.6" fill="#cc9e34" opacity="1"/><rect x="3.0" y="32.4" width="6" height="3.6" fill="#ba8822" opacity="1"/><rect x="9.0" y="32.4" width="6" height="3.6" fill="#ba8822" opacity="1"/><rect x="15.0" y="32.4" width="6" height="3.6" fill="#b4821c" opacity="1"/><rect x="21.0" y="32.4" width="6" height="3.6" fill="#b4821c" opacity="1"/><rect x="27.0" y="32.4" width="6" height="3.6" fill="#a87616" opacity="1"/><rect x="33.0" y="32.4" width="6" height="3.6" fill="#a87616" opacity="1"/><rect x="39.0" y="32.4" width="6" height="3.6" fill="#b4821c" opacity="1"/><rect x="0.0" y="36.0" width="6" height="3.6" fill="#ba8822" opacity="1"/><rect x="6.0" y="36.0" width="6" height="3.6" fill="#b4821c" opacity="1"/><rect x="12.0" y="36.0" width="6" height="3.6" fill="#a87616" opacity="1"/><rect x="18.0" y="36.0" width="6" height="3.6" fill="#c6962c" opacity="1"/><rect x="24.0" y="36.0" width="6" height="3.6" fill="#b4821c" opacity="1"/><rect x="30.0" y="36.0" width="6" height="3.6" fill="#ba8822" opacity="1"/><rect x="36.0" y="36.0" width="6" height="3.6" fill="#a87616" opacity="1"/><rect x="42.0" y="36.0" width="6" height="3.6" fill="#a87616" opacity="1"/><rect x="-3.0" y="39.6" width="6" height="3.6" fill="#b4821c" opacity="1"/><rect x="3.0" y="39.6" width="6" height="3.6" fill="#b4821c" opacity="1"/><rect x="9.0" y="39.6" width="6" height="3.6" fill="#cc9e34" opacity="1"/><rect x="15.0" y="39.6" width="6" height="3.6" fill="#cc9e34" opacity="1"/><rect x="21.0" y="39.6" width="6" height="3.6" fill="#b4821c" opacity="1"/><rect x="27.0" y="39.6" width="6" height="3.6" fill="#a87616" opacity="1"/><rect x="33.0" y="39.6" width="6" height="3.6" fill="#cc9e34" opacity="1"/><rect x="39.0" y="39.6" width="6" height="3.6" fill="#ba8822" opacity="1"/><rect x="0.0" y="43.2" width="6" height="3.6" fill="#cc9e34" opacity="1"/><rect x="6.0" y="43.2" width="6" height="3.6" fill="#ba8822" opacity="1"/><rect x="12.0" y="43.2" width="6" height="3.6" fill="#cc9e34" opacity="1"/><rect x="18.0" y="43.2" width="6" height="3.6" fill="#c6962c" opacity="1"/><rect x="24.0" y="43.2" width="6" height="3.6" fill="#b4821c" opacity="1"/><rect x="30.0" y="43.2" width="6" height="3.6" fill="#ba8822" opacity="1"/><rect x="36.0" y="43.2" width="6" height="3.6" fill="#b4821c" opacity="1"/><rect x="42.0" y="43.2" width="6" height="3.6" fill="#b4821c" opacity="1"/><rect x="0" y="0.0" width="45" height="0.5" fill="#8a5c0c" opacity="0.35"/><rect x="0.0" y="0.0" width="0.5" height="3.6" fill="#8a5c0c" opacity="0.35"/><rect x="6.0" y="0.0" width="0.5" height="3.6" fill="#8a5c0c" opacity="0.35"/><rect x="12.0" y="0.0" width="0.5" height="3.6" fill="#8a5c0c" opacity="0.35"/><rect x="18.0" y="0.0" width="0.5" height="3.6" fill="#8a5c0c" opacity="0.35"/><rect x="24.0" y="0.0" width="0.5" height="3.6" fill="#8a5c0c" opacity="0.35"/><rect x="30.0" y="0.0" width="0.5" height="3.6" fill="#8a5c0c" opacity="0.35"/><rect x="36.0" y="0.0" width="0.5" height="3.6" fill="#8a5c0c" opacity="0.35"/><rect x="42.0" y="0.0" width="0.5" height="3.6" fill="#8a5c0c" opacity="0.35"/><rect x="0" y="3.6" width="45" height="0.5" fill="#8a5c0c" opacity="0.35"/><rect x="3.0" y="3.6" width="0.5" height="3.6" fill="#8a5c0c" opacity="0.35"/><rect x="9.0" y="3.6" width="0.5" height="3.6" fill="#8a5c0c" opacity="0.35"/><rect x="15.0" y="3.6" width="0.5" height="3.6" fill="#8a5c0c" opacity="0.35"/><rect x="21.0" y="3.6" width="0.5" height="3.6" fill="#8a5c0c" opacity="0.35"/><rect x="27.0" y="3.6" width="0.5" height="3.6" fill="#8a5c0c" opacity="0.35"/><rect x="33.0" y="3.6" width="0.5" height="3.6" fill="#8a5c0c" opacity="0.35"/><rect x="39.0" y="3.6" width="0.5" height="3.6" fill="#8a5c0c" opacity="0.35"/><rect x="0" y="7.2" width="45" height="0.5" fill="#8a5c0c" opacity="0.35"/><rect x="0.0" y="7.2" width="0.5" height="3.6" fill="#8a5c0c" opacity="0.35"/><rect x="6.0" y="7.2" width="0.5" height="3.6" fill="#8a5c0c" opacity="0.35"/><rect x="12.0" y="7.2" width="0.5" height="3.6" fill="#8a5c0c" opacity="0.35"/><rect x="18.0" y="7.2" width="0.5" height="3.6" fill="#8a5c0c" opacity="0.35"/><rect x="24.0" y="7.2" width="0.5" height="3.6" fill="#8a5c0c" opacity="0.35"/><rect x="30.0" y="7.2" width="0.5" height="3.6" fill="#8a5c0c" opacity="0.35"/><rect x="36.0" y="7.2" width="0.5" height="3.6" fill="#8a5c0c" opacity="0.35"/><rect x="42.0" y="7.2" width="0.5" height="3.6" fill="#8a5c0c" opacity="0.35"/><rect x="0" y="10.8" width="45" height="0.5" fill="#8a5c0c" opacity="0.35"/><rect x="3.0" y="10.8" width="0.5" height="3.6" fill="#8a5c0c" opacity="0.35"/><rect x="9.0" y="10.8" width="0.5" height="3.6" fill="#8a5c0c" opacity="0.35"/><rect x="15.0" y="10.8" width="0.5" height="3.6" fill="#8a5c0c" opacity="0.35"/><rect x="21.0" y="10.8" width="0.5" height="3.6" fill="#8a5c0c" opacity="0.35"/><rect x="27.0" y="10.8" width="0.5" height="3.6" fill="#8a5c0c" opacity="0.35"/><rect x="33.0" y="10.8" width="0.5" height="3.6" fill="#8a5c0c" opacity="0.35"/><rect x="39.0" y="10.8" width="0.5" height="3.6" fill="#8a5c0c" opacity="0.35"/><rect x="0" y="14.4" width="45" height="0.5" fill="#8a5c0c" opacity="0.35"/><rect x="0.0" y="14.4" width="0.5" height="3.6" fill="#8a5c0c" opacity="0.35"/><rect x="6.0" y="14.4" width="0.5" height="3.6" fill="#8a5c0c" opacity="0.35"/><rect x="12.0" y="14.4" width="0.5" height="3.6" fill="#8a5c0c" opacity="0.35"/><rect x="18.0" y="14.4" width="0.5" height="3.6" fill="#8a5c0c" opacity="0.35"/><rect x="24.0" y="14.4" width="0.5" height="3.6" fill="#8a5c0c" opacity="0.35"/><rect x="30.0" y="14.4" width="0.5" height="3.6" fill="#8a5c0c" opacity="0.35"/><rect x="36.0" y="14.4" width="0.5" height="3.6" fill="#8a5c0c" opacity="0.35"/><rect x="42.0" y="14.4" width="0.5" height="3.6" fill="#8a5c0c" opacity="0.35"/><rect x="0" y="18.0" width="45" height="0.5" fill="#8a5c0c" opacity="0.35"/><rect x="3.0" y="18.0" width="0.5" height="3.6" fill="#8a5c0c" opacity="0.35"/><rect x="9.0" y="18.0" width="0.5" height="3.6" fill="#8a5c0c" opacity="0.35"/><rect x="15.0" y="18.0" width="0.5" height="3.6" fill="#8a5c0c" opacity="0.35"/><rect x="21.0" y="18.0" width="0.5" height="3.6" fill="#8a5c0c" opacity="0.35"/><rect x="27.0" y="18.0" width="0.5" height="3.6" fill="#8a5c0c" opacity="0.35"/><rect x="33.0" y="18.0" width="0.5" height="3.6" fill="#8a5c0c" opacity="0.35"/><rect x="39.0" y="18.0" width="0.5" height="3.6" fill="#8a5c0c" opacity="0.35"/><rect x="0" y="21.6" width="45" height="0.5" fill="#8a5c0c" opacity="0.35"/><rect x="0.0" y="21.6" width="0.5" height="3.6" fill="#8a5c0c" opacity="0.35"/><rect x="6.0" y="21.6" width="0.5" height="3.6" fill="#8a5c0c" opacity="0.35"/><rect x="12.0" y="21.6" width="0.5" height="3.6" fill="#8a5c0c" opacity="0.35"/><rect x="18.0" y="21.6" width="0.5" height="3.6" fill="#8a5c0c" opacity="0.35"/><rect x="24.0" y="21.6" width="0.5" height="3.6" fill="#8a5c0c" opacity="0.35"/><rect x="30.0" y="21.6" width="0.5" height="3.6" fill="#8a5c0c" opacity="0.35"/><rect x="36.0" y="21.6" width="0.5" height="3.6" fill="#8a5c0c" opacity="0.35"/><rect x="42.0" y="21.6" width="0.5" height="3.6" fill="#8a5c0c" opacity="0.35"/><rect x="0" y="25.2" width="45" height="0.5" fill="#8a5c0c" opacity="0.35"/><rect x="3.0" y="25.2" width="0.5" height="3.6" fill="#8a5c0c" opacity="0.35"/><rect x="9.0" y="25.2" width="0.5" height="3.6" fill="#8a5c0c" opacity="0.35"/><rect x="15.0" y="25.2" width="0.5" height="3.6" fill="#8a5c0c" opacity="0.35"/><rect x="21.0" y="25.2" width="0.5" height="3.6" fill="#8a5c0c" opacity="0.35"/><rect x="27.0" y="25.2" width="0.5" height="3.6" fill="#8a5c0c" opacity="0.35"/><rect x="33.0" y="25.2" width="0.5" height="3.6" fill="#8a5c0c" opacity="0.35"/><rect x="39.0" y="25.2" width="0.5" height="3.6" fill="#8a5c0c" opacity="0.35"/><rect x="0" y="28.8" width="45" height="0.5" fill="#8a5c0c" opacity="0.35"/><rect x="0.0" y="28.8" width="0.5" height="3.6" fill="#8a5c0c" opacity="0.35"/><rect x="6.0" y="28.8" width="0.5" height="3.6" fill="#8a5c0c" opacity="0.35"/><rect x="12.0" y="28.8" width="0.5" height="3.6" fill="#8a5c0c" opacity="0.35"/><rect x="18.0" y="28.8" width="0.5" height="3.6" fill="#8a5c0c" opacity="0.35"/><rect x="24.0" y="28.8" width="0.5" height="3.6" fill="#8a5c0c" opacity="0.35"/><rect x="30.0" y="28.8" width="0.5" height="3.6" fill="#8a5c0c" opacity="0.35"/><rect x="36.0" y="28.8" width="0.5" height="3.6" fill="#8a5c0c" opacity="0.35"/><rect x="42.0" y="28.8" width="0.5" height="3.6" fill="#8a5c0c" opacity="0.35"/><rect x="0" y="32.4" width="45" height="0.5" fill="#8a5c0c" opacity="0.35"/><rect x="3.0" y="32.4" width="0.5" height="3.6" fill="#8a5c0c" opacity="0.35"/><rect x="9.0" y="32.4" width="0.5" height="3.6" fill="#8a5c0c" opacity="0.35"/><rect x="15.0" y="32.4" width="0.5" height="3.6" fill="#8a5c0c" opacity="0.35"/><rect x="21.0" y="32.4" width="0.5" height="3.6" fill="#8a5c0c" opacity="0.35"/><rect x="27.0" y="32.4" width="0.5" height="3.6" fill="#8a5c0c" opacity="0.35"/><rect x="33.0" y="32.4" width="0.5" height="3.6" fill="#8a5c0c" opacity="0.35"/><rect x="39.0" y="32.4" width="0.5" height="3.6" fill="#8a5c0c" opacity="0.35"/><rect x="0" y="36.0" width="45" height="0.5" fill="#8a5c0c" opacity="0.35"/><rect x="0.0" y="36.0" width="0.5" height="3.6" fill="#8a5c0c" opacity="0.35"/><rect x="6.0" y="36.0" width="0.5" height="3.6" fill="#8a5c0c" opacity="0.35"/><rect x="12.0" y="36.0" width="0.5" height="3.6" fill="#8a5c0c" opacity="0.35"/><rect x="18.0" y="36.0" width="0.5" height="3.6" fill="#8a5c0c" opacity="0.35"/><rect x="24.0" y="36.0" width="0.5" height="3.6" fill="#8a5c0c" opacity="0.35"/><rect x="30.0" y="36.0" width="0.5" height="3.6" fill="#8a5c0c" opacity="0.35"/><rect x="36.0" y="36.0" width="0.5" height="3.6" fill="#8a5c0c" opacity="0.35"/><rect x="42.0" y="36.0" width="0.5" height="3.6" fill="#8a5c0c" opacity="0.35"/><rect x="0" y="39.6" width="45" height="0.5" fill="#8a5c0c" opacity="0.35"/><rect x="3.0" y="39.6" width="0.5" height="3.6" fill="#8a5c0c" opacity="0.35"/><rect x="9.0" y="39.6" width="0.5" height="3.6" fill="#8a5c0c" opacity="0.35"/><rect x="15.0" y="39.6" width="0.5" height="3.6" fill="#8a5c0c" opacity="0.35"/><rect x="21.0" y="39.6" width="0.5" height="3.6" fill="#8a5c0c" opacity="0.35"/><rect x="27.0" y="39.6" width="0.5" height="3.6" fill="#8a5c0c" opacity="0.35"/><rect x="33.0" y="39.6" width="0.5" height="3.6" fill="#8a5c0c" opacity="0.35"/><rect x="39.0" y="39.6" width="0.5" height="3.6" fill="#8a5c0c" opacity="0.35"/><rect x="0" y="43.2" width="45" height="0.5" fill="#8a5c0c" opacity="0.35"/><rect x="0.0" y="43.2" width="0.5" height="3.6" fill="#8a5c0c" opacity="0.35"/><rect x="6.0" y="43.2" width="0.5" height="3.6" fill="#8a5c0c" opacity="0.35"/><rect x="12.0" y="43.2" width="0.5" height="3.6" fill="#8a5c0c" opacity="0.35"/><rect x="18.0" y="43.2" width="0.5" height="3.6" fill="#8a5c0c" opacity="0.35"/><rect x="24.0" y="43.2" width="0.5" height="3.6" fill="#8a5c0c" opacity="0.35"/><rect x="30.0" y="43.2" width="0.5" height="3.6" fill="#8a5c0c" opacity="0.35"/><rect x="36.0" y="43.2" width="0.5" height="3.6" fill="#8a5c0c" opacity="0.35"/><rect x="42.0" y="43.2" width="0.5" height="3.6" fill="#8a5c0c" opacity="0.35"/><rect width="45" height="45" filter="url(#nzd)" opacity="0.3"/><rect width="45" height="45" filter="url(#nzl)" opacity="0.12"/></svg>
<div class="abs" style="left:1763px;top:297px;width:49px;height:49px;background:#fff;border:1px solid #a3a9b0"></div>
<svg class="abs" style="left:1765px;top:299px;overflow:hidden" width="45" height="45" viewBox="0 0 45 45"><rect width="45" height="45" fill="#f2a09a"/><rect x="-1.0" y="-1.0" width="11.500" height="11.500" fill="#f5aa9e"/><rect x="2.8" y="-1.0" width="0.7" height="11.5" fill="#e8868c" opacity="1"/><rect x="6.6" y="-1.0" width="0.7" height="11.5" fill="#e8868c" opacity="1"/><rect x="-1.0" y="-1.0" width="11.500" height="11.500" fill="none" stroke="#e58088" stroke-width=".6"/><rect x="10.5" y="-1.0" width="11.500" height="11.500" fill="#ee9597"/><rect x="10.5" y="2.8" width="11.5" height="0.7" fill="#f6b0aa" opacity="1"/><rect x="10.5" y="6.6" width="11.5" height="0.7" fill="#f6b0aa" opacity="1"/><rect x="10.5" y="-1.0" width="11.500" height="11.500" fill="none" stroke="#e58088" stroke-width=".6"/><rect x="22.0" y="-1.0" width="11.500" height="11.500" fill="#f5aa9e"/><rect x="25.8" y="-1.0" width="0.7" height="11.5" fill="#e8868c" opacity="1"/><rect x="29.6" y="-1.0" width="0.7" height="11.5" fill="#e8868c" opacity="1"/><rect x="22.0" y="-1.0" width="11.500" height="11.500" fill="none" stroke="#e58088" stroke-width=".6"/><rect x="33.5" y="-1.0" width="11.500" height="11.500" fill="#ee9597"/><rect x="33.5" y="2.8" width="11.5" height="0.7" fill="#f6b0aa" opacity="1"/><rect x="33.5" y="6.6" width="11.5" height="0.7" fill="#f6b0aa" opacity="1"/><rect x="33.5" y="-1.0" width="11.500" height="11.500" fill="none" stroke="#e58088" stroke-width=".6"/><rect x="-1.0" y="10.5" width="11.500" height="11.500" fill="#ee9597"/><rect x="-1.0" y="14.3" width="11.5" height="0.7" fill="#f6b0aa" opacity="1"/><rect x="-1.0" y="18.1" width="11.5" height="0.7" fill="#f6b0aa" opacity="1"/><rect x="-1.0" y="10.5" width="11.500" height="11.500" fill="none" stroke="#e58088" stroke-width=".6"/><rect x="10.5" y="10.5" width="11.500" height="11.500" fill="#f5aa9e"/><rect x="14.3" y="10.5" width="0.7" height="11.5" fill="#e8868c" opacity="1"/><rect x="18.1" y="10.5" width="0.7" height="11.5" fill="#e8868c" opacity="1"/><rect x="10.5" y="10.5" width="11.500" height="11.500" fill="none" stroke="#e58088" stroke-width=".6"/><rect x="22.0" y="10.5" width="11.500" height="11.500" fill="#ee9597"/><rect x="22.0" y="14.3" width="11.5" height="0.7" fill="#f6b0aa" opacity="1"/><rect x="22.0" y="18.1" width="11.5" height="0.7" fill="#f6b0aa" opacity="1"/><rect x="22.0" y="10.5" width="11.500" height="11.500" fill="none" stroke="#e58088" stroke-width=".6"/><rect x="33.5" y="10.5" width="11.500" height="11.500" fill="#f5aa9e"/><rect x="37.3" y="10.5" width="0.7" height="11.5" fill="#e8868c" opacity="1"/><rect x="41.1" y="10.5" width="0.7" height="11.5" fill="#e8868c" opacity="1"/><rect x="33.5" y="10.5" width="11.500" height="11.500" fill="none" stroke="#e58088" stroke-width=".6"/><rect x="-1.0" y="22.0" width="11.500" height="11.500" fill="#f5aa9e"/><rect x="2.8" y="22.0" width="0.7" height="11.5" fill="#e8868c" opacity="1"/><rect x="6.6" y="22.0" width="0.7" height="11.5" fill="#e8868c" opacity="1"/><rect x="-1.0" y="22.0" width="11.500" height="11.500" fill="none" stroke="#e58088" stroke-width=".6"/><rect x="10.5" y="22.0" width="11.500" height="11.500" fill="#ee9597"/><rect x="10.5" y="25.8" width="11.5" height="0.7" fill="#f6b0aa" opacity="1"/><rect x="10.5" y="29.6" width="11.5" height="0.7" fill="#f6b0aa" opacity="1"/><rect x="10.5" y="22.0" width="11.500" height="11.500" fill="none" stroke="#e58088" stroke-width=".6"/><rect x="22.0" y="22.0" width="11.500" height="11.500" fill="#f5aa9e"/><rect x="25.8" y="22.0" width="0.7" height="11.5" fill="#e8868c" opacity="1"/><rect x="29.6" y="22.0" width="0.7" height="11.5" fill="#e8868c" opacity="1"/><rect x="22.0" y="22.0" width="11.500" height="11.500" fill="none" stroke="#e58088" stroke-width=".6"/><rect x="33.5" y="22.0" width="11.500" height="11.500" fill="#ee9597"/><rect x="33.5" y="25.8" width="11.5" height="0.7" fill="#f6b0aa" opacity="1"/><rect x="33.5" y="29.6" width="11.5" height="0.7" fill="#f6b0aa" opacity="1"/><rect x="33.5" y="22.0" width="11.500" height="11.500" fill="none" stroke="#e58088" stroke-width=".6"/><rect x="-1.0" y="33.5" width="11.500" height="11.500" fill="#ee9597"/><rect x="-1.0" y="37.3" width="11.5" height="0.7" fill="#f6b0aa" opacity="1"/><rect x="-1.0" y="41.1" width="11.5" height="0.7" fill="#f6b0aa" opacity="1"/><rect x="-1.0" y="33.5" width="11.500" height="11.500" fill="none" stroke="#e58088" stroke-width=".6"/><rect x="10.5" y="33.5" width="11.500" height="11.500" fill="#f5aa9e"/><rect x="14.3" y="33.5" width="0.7" height="11.5" fill="#e8868c" opacity="1"/><rect x="18.1" y="33.5" width="0.7" height="11.5" fill="#e8868c" opacity="1"/><rect x="10.5" y="33.5" width="11.500" height="11.500" fill="none" stroke="#e58088" stroke-width=".6"/><rect x="22.0" y="33.5" width="11.500" height="11.500" fill="#ee9597"/><rect x="22.0" y="37.3" width="11.5" height="0.7" fill="#f6b0aa" opacity="1"/><rect x="22.0" y="41.1" width="11.5" height="0.7" fill="#f6b0aa" opacity="1"/><rect x="22.0" y="33.5" width="11.500" height="11.500" fill="none" stroke="#e58088" stroke-width=".6"/><rect x="33.5" y="33.5" width="11.500" height="11.500" fill="#f5aa9e"/><rect x="37.3" y="33.5" width="0.7" height="11.5" fill="#e8868c" opacity="1"/><rect x="41.1" y="33.5" width="0.7" height="11.5" fill="#e8868c" opacity="1"/><rect x="33.5" y="33.5" width="11.500" height="11.500" fill="none" stroke="#e58088" stroke-width=".6"/><rect width="45" height="45" filter="url(#nzl)" opacity="0.12"/></svg>
<div class="abs" style="left:1815px;top:297px;width:49px;height:49px;background:#fff;border:1px solid #a3a9b0"></div>
<svg class="abs" style="left:1817px;top:299px;overflow:hidden" width="45" height="45" viewBox="0 0 45 45"><rect width="45" height="45" fill="#8d94aa"/><rect width="45" height="45" filter="url(#nzd)" opacity="0.3"/><rect width="45" height="45" filter="url(#nzl)" opacity="0.42"/><rect x="0" y="21.500" width="45" height="2.800" fill="#d6ceb0"/><rect x="22.500" y="0" width="2.600" height="22" fill="#d6ceb0"/><rect x="0" y="0" width="45" height="1.200" fill="#d6ceb0" opacity=".7"/><rect x="0" y="44" width="45" height="1" fill="#d6ceb0" opacity=".7"/></svg>
<div class="abs" style="left:1607px;top:349px;width:49px;height:49px;background:#fff;border:1px solid #a3a9b0"></div>
<svg class="abs" style="left:1609px;top:351px;overflow:hidden" width="45" height="45" viewBox="0 0 45 45"><rect width="45" height="45" fill="#5f4a30"/><rect x="0.0" y="0.0" width="11" height="5" fill="#6a4a30" opacity="1"/><rect x="11.0" y="0.0" width="11" height="5" fill="#443422" opacity="1"/><rect x="22.0" y="0.0" width="11" height="5" fill="#6a4a30" opacity="1"/><rect x="33.0" y="0.0" width="11" height="5" fill="#4e3c26" opacity="1"/><rect x="44.0" y="0.0" width="11" height="5" fill="#7c6442" opacity="1"/><rect x="-5.5" y="5.0" width="11" height="5" fill="#6a4a30" opacity="1"/><rect x="5.5" y="5.0" width="11" height="5" fill="#5c462e" opacity="1"/><rect x="16.5" y="5.0" width="11" height="5" fill="#4e3c26" opacity="1"/><rect x="27.5" y="5.0" width="11" height="5" fill="#4e3c26" opacity="1"/><rect x="38.5" y="5.0" width="11" height="5" fill="#6e5638" opacity="1"/><rect x="0.0" y="10.0" width="11" height="5" fill="#826c4a" opacity="1"/><rect x="11.0" y="10.0" width="11" height="5" fill="#443422" opacity="1"/><rect x="22.0" y="10.0" width="11" height="5" fill="#7c6442" opacity="1"/><rect x="33.0" y="10.0" width="11" height="5" fill="#6a4a30" opacity="1"/><rect x="44.0" y="10.0" width="11" height="5" fill="#826c4a" opacity="1"/><rect x="-5.5" y="15.0" width="11" height="5" fill="#5c462e" opacity="1"/><rect x="5.5" y="15.0" width="11" height="5" fill="#5c462e" opacity="1"/><rect x="16.5" y="15.0" width="11" height="5" fill="#6a4a30" opacity="1"/><rect x="27.5" y="15.0" width="11" height="5" fill="#4e3c26" opacity="1"/><rect x="38.5" y="15.0" width="11" height="5" fill="#5c462e" opacity="1"/><rect x="0.0" y="20.0" width="11" height="5" fill="#7c6442" opacity="1"/><rect x="11.0" y="20.0" width="11" height="5" fill="#6a4a30" opacity="1"/><rect x="22.0" y="20.0" width="11" height="5" fill="#6e5638" opacity="1"/><rect x="33.0" y="20.0" width="11" height="5" fill="#826c4a" opacity="1"/><rect x="44.0" y="20.0" width="11" height="5" fill="#6a4a30" opacity="1"/><rect x="-5.5" y="25.0" width="11" height="5" fill="#7c6442" opacity="1"/><rect x="5.5" y="25.0" width="11" height="5" fill="#443422" opacity="1"/><rect x="16.5" y="25.0" width="11" height="5" fill="#443422" opacity="1"/><rect x="27.5" y="25.0" width="11" height="5" fill="#826c4a" opacity="1"/><rect x="38.5" y="25.0" width="11" height="5" fill="#4e3c26" opacity="1"/><rect x="0.0" y="30.0" width="11" height="5" fill="#6e5638" opacity="1"/><rect x="11.0" y="30.0" width="11" height="5" fill="#443422" opacity="1"/><rect x="22.0" y="30.0" width="11" height="5" fill="#443422" opacity="1"/><rect x="33.0" y="30.0" width="11" height="5" fill="#826c4a" opacity="1"/><rect x="44.0" y="30.0" width="11" height="5" fill="#6a4a30" opacity="1"/><rect x="-5.5" y="35.0" width="11" height="5" fill="#826c4a" opacity="1"/><rect x="5.5" y="35.0" width="11" height="5" fill="#5c462e" opacity="1"/><rect x="16.5" y="35.0" width="11" height="5" fill="#826c4a" opacity="1"/><rect x="27.5" y="35.0" width="11" height="5" fill="#6a4a30" opacity="1"/><rect x="38.5" y="35.0" width="11" height="5" fill="#443422" opacity="1"/><rect x="0.0" y="40.0" width="11" height="5" fill="#826c4a" opacity="1"/><rect x="11.0" y="40.0" width="11" height="5" fill="#4e3c26" opacity="1"/><rect x="22.0" y="40.0" width="11" height="5" fill="#6a4a30" opacity="1"/><rect x="33.0" y="40.0" width="11" height="5" fill="#7c6442" opacity="1"/><rect x="44.0" y="40.0" width="11" height="5" fill="#5c462e" opacity="1"/><rect x="0" y="0.0" width="45" height="0.7" fill="#a08a68" opacity="0.6"/><rect x="0.0" y="0.0" width="0.7" height="5" fill="#a08a68" opacity="0.6"/><rect x="11.0" y="0.0" width="0.7" height="5" fill="#a08a68" opacity="0.6"/><rect x="22.0" y="0.0" width="0.7" height="5" fill="#a08a68" opacity="0.6"/><rect x="33.0" y="0.0" width="0.7" height="5" fill="#a08a68" opacity="0.6"/><rect x="44.0" y="0.0" width="0.7" height="5" fill="#a08a68" opacity="0.6"/><rect x="0" y="5.0" width="45" height="0.7" fill="#a08a68" opacity="0.6"/><rect x="5.5" y="5.0" width="0.7" height="5" fill="#a08a68" opacity="0.6"/><rect x="16.5" y="5.0" width="0.7" height="5" fill="#a08a68" opacity="0.6"/><rect x="27.5" y="5.0" width="0.7" height="5" fill="#a08a68" opacity="0.6"/><rect x="38.5" y="5.0" width="0.7" height="5" fill="#a08a68" opacity="0.6"/><rect x="0" y="10.0" width="45" height="0.7" fill="#a08a68" opacity="0.6"/><rect x="0.0" y="10.0" width="0.7" height="5" fill="#a08a68" opacity="0.6"/><rect x="11.0" y="10.0" width="0.7" height="5" fill="#a08a68" opacity="0.6"/><rect x="22.0" y="10.0" width="0.7" height="5" fill="#a08a68" opacity="0.6"/><rect x="33.0" y="10.0" width="0.7" height="5" fill="#a08a68" opacity="0.6"/><rect x="44.0" y="10.0" width="0.7" height="5" fill="#a08a68" opacity="0.6"/><rect x="0" y="15.0" width="45" height="0.7" fill="#a08a68" opacity="0.6"/><rect x="5.5" y="15.0" width="0.7" height="5" fill="#a08a68" opacity="0.6"/><rect x="16.5" y="15.0" width="0.7" height="5" fill="#a08a68" opacity="0.6"/><rect x="27.5" y="15.0" width="0.7" height="5" fill="#a08a68" opacity="0.6"/><rect x="38.5" y="15.0" width="0.7" height="5" fill="#a08a68" opacity="0.6"/><rect x="0" y="20.0" width="45" height="0.7" fill="#a08a68" opacity="0.6"/><rect x="0.0" y="20.0" width="0.7" height="5" fill="#a08a68" opacity="0.6"/><rect x="11.0" y="20.0" width="0.7" height="5" fill="#a08a68" opacity="0.6"/><rect x="22.0" y="20.0" width="0.7" height="5" fill="#a08a68" opacity="0.6"/><rect x="33.0" y="20.0" width="0.7" height="5" fill="#a08a68" opacity="0.6"/><rect x="44.0" y="20.0" width="0.7" height="5" fill="#a08a68" opacity="0.6"/><rect x="0" y="25.0" width="45" height="0.7" fill="#a08a68" opacity="0.6"/><rect x="5.5" y="25.0" width="0.7" height="5" fill="#a08a68" opacity="0.6"/><rect x="16.5" y="25.0" width="0.7" height="5" fill="#a08a68" opacity="0.6"/><rect x="27.5" y="25.0" width="0.7" height="5" fill="#a08a68" opacity="0.6"/><rect x="38.5" y="25.0" width="0.7" height="5" fill="#a08a68" opacity="0.6"/><rect x="0" y="30.0" width="45" height="0.7" fill="#a08a68" opacity="0.6"/><rect x="0.0" y="30.0" width="0.7" height="5" fill="#a08a68" opacity="0.6"/><rect x="11.0" y="30.0" width="0.7" height="5" fill="#a08a68" opacity="0.6"/><rect x="22.0" y="30.0" width="0.7" height="5" fill="#a08a68" opacity="0.6"/><rect x="33.0" y="30.0" width="0.7" height="5" fill="#a08a68" opacity="0.6"/><rect x="44.0" y="30.0" width="0.7" height="5" fill="#a08a68" opacity="0.6"/><rect x="0" y="35.0" width="45" height="0.7" fill="#a08a68" opacity="0.6"/><rect x="5.5" y="35.0" width="0.7" height="5" fill="#a08a68" opacity="0.6"/><rect x="16.5" y="35.0" width="0.7" height="5" fill="#a08a68" opacity="0.6"/><rect x="27.5" y="35.0" width="0.7" height="5" fill="#a08a68" opacity="0.6"/><rect x="38.5" y="35.0" width="0.7" height="5" fill="#a08a68" opacity="0.6"/><rect x="0" y="40.0" width="45" height="0.7" fill="#a08a68" opacity="0.6"/><rect x="0.0" y="40.0" width="0.7" height="5" fill="#a08a68" opacity="0.6"/><rect x="11.0" y="40.0" width="0.7" height="5" fill="#a08a68" opacity="0.6"/><rect x="22.0" y="40.0" width="0.7" height="5" fill="#a08a68" opacity="0.6"/><rect x="33.0" y="40.0" width="0.7" height="5" fill="#a08a68" opacity="0.6"/><rect x="44.0" y="40.0" width="0.7" height="5" fill="#a08a68" opacity="0.6"/><rect width="45" height="45" filter="url(#nzd)" opacity="0.25"/></svg>
<div class="abs" style="left:1659px;top:349px;width:49px;height:49px;background:#fff;border:1px solid #a3a9b0"></div>
<svg class="abs" style="left:1661px;top:351px;overflow:hidden" width="45" height="45" viewBox="0 0 45 45"><rect width="45" height="45" fill="#bc9c42"/><rect x="0.0" y="0.0" width="10.5" height="5" fill="#ae8a30" opacity="1"/><rect x="10.5" y="0.0" width="10.5" height="5" fill="#c4a44a" opacity="1"/><rect x="21.0" y="0.0" width="10.5" height="5" fill="#ccae54" opacity="1"/><rect x="31.5" y="0.0" width="10.5" height="5" fill="#b6943a" opacity="1"/><rect x="42.0" y="0.0" width="10.5" height="5" fill="#b6943a" opacity="1"/><rect x="-5.2" y="5.0" width="10.5" height="5" fill="#bc983e" opacity="1"/><rect x="5.2" y="5.0" width="10.5" height="5" fill="#b6943a" opacity="1"/><rect x="15.8" y="5.0" width="10.5" height="5" fill="#ae8a30" opacity="1"/><rect x="26.2" y="5.0" width="10.5" height="5" fill="#bc983e" opacity="1"/><rect x="36.8" y="5.0" width="10.5" height="5" fill="#b6943a" opacity="1"/><rect x="0.0" y="10.0" width="10.5" height="5" fill="#bc983e" opacity="1"/><rect x="10.5" y="10.0" width="10.5" height="5" fill="#c4a44a" opacity="1"/><rect x="21.0" y="10.0" width="10.5" height="5" fill="#b6943a" opacity="1"/><rect x="31.5" y="10.0" width="10.5" height="5" fill="#b6943a" opacity="1"/><rect x="42.0" y="10.0" width="10.5" height="5" fill="#ccae54" opacity="1"/><rect x="-5.2" y="15.0" width="10.5" height="5" fill="#ccae54" opacity="1"/><rect x="5.2" y="15.0" width="10.5" height="5" fill="#b6943a" opacity="1"/><rect x="15.8" y="15.0" width="10.5" height="5" fill="#c4a44a" opacity="1"/><rect x="26.2" y="15.0" width="10.5" height="5" fill="#b6943a" opacity="1"/><rect x="36.8" y="15.0" width="10.5" height="5" fill="#bc983e" opacity="1"/><rect x="0.0" y="20.0" width="10.5" height="5" fill="#ccae54" opacity="1"/><rect x="10.5" y="20.0" width="10.5" height="5" fill="#b6943a" opacity="1"/><rect x="21.0" y="20.0" width="10.5" height="5" fill="#bc983e" opacity="1"/><rect x="31.5" y="20.0" width="10.5" height="5" fill="#b6943a" opacity="1"/><rect x="42.0" y="20.0" width="10.5" height="5" fill="#c4a44a" opacity="1"/><rect x="-5.2" y="25.0" width="10.5" height="5" fill="#bc983e" opacity="1"/><rect x="5.2" y="25.0" width="10.5" height="5" fill="#b6943a" opacity="1"/><rect x="15.8" y="25.0" width="10.5" height="5" fill="#bc983e" opacity="1"/><rect x="26.2" y="25.0" width="10.5" height="5" fill="#bc983e" opacity="1"/><rect x="36.8" y="25.0" width="10.5" height="5" fill="#ccae54" opacity="1"/><rect x="0.0" y="30.0" width="10.5" height="5" fill="#b6943a" opacity="1"/><rect x="10.5" y="30.0" width="10.5" height="5" fill="#c4a44a" opacity="1"/><rect x="21.0" y="30.0" width="10.5" height="5" fill="#b6943a" opacity="1"/><rect x="31.5" y="30.0" width="10.5" height="5" fill="#bc983e" opacity="1"/><rect x="42.0" y="30.0" width="10.5" height="5" fill="#c4a44a" opacity="1"/><rect x="-5.2" y="35.0" width="10.5" height="5" fill="#ae8a30" opacity="1"/><rect x="5.2" y="35.0" width="10.5" height="5" fill="#ccae54" opacity="1"/><rect x="15.8" y="35.0" width="10.5" height="5" fill="#c4a44a" opacity="1"/><rect x="26.2" y="35.0" width="10.5" height="5" fill="#bc983e" opacity="1"/><rect x="36.8" y="35.0" width="10.5" height="5" fill="#b6943a" opacity="1"/><rect x="0.0" y="40.0" width="10.5" height="5" fill="#bc983e" opacity="1"/><rect x="10.5" y="40.0" width="10.5" height="5" fill="#ae8a30" opacity="1"/><rect x="21.0" y="40.0" width="10.5" height="5" fill="#bc983e" opacity="1"/><rect x="31.5" y="40.0" width="10.5" height="5" fill="#c4a44a" opacity="1"/><rect x="42.0" y="40.0" width="10.5" height="5" fill="#b6943a" opacity="1"/><rect x="0" y="0.0" width="45" height="0.8" fill="#eadcb0" opacity="0.75"/><rect x="0.0" y="0.0" width="0.8" height="5" fill="#eadcb0" opacity="0.75"/><rect x="10.5" y="0.0" width="0.8" height="5" fill="#eadcb0" opacity="0.75"/><rect x="21.0" y="0.0" width="0.8" height="5" fill="#eadcb0" opacity="0.75"/><rect x="31.5" y="0.0" width="0.8" height="5" fill="#eadcb0" opacity="0.75"/><rect x="42.0" y="0.0" width="0.8" height="5" fill="#eadcb0" opacity="0.75"/><rect x="0" y="5.0" width="45" height="0.8" fill="#eadcb0" opacity="0.75"/><rect x="5.2" y="5.0" width="0.8" height="5" fill="#eadcb0" opacity="0.75"/><rect x="15.8" y="5.0" width="0.8" height="5" fill="#eadcb0" opacity="0.75"/><rect x="26.2" y="5.0" width="0.8" height="5" fill="#eadcb0" opacity="0.75"/><rect x="36.8" y="5.0" width="0.8" height="5" fill="#eadcb0" opacity="0.75"/><rect x="0" y="10.0" width="45" height="0.8" fill="#eadcb0" opacity="0.75"/><rect x="0.0" y="10.0" width="0.8" height="5" fill="#eadcb0" opacity="0.75"/><rect x="10.5" y="10.0" width="0.8" height="5" fill="#eadcb0" opacity="0.75"/><rect x="21.0" y="10.0" width="0.8" height="5" fill="#eadcb0" opacity="0.75"/><rect x="31.5" y="10.0" width="0.8" height="5" fill="#eadcb0" opacity="0.75"/><rect x="42.0" y="10.0" width="0.8" height="5" fill="#eadcb0" opacity="0.75"/><rect x="0" y="15.0" width="45" height="0.8" fill="#eadcb0" opacity="0.75"/><rect x="5.2" y="15.0" width="0.8" height="5" fill="#eadcb0" opacity="0.75"/><rect x="15.8" y="15.0" width="0.8" height="5" fill="#eadcb0" opacity="0.75"/><rect x="26.2" y="15.0" width="0.8" height="5" fill="#eadcb0" opacity="0.75"/><rect x="36.8" y="15.0" width="0.8" height="5" fill="#eadcb0" opacity="0.75"/><rect x="0" y="20.0" width="45" height="0.8" fill="#eadcb0" opacity="0.75"/><rect x="0.0" y="20.0" width="0.8" height="5" fill="#eadcb0" opacity="0.75"/><rect x="10.5" y="20.0" width="0.8" height="5" fill="#eadcb0" opacity="0.75"/><rect x="21.0" y="20.0" width="0.8" height="5" fill="#eadcb0" opacity="0.75"/><rect x="31.5" y="20.0" width="0.8" height="5" fill="#eadcb0" opacity="0.75"/><rect x="42.0" y="20.0" width="0.8" height="5" fill="#eadcb0" opacity="0.75"/><rect x="0" y="25.0" width="45" height="0.8" fill="#eadcb0" opacity="0.75"/><rect x="5.2" y="25.0" width="0.8" height="5" fill="#eadcb0" opacity="0.75"/><rect x="15.8" y="25.0" width="0.8" height="5" fill="#eadcb0" opacity="0.75"/><rect x="26.2" y="25.0" width="0.8" height="5" fill="#eadcb0" opacity="0.75"/><rect x="36.8" y="25.0" width="0.8" height="5" fill="#eadcb0" opacity="0.75"/><rect x="0" y="30.0" width="45" height="0.8" fill="#eadcb0" opacity="0.75"/><rect x="0.0" y="30.0" width="0.8" height="5" fill="#eadcb0" opacity="0.75"/><rect x="10.5" y="30.0" width="0.8" height="5" fill="#eadcb0" opacity="0.75"/><rect x="21.0" y="30.0" width="0.8" height="5" fill="#eadcb0" opacity="0.75"/><rect x="31.5" y="30.0" width="0.8" height="5" fill="#eadcb0" opacity="0.75"/><rect x="42.0" y="30.0" width="0.8" height="5" fill="#eadcb0" opacity="0.75"/><rect x="0" y="35.0" width="45" height="0.8" fill="#eadcb0" opacity="0.75"/><rect x="5.2" y="35.0" width="0.8" height="5" fill="#eadcb0" opacity="0.75"/><rect x="15.8" y="35.0" width="0.8" height="5" fill="#eadcb0" opacity="0.75"/><rect x="26.2" y="35.0" width="0.8" height="5" fill="#eadcb0" opacity="0.75"/><rect x="36.8" y="35.0" width="0.8" height="5" fill="#eadcb0" opacity="0.75"/><rect x="0" y="40.0" width="45" height="0.8" fill="#eadcb0" opacity="0.75"/><rect x="0.0" y="40.0" width="0.8" height="5" fill="#eadcb0" opacity="0.75"/><rect x="10.5" y="40.0" width="0.8" height="5" fill="#eadcb0" opacity="0.75"/><rect x="21.0" y="40.0" width="0.8" height="5" fill="#eadcb0" opacity="0.75"/><rect x="31.5" y="40.0" width="0.8" height="5" fill="#eadcb0" opacity="0.75"/><rect x="42.0" y="40.0" width="0.8" height="5" fill="#eadcb0" opacity="0.75"/><rect width="45" height="45" filter="url(#nzd)" opacity="0.25"/></svg>
<div class="abs" style="left:1711px;top:349px;width:49px;height:49px;background:#fff;border:1px solid #a3a9b0"></div>
<svg class="abs" style="left:1713px;top:351px;overflow:hidden" width="45" height="45" viewBox="0 0 45 45"><rect width="45" height="45" fill="#87898c"/><rect x="0.0" y="0.0" width="8" height="6" fill="#96989a" opacity="1"/><rect x="8.0" y="0.0" width="8" height="6" fill="#a4a6a8" opacity="1"/><rect x="16.0" y="0.0" width="8" height="6" fill="#6c6e72" opacity="1"/><rect x="24.0" y="0.0" width="8" height="6" fill="#96989a" opacity="1"/><rect x="32.0" y="0.0" width="8" height="6" fill="#96989a" opacity="1"/><rect x="40.0" y="0.0" width="8" height="6" fill="#b0b2b4" opacity="1"/><rect x="-4.0" y="6.0" width="8" height="6" fill="#7a7c80" opacity="1"/><rect x="4.0" y="6.0" width="8" height="6" fill="#7a7c80" opacity="1"/><rect x="12.0" y="6.0" width="8" height="6" fill="#96989a" opacity="1"/><rect x="20.0" y="6.0" width="8" height="6" fill="#96989a" opacity="1"/><rect x="28.0" y="6.0" width="8" height="6" fill="#8c8e92" opacity="1"/><rect x="36.0" y="6.0" width="8" height="6" fill="#96989a" opacity="1"/><rect x="44.0" y="6.0" width="8" height="6" fill="#6c6e72" opacity="1"/><rect x="0.0" y="12.0" width="8" height="6" fill="#b0b2b4" opacity="1"/><rect x="8.0" y="12.0" width="8" height="6" fill="#7a7c80" opacity="1"/><rect x="16.0" y="12.0" width="8" height="6" fill="#6c6e72" opacity="1"/><rect x="24.0" y="12.0" width="8" height="6" fill="#6c6e72" opacity="1"/><rect x="32.0" y="12.0" width="8" height="6" fill="#6c6e72" opacity="1"/><rect x="40.0" y="12.0" width="8" height="6" fill="#6c6e72" opacity="1"/><rect x="-4.0" y="18.0" width="8" height="6" fill="#6c6e72" opacity="1"/><rect x="4.0" y="18.0" width="8" height="6" fill="#8c8e92" opacity="1"/><rect x="12.0" y="18.0" width="8" height="6" fill="#96989a" opacity="1"/><rect x="20.0" y="18.0" width="8" height="6" fill="#6c6e72" opacity="1"/><rect x="28.0" y="18.0" width="8" height="6" fill="#7a7c80" opacity="1"/><rect x="36.0" y="18.0" width="8" height="6" fill="#6c6e72" opacity="1"/><rect x="44.0" y="18.0" width="8" height="6" fill="#96989a" opacity="1"/><rect x="0.0" y="24.0" width="8" height="6" fill="#7a7c80" opacity="1"/><rect x="8.0" y="24.0" width="8" height="6" fill="#b0b2b4" opacity="1"/><rect x="16.0" y="24.0" width="8" height="6" fill="#a4a6a8" opacity="1"/><rect x="24.0" y="24.0" width="8" height="6" fill="#8c8e92" opacity="1"/><rect x="32.0" y="24.0" width="8" height="6" fill="#6c6e72" opacity="1"/><rect x="40.0" y="24.0" width="8" height="6" fill="#6c6e72" opacity="1"/><rect x="-4.0" y="30.0" width="8" height="6" fill="#6c6e72" opacity="1"/><rect x="4.0" y="30.0" width="8" height="6" fill="#b0b2b4" opacity="1"/><rect x="12.0" y="30.0" width="8" height="6" fill="#7a7c80" opacity="1"/><rect x="20.0" y="30.0" width="8" height="6" fill="#b0b2b4" opacity="1"/><rect x="28.0" y="30.0" width="8" height="6" fill="#a4a6a8" opacity="1"/><rect x="36.0" y="30.0" width="8" height="6" fill="#7a7c80" opacity="1"/><rect x="44.0" y="30.0" width="8" height="6" fill="#7a7c80" opacity="1"/><rect x="0.0" y="36.0" width="8" height="6" fill="#6c6e72" opacity="1"/><rect x="8.0" y="36.0" width="8" height="6" fill="#8c8e92" opacity="1"/><rect x="16.0" y="36.0" width="8" height="6" fill="#6c6e72" opacity="1"/><rect x="24.0" y="36.0" width="8" height="6" fill="#7a7c80" opacity="1"/><rect x="32.0" y="36.0" width="8" height="6" fill="#b0b2b4" opacity="1"/><rect x="40.0" y="36.0" width="8" height="6" fill="#7a7c80" opacity="1"/><rect x="-4.0" y="42.0" width="8" height="6" fill="#a4a6a8" opacity="1"/><rect x="4.0" y="42.0" width="8" height="6" fill="#96989a" opacity="1"/><rect x="12.0" y="42.0" width="8" height="6" fill="#b0b2b4" opacity="1"/><rect x="20.0" y="42.0" width="8" height="6" fill="#7a7c80" opacity="1"/><rect x="28.0" y="42.0" width="8" height="6" fill="#6c6e72" opacity="1"/><rect x="36.0" y="42.0" width="8" height="6" fill="#b0b2b4" opacity="1"/><rect x="44.0" y="42.0" width="8" height="6" fill="#8c8e92" opacity="1"/><rect x="0" y="0.0" width="45" height="0.9" fill="#202224" opacity="0.55"/><rect x="0.0" y="0.0" width="0.9" height="6" fill="#202224" opacity="0.55"/><rect x="8.0" y="0.0" width="0.9" height="6" fill="#202224" opacity="0.55"/><rect x="16.0" y="0.0" width="0.9" height="6" fill="#202224" opacity="0.55"/><rect x="24.0" y="0.0" width="0.9" height="6" fill="#202224" opacity="0.55"/><rect x="32.0" y="0.0" width="0.9" height="6" fill="#202224" opacity="0.55"/><rect x="40.0" y="0.0" width="0.9" height="6" fill="#202224" opacity="0.55"/><rect x="0" y="6.0" width="45" height="0.9" fill="#202224" opacity="0.55"/><rect x="4.0" y="6.0" width="0.9" height="6" fill="#202224" opacity="0.55"/><rect x="12.0" y="6.0" width="0.9" height="6" fill="#202224" opacity="0.55"/><rect x="20.0" y="6.0" width="0.9" height="6" fill="#202224" opacity="0.55"/><rect x="28.0" y="6.0" width="0.9" height="6" fill="#202224" opacity="0.55"/><rect x="36.0" y="6.0" width="0.9" height="6" fill="#202224" opacity="0.55"/><rect x="44.0" y="6.0" width="0.9" height="6" fill="#202224" opacity="0.55"/><rect x="0" y="12.0" width="45" height="0.9" fill="#202224" opacity="0.55"/><rect x="0.0" y="12.0" width="0.9" height="6" fill="#202224" opacity="0.55"/><rect x="8.0" y="12.0" width="0.9" height="6" fill="#202224" opacity="0.55"/><rect x="16.0" y="12.0" width="0.9" height="6" fill="#202224" opacity="0.55"/><rect x="24.0" y="12.0" width="0.9" height="6" fill="#202224" opacity="0.55"/><rect x="32.0" y="12.0" width="0.9" height="6" fill="#202224" opacity="0.55"/><rect x="40.0" y="12.0" width="0.9" height="6" fill="#202224" opacity="0.55"/><rect x="0" y="18.0" width="45" height="0.9" fill="#202224" opacity="0.55"/><rect x="4.0" y="18.0" width="0.9" height="6" fill="#202224" opacity="0.55"/><rect x="12.0" y="18.0" width="0.9" height="6" fill="#202224" opacity="0.55"/><rect x="20.0" y="18.0" width="0.9" height="6" fill="#202224" opacity="0.55"/><rect x="28.0" y="18.0" width="0.9" height="6" fill="#202224" opacity="0.55"/><rect x="36.0" y="18.0" width="0.9" height="6" fill="#202224" opacity="0.55"/><rect x="44.0" y="18.0" width="0.9" height="6" fill="#202224" opacity="0.55"/><rect x="0" y="24.0" width="45" height="0.9" fill="#202224" opacity="0.55"/><rect x="0.0" y="24.0" width="0.9" height="6" fill="#202224" opacity="0.55"/><rect x="8.0" y="24.0" width="0.9" height="6" fill="#202224" opacity="0.55"/><rect x="16.0" y="24.0" width="0.9" height="6" fill="#202224" opacity="0.55"/><rect x="24.0" y="24.0" width="0.9" height="6" fill="#202224" opacity="0.55"/><rect x="32.0" y="24.0" width="0.9" height="6" fill="#202224" opacity="0.55"/><rect x="40.0" y="24.0" width="0.9" height="6" fill="#202224" opacity="0.55"/><rect x="0" y="30.0" width="45" height="0.9" fill="#202224" opacity="0.55"/><rect x="4.0" y="30.0" width="0.9" height="6" fill="#202224" opacity="0.55"/><rect x="12.0" y="30.0" width="0.9" height="6" fill="#202224" opacity="0.55"/><rect x="20.0" y="30.0" width="0.9" height="6" fill="#202224" opacity="0.55"/><rect x="28.0" y="30.0" width="0.9" height="6" fill="#202224" opacity="0.55"/><rect x="36.0" y="30.0" width="0.9" height="6" fill="#202224" opacity="0.55"/><rect x="44.0" y="30.0" width="0.9" height="6" fill="#202224" opacity="0.55"/><rect x="0" y="36.0" width="45" height="0.9" fill="#202224" opacity="0.55"/><rect x="0.0" y="36.0" width="0.9" height="6" fill="#202224" opacity="0.55"/><rect x="8.0" y="36.0" width="0.9" height="6" fill="#202224" opacity="0.55"/><rect x="16.0" y="36.0" width="0.9" height="6" fill="#202224" opacity="0.55"/><rect x="24.0" y="36.0" width="0.9" height="6" fill="#202224" opacity="0.55"/><rect x="32.0" y="36.0" width="0.9" height="6" fill="#202224" opacity="0.55"/><rect x="40.0" y="36.0" width="0.9" height="6" fill="#202224" opacity="0.55"/><rect x="0" y="42.0" width="45" height="0.9" fill="#202224" opacity="0.55"/><rect x="4.0" y="42.0" width="0.9" height="6" fill="#202224" opacity="0.55"/><rect x="12.0" y="42.0" width="0.9" height="6" fill="#202224" opacity="0.55"/><rect x="20.0" y="42.0" width="0.9" height="6" fill="#202224" opacity="0.55"/><rect x="28.0" y="42.0" width="0.9" height="6" fill="#202224" opacity="0.55"/><rect x="36.0" y="42.0" width="0.9" height="6" fill="#202224" opacity="0.55"/><rect x="44.0" y="42.0" width="0.9" height="6" fill="#202224" opacity="0.55"/><rect x="0" y="1.0" width="45" height="1" fill="#e4e4e4" opacity="0.5"/><rect x="0" y="7.0" width="45" height="1" fill="#e4e4e4" opacity="0.5"/><rect x="0" y="13.0" width="45" height="1" fill="#e4e4e4" opacity="0.5"/><rect x="0" y="19.0" width="45" height="1" fill="#e4e4e4" opacity="0.5"/><rect x="0" y="25.0" width="45" height="1" fill="#e4e4e4" opacity="0.5"/><rect x="0" y="31.0" width="45" height="1" fill="#e4e4e4" opacity="0.5"/><rect x="0" y="37.0" width="45" height="1" fill="#e4e4e4" opacity="0.5"/><rect x="0" y="43.0" width="45" height="1" fill="#e4e4e4" opacity="0.5"/><rect width="45" height="45" filter="url(#nzl)" opacity="0.3"/></svg>
<div class="abs" style="left:1763px;top:349px;width:49px;height:49px;background:#fff;border:1px solid #a3a9b0"></div>
<svg class="abs" style="left:1765px;top:351px;overflow:hidden" width="45" height="45" viewBox="0 0 45 45"><rect width="45" height="45" fill="#d5d0c5"/><rect x="0" y="0.0" width="45" height="0.7" fill="#b4aea2" opacity="0.9"/><rect x="0.0" y="0.0" width="0.7" height="9" fill="#b4aea2" opacity="0.9"/><rect x="15.0" y="0.0" width="0.7" height="9" fill="#b4aea2" opacity="0.9"/><rect x="30.0" y="0.0" width="0.7" height="9" fill="#b4aea2" opacity="0.9"/><rect x="0" y="9.0" width="45" height="0.7" fill="#b4aea2" opacity="0.9"/><rect x="7.5" y="9.0" width="0.7" height="9" fill="#b4aea2" opacity="0.9"/><rect x="22.5" y="9.0" width="0.7" height="9" fill="#b4aea2" opacity="0.9"/><rect x="37.5" y="9.0" width="0.7" height="9" fill="#b4aea2" opacity="0.9"/><rect x="0" y="18.0" width="45" height="0.7" fill="#b4aea2" opacity="0.9"/><rect x="0.0" y="18.0" width="0.7" height="9" fill="#b4aea2" opacity="0.9"/><rect x="15.0" y="18.0" width="0.7" height="9" fill="#b4aea2" opacity="0.9"/><rect x="30.0" y="18.0" width="0.7" height="9" fill="#b4aea2" opacity="0.9"/><rect x="0" y="27.0" width="45" height="0.7" fill="#b4aea2" opacity="0.9"/><rect x="7.5" y="27.0" width="0.7" height="9" fill="#b4aea2" opacity="0.9"/><rect x="22.5" y="27.0" width="0.7" height="9" fill="#b4aea2" opacity="0.9"/><rect x="37.5" y="27.0" width="0.7" height="9" fill="#b4aea2" opacity="0.9"/><rect x="0" y="36.0" width="45" height="0.7" fill="#b4aea2" opacity="0.9"/><rect x="0.0" y="36.0" width="0.7" height="9" fill="#b4aea2" opacity="0.9"/><rect x="15.0" y="36.0" width="0.7" height="9" fill="#b4aea2" opacity="0.9"/><rect x="30.0" y="36.0" width="0.7" height="9" fill="#b4aea2" opacity="0.9"/><rect width="45" height="45" filter="url(#nzd)" opacity="0.12"/></svg>
<div class="abs" style="left:1815px;top:349px;width:49px;height:49px;background:#fff;border:1px solid #a3a9b0"></div>
<svg class="abs" style="left:1817px;top:351px;overflow:hidden" width="45" height="45" viewBox="0 0 45 45"><rect width="45" height="45" fill="#b98d60"/><rect x="0" y="14.5" width="45" height="1.3" fill="#66452a" opacity="1"/><rect x="0" y="29.5" width="45" height="1.3" fill="#66452a" opacity="1"/><rect x="0" y="15.8" width="45" height="1" fill="#cda274" opacity="0.7"/><rect x="0" y="30.8" width="45" height="1" fill="#cda274" opacity="0.7"/><rect x="0" y="0.0" width="45" height="1" fill="#7a5636" opacity="1"/><rect width="45" height="45" filter="url(#nzs)" opacity="0.15"/></svg>
<div class="abs" style="left:1607px;top:401px;width:49px;height:49px;background:#fff;border:1px solid #a3a9b0"></div>
<svg class="abs" style="left:1609px;top:403px;overflow:hidden" width="45" height="45" viewBox="0 0 45 45"><rect width="45" height="45" fill="#d9d9d9"/><rect x="0" y="10.5" width="45" height="1" fill="#a4a4a4" opacity="1"/><rect x="0" y="21.5" width="45" height="1" fill="#a4a4a4" opacity="1"/><rect x="0" y="32.5" width="45" height="1" fill="#a4a4a4" opacity="1"/><rect x="0" y="11.5" width="45" height="1" fill="#ececec" opacity="1"/><rect x="0" y="22.5" width="45" height="1" fill="#ececec" opacity="1"/><rect x="0" y="33.5" width="45" height="1" fill="#ececec" opacity="1"/></svg>
<div class="abs" style="left:1659px;top:401px;width:49px;height:49px;background:#fff;border:1px solid #a3a9b0"></div>
<svg class="abs" style="left:1661px;top:403px;overflow:hidden" width="45" height="45" viewBox="0 0 45 45"><rect width="45" height="45" fill="#d5d5d5"/><rect width="45" height="45" filter="url(#nzs)" opacity="0.1"/><rect width="45" height="45" filter="url(#nzl)" opacity="0.1"/></svg>
<div class="abs" style="left:1711px;top:401px;width:49px;height:49px;background:#fff;border:1px solid #a3a9b0"></div>
<svg class="abs" style="left:1713px;top:403px;overflow:hidden" width="45" height="45" viewBox="0 0 45 45"><rect width="45" height="45" fill="#6a6458"/><rect x="0.0" y="0.0" width="6" height="45" fill="#585448" opacity="1"/><rect x="6.0" y="0.0" width="6" height="45" fill="#585448" opacity="1"/><rect x="12.0" y="0.0" width="6" height="45" fill="#747062" opacity="1"/><rect x="18.0" y="0.0" width="6" height="45" fill="#747062" opacity="1"/><rect x="24.0" y="0.0" width="6" height="45" fill="#747062" opacity="1"/><rect x="30.0" y="0.0" width="6" height="45" fill="#747062" opacity="1"/><rect x="36.0" y="0.0" width="6" height="45" fill="#747062" opacity="1"/><rect x="42.0" y="0.0" width="6" height="45" fill="#747062" opacity="1"/><rect x="0.0" y="0" width="0.8" height="45" fill="#3c372e" opacity="1"/><rect x="6.0" y="0" width="0.8" height="45" fill="#3c372e" opacity="1"/><rect x="12.0" y="0" width="0.8" height="45" fill="#3c372e" opacity="1"/><rect x="18.0" y="0" width="0.8" height="45" fill="#3c372e" opacity="1"/><rect x="24.0" y="0" width="0.8" height="45" fill="#3c372e" opacity="1"/><rect x="30.0" y="0" width="0.8" height="45" fill="#3c372e" opacity="1"/><rect x="36.0" y="0" width="0.8" height="45" fill="#3c372e" opacity="1"/><rect x="42.0" y="0" width="0.8" height="45" fill="#3c372e" opacity="1"/><rect width="45" height="45" filter="url(#nzd)" opacity="0.3"/><rect width="45" height="45" filter="url(#nzs)" opacity="0.2"/></svg>
<div class="abs" style="left:1763px;top:401px;width:49px;height:49px;background:#fff;border:1px solid #a3a9b0"></div>
<svg class="abs" style="left:1765px;top:403px;overflow:hidden" width="45" height="45" viewBox="0 0 45 45"><rect width="45" height="45" fill="#acacaa"/><rect x="0.0" y="0.0" width="12" height="7.5" fill="#a6a6a4" opacity="1"/><rect x="12.0" y="0.0" width="12" height="7.5" fill="#b2b2b0" opacity="1"/><rect x="24.0" y="0.0" width="12" height="7.5" fill="#a0a09e" opacity="1"/><rect x="36.0" y="0.0" width="12" height="7.5" fill="#a0a09e" opacity="1"/><rect x="-6.0" y="7.5" width="12" height="7.5" fill="#a0a09e" opacity="1"/><rect x="6.0" y="7.5" width="12" height="7.5" fill="#a6a6a4" opacity="1"/><rect x="18.0" y="7.5" width="12" height="7.5" fill="#b8b8b6" opacity="1"/><rect x="30.0" y="7.5" width="12" height="7.5" fill="#a0a09e" opacity="1"/><rect x="42.0" y="7.5" width="12" height="7.5" fill="#b8b8b6" opacity="1"/><rect x="0.0" y="15.0" width="12" height="7.5" fill="#b8b8b6" opacity="1"/><rect x="12.0" y="15.0" width="12" height="7.5" fill="#b8b8b6" opacity="1"/><rect x="24.0" y="15.0" width="12" height="7.5" fill="#a6a6a4" opacity="1"/><rect x="36.0" y="15.0" width="12" height="7.5" fill="#a0a09e" opacity="1"/><rect x="-6.0" y="22.5" width="12" height="7.5" fill="#b2b2b0" opacity="1"/><rect x="6.0" y="22.5" width="12" height="7.5" fill="#a0a09e" opacity="1"/><rect x="18.0" y="22.5" width="12" height="7.5" fill="#a0a09e" opacity="1"/><rect x="30.0" y="22.5" width="12" height="7.5" fill="#a0a09e" opacity="1"/><rect x="42.0" y="22.5" width="12" height="7.5" fill="#a0a09e" opacity="1"/><rect x="0.0" y="30.0" width="12" height="7.5" fill="#b2b2b0" opacity="1"/><rect x="12.0" y="30.0" width="12" height="7.5" fill="#b2b2b0" opacity="1"/><rect x="24.0" y="30.0" width="12" height="7.5" fill="#a0a09e" opacity="1"/><rect x="36.0" y="30.0" width="12" height="7.5" fill="#b2b2b0" opacity="1"/><rect x="-6.0" y="37.5" width="12" height="7.5" fill="#a6a6a4" opacity="1"/><rect x="6.0" y="37.5" width="12" height="7.5" fill="#a6a6a4" opacity="1"/><rect x="18.0" y="37.5" width="12" height="7.5" fill="#a6a6a4" opacity="1"/><rect x="30.0" y="37.5" width="12" height="7.5" fill="#a0a09e" opacity="1"/><rect x="42.0" y="37.5" width="12" height="7.5" fill="#a6a6a4" opacity="1"/><rect x="0" y="0.0" width="45" height="0.7" fill="#8a8a88" opacity="0.9"/><rect x="0.0" y="0.0" width="0.7" height="7.5" fill="#8a8a88" opacity="0.9"/><rect x="12.0" y="0.0" width="0.7" height="7.5" fill="#8a8a88" opacity="0.9"/><rect x="24.0" y="0.0" width="0.7" height="7.5" fill="#8a8a88" opacity="0.9"/><rect x="36.0" y="0.0" width="0.7" height="7.5" fill="#8a8a88" opacity="0.9"/><rect x="0" y="7.5" width="45" height="0.7" fill="#8a8a88" opacity="0.9"/><rect x="6.0" y="7.5" width="0.7" height="7.5" fill="#8a8a88" opacity="0.9"/><rect x="18.0" y="7.5" width="0.7" height="7.5" fill="#8a8a88" opacity="0.9"/><rect x="30.0" y="7.5" width="0.7" height="7.5" fill="#8a8a88" opacity="0.9"/><rect x="42.0" y="7.5" width="0.7" height="7.5" fill="#8a8a88" opacity="0.9"/><rect x="0" y="15.0" width="45" height="0.7" fill="#8a8a88" opacity="0.9"/><rect x="0.0" y="15.0" width="0.7" height="7.5" fill="#8a8a88" opacity="0.9"/><rect x="12.0" y="15.0" width="0.7" height="7.5" fill="#8a8a88" opacity="0.9"/><rect x="24.0" y="15.0" width="0.7" height="7.5" fill="#8a8a88" opacity="0.9"/><rect x="36.0" y="15.0" width="0.7" height="7.5" fill="#8a8a88" opacity="0.9"/><rect x="0" y="22.5" width="45" height="0.7" fill="#8a8a88" opacity="0.9"/><rect x="6.0" y="22.5" width="0.7" height="7.5" fill="#8a8a88" opacity="0.9"/><rect x="18.0" y="22.5" width="0.7" height="7.5" fill="#8a8a88" opacity="0.9"/><rect x="30.0" y="22.5" width="0.7" height="7.5" fill="#8a8a88" opacity="0.9"/><rect x="42.0" y="22.5" width="0.7" height="7.5" fill="#8a8a88" opacity="0.9"/><rect x="0" y="30.0" width="45" height="0.7" fill="#8a8a88" opacity="0.9"/><rect x="0.0" y="30.0" width="0.7" height="7.5" fill="#8a8a88" opacity="0.9"/><rect x="12.0" y="30.0" width="0.7" height="7.5" fill="#8a8a88" opacity="0.9"/><rect x="24.0" y="30.0" width="0.7" height="7.5" fill="#8a8a88" opacity="0.9"/><rect x="36.0" y="30.0" width="0.7" height="7.5" fill="#8a8a88" opacity="0.9"/><rect x="0" y="37.5" width="45" height="0.7" fill="#8a8a88" opacity="0.9"/><rect x="6.0" y="37.5" width="0.7" height="7.5" fill="#8a8a88" opacity="0.9"/><rect x="18.0" y="37.5" width="0.7" height="7.5" fill="#8a8a88" opacity="0.9"/><rect x="30.0" y="37.5" width="0.7" height="7.5" fill="#8a8a88" opacity="0.9"/><rect x="42.0" y="37.5" width="0.7" height="7.5" fill="#8a8a88" opacity="0.9"/></svg>
<div class="abs" style="left:1815px;top:401px;width:49px;height:49px;background:#fff;border:1px solid #a3a9b0"></div>
<svg class="abs" style="left:1817px;top:403px;overflow:hidden" width="45" height="45" viewBox="0 0 45 45"><rect width="45" height="45" fill="#b6b6b6"/><rect width="45" height="45" filter="url(#nzd)" opacity="0.2"/><rect width="45" height="45" filter="url(#nzl)" opacity="0.35"/><rect x="0" y="0" width="45" height="13.500" fill="#7c4a50"/><rect x="0" y="0" width="45" height="13.500" filter="url(#nzd)" opacity=".45"/><rect x="22" y="0" width="1" height="13.500" fill="#3c2226"/><rect x="0" y="13" width="45" height=".8" fill="#5a3438"/></svg>
<div class="abs" style="left:1607px;top:453px;width:49px;height:49px;background:#fff;border:1px solid #a3a9b0"></div>
<svg class="abs" style="left:1609px;top:455px;overflow:hidden" width="45" height="45" viewBox="0 0 45 45"><rect width="45" height="45" fill="#d8805a"/><rect x="0.0" y="0.0" width="6.5" height="45" fill="#cc7550" opacity="1"/><rect x="6.5" y="0.0" width="6.5" height="45" fill="#dc8560" opacity="1"/><rect x="13.0" y="0.0" width="6.5" height="45" fill="#dc8560" opacity="1"/><rect x="19.5" y="0.0" width="6.5" height="45" fill="#cc7550" opacity="1"/><rect x="26.0" y="0.0" width="6.5" height="45" fill="#dc8560" opacity="1"/><rect x="32.5" y="0.0" width="6.5" height="45" fill="#e08a62" opacity="1"/><rect x="39.0" y="0.0" width="6.5" height="45" fill="#dc8560" opacity="1"/><rect x="0.0" y="0" width="0.9" height="45" fill="#b35e3c" opacity="1"/><rect x="6.5" y="0" width="0.9" height="45" fill="#b35e3c" opacity="1"/><rect x="13.0" y="0" width="0.9" height="45" fill="#b35e3c" opacity="1"/><rect x="19.5" y="0" width="0.9" height="45" fill="#b35e3c" opacity="1"/><rect x="26.0" y="0" width="0.9" height="45" fill="#b35e3c" opacity="1"/><rect x="32.5" y="0" width="0.9" height="45" fill="#b35e3c" opacity="1"/><rect x="39.0" y="0" width="0.9" height="45" fill="#b35e3c" opacity="1"/><rect x="45.5" y="0" width="0.9" height="45" fill="#b35e3c" opacity="1"/><rect x="1.0" y="0" width="0.8" height="45" fill="#e89872" opacity="0.6"/><rect x="7.5" y="0" width="0.8" height="45" fill="#e89872" opacity="0.6"/><rect x="14.0" y="0" width="0.8" height="45" fill="#e89872" opacity="0.6"/><rect x="20.5" y="0" width="0.8" height="45" fill="#e89872" opacity="0.6"/><rect x="27.0" y="0" width="0.8" height="45" fill="#e89872" opacity="0.6"/><rect x="33.5" y="0" width="0.8" height="45" fill="#e89872" opacity="0.6"/><rect x="40.0" y="0" width="0.8" height="45" fill="#e89872" opacity="0.6"/><rect x="46.5" y="0" width="0.8" height="45" fill="#e89872" opacity="0.6"/><rect width="45" height="45" filter="url(#nzs)" opacity="0.12"/></svg>
<div class="abs" style="left:1659px;top:453px;width:49px;height:49px;background:#fff;border:1px solid #a3a9b0"></div>
<svg class="abs" style="left:1661px;top:455px;overflow:hidden" width="45" height="45" viewBox="0 0 45 45"><rect width="45" height="45" fill="#807f7a"/><rect width="45" height="45" filter="url(#nzd)" opacity="0.42"/><rect width="45" height="45" filter="url(#nzl)" opacity="0.3"/><rect x="22" y="0" width="1.200" height="45" fill="#3a3a38"/><rect x="0" y="22" width="45" height="1.200" fill="#3a3a38"/></svg>
<div class="abs" style="left:1711px;top:453px;width:49px;height:49px;background:#fff;border:1px solid #a3a9b0"></div>
<svg class="abs" style="left:1713px;top:455px;overflow:hidden" width="45" height="45" viewBox="0 0 45 45"><rect width="45" height="45" fill="#e5dcc8"/><rect x="0.0" y="0.0" width="6" height="45" fill="#dfd5be" opacity="1"/><rect x="6.0" y="0.0" width="6" height="45" fill="#e8e0ce" opacity="1"/><rect x="12.0" y="0.0" width="6" height="45" fill="#e2d8c2" opacity="1"/><rect x="18.0" y="0.0" width="6" height="45" fill="#ece5d6" opacity="1"/><rect x="24.0" y="0.0" width="6" height="45" fill="#dfd5be" opacity="1"/><rect x="30.0" y="0.0" width="6" height="45" fill="#dfd5be" opacity="1"/><rect x="36.0" y="0.0" width="6" height="45" fill="#e2d8c2" opacity="1"/><rect x="42.0" y="0.0" width="6" height="45" fill="#e2d8c2" opacity="1"/><rect x="2.0" y="0" width="0.8" height="45" fill="#c9bc9e" opacity="1"/><rect x="8.0" y="0" width="0.8" height="45" fill="#c9bc9e" opacity="1"/><rect x="14.0" y="0" width="0.8" height="45" fill="#c9bc9e" opacity="1"/><rect x="20.0" y="0" width="0.8" height="45" fill="#c9bc9e" opacity="1"/><rect x="26.0" y="0" width="0.8" height="45" fill="#c9bc9e" opacity="1"/><rect x="32.0" y="0" width="0.8" height="45" fill="#c9bc9e" opacity="1"/><rect x="38.0" y="0" width="0.8" height="45" fill="#c9bc9e" opacity="1"/><rect x="44.0" y="0" width="0.8" height="45" fill="#c9bc9e" opacity="1"/><rect width="45" height="45" filter="url(#nzs)" opacity="0.22"/><rect width="45" height="45" filter="url(#nzd)" opacity="0.1"/></svg>
<div class="abs" style="left:1763px;top:453px;width:49px;height:49px;background:#fff;border:1px solid #a3a9b0"></div>
<svg class="abs" style="left:1765px;top:455px;overflow:hidden" width="45" height="45" viewBox="0 0 45 45"><rect width="45" height="45" fill="#b2ac8a"/><rect x="0.0" y="0.0" width="7" height="3" fill="#b8b290" opacity="1"/><rect x="7.0" y="0.0" width="7" height="3" fill="#a8a27e" opacity="1"/><rect x="14.0" y="0.0" width="7" height="3" fill="#9a9472" opacity="1"/><rect x="21.0" y="0.0" width="7" height="3" fill="#a8a27e" opacity="1"/><rect x="28.0" y="0.0" width="7" height="3" fill="#9a9472" opacity="1"/><rect x="35.0" y="0.0" width="7" height="3" fill="#beb896" opacity="1"/><rect x="42.0" y="0.0" width="7" height="3" fill="#cac4a2" opacity="1"/><rect x="-3.5" y="3.0" width="7" height="3" fill="#aea886" opacity="1"/><rect x="3.5" y="3.0" width="7" height="3" fill="#9a9472" opacity="1"/><rect x="10.5" y="3.0" width="7" height="3" fill="#aea886" opacity="1"/><rect x="17.5" y="3.0" width="7" height="3" fill="#9a9472" opacity="1"/><rect x="24.5" y="3.0" width="7" height="3" fill="#beb896" opacity="1"/><rect x="31.5" y="3.0" width="7" height="3" fill="#9a9472" opacity="1"/><rect x="38.5" y="3.0" width="7" height="3" fill="#aea886" opacity="1"/><rect x="0.0" y="6.0" width="7" height="3" fill="#a8a27e" opacity="1"/><rect x="7.0" y="6.0" width="7" height="3" fill="#aea886" opacity="1"/><rect x="14.0" y="6.0" width="7" height="3" fill="#cac4a2" opacity="1"/><rect x="21.0" y="6.0" width="7" height="3" fill="#aea886" opacity="1"/><rect x="28.0" y="6.0" width="7" height="3" fill="#aea886" opacity="1"/><rect x="35.0" y="6.0" width="7" height="3" fill="#a8a27e" opacity="1"/><rect x="42.0" y="6.0" width="7" height="3" fill="#aea886" opacity="1"/><rect x="-3.5" y="9.0" width="7" height="3" fill="#aea886" opacity="1"/><rect x="3.5" y="9.0" width="7" height="3" fill="#a8a27e" opacity="1"/><rect x="10.5" y="9.0" width="7" height="3" fill="#9a9472" opacity="1"/><rect x="17.5" y="9.0" width="7" height="3" fill="#9a9472" opacity="1"/><rect x="24.5" y="9.0" width="7" height="3" fill="#beb896" opacity="1"/><rect x="31.5" y="9.0" width="7" height="3" fill="#a8a27e" opacity="1"/><rect x="38.5" y="9.0" width="7" height="3" fill="#beb896" opacity="1"/><rect x="0.0" y="12.0" width="7" height="3" fill="#a8a27e" opacity="1"/><rect x="7.0" y="12.0" width="7" height="3" fill="#9a9472" opacity="1"/><rect x="14.0" y="12.0" width="7" height="3" fill="#cac4a2" opacity="1"/><rect x="21.0" y="12.0" width="7" height="3" fill="#cac4a2" opacity="1"/><rect x="28.0" y="12.0" width="7" height="3" fill="#b8b290" opacity="1"/><rect x="35.0" y="12.0" width="7" height="3" fill="#a8a27e" opacity="1"/><rect x="42.0" y="12.0" width="7" height="3" fill="#a8a27e" opacity="1"/><rect x="-3.5" y="15.0" width="7" height="3" fill="#cac4a2" opacity="1"/><rect x="3.5" y="15.0" width="7" height="3" fill="#a8a27e" opacity="1"/><rect x="10.5" y="15.0" width="7" height="3" fill="#a8a27e" opacity="1"/><rect x="17.5" y="15.0" width="7" height="3" fill="#9a9472" opacity="1"/><rect x="24.5" y="15.0" width="7" height="3" fill="#b8b290" opacity="1"/><rect x="31.5" y="15.0" width="7" height="3" fill="#cac4a2" opacity="1"/><rect x="38.5" y="15.0" width="7" height="3" fill="#cac4a2" opacity="1"/><rect x="0.0" y="18.0" width="7" height="3" fill="#cac4a2" opacity="1"/><rect x="7.0" y="18.0" width="7" height="3" fill="#b8b290" opacity="1"/><rect x="14.0" y="18.0" width="7" height="3" fill="#aea886" opacity="1"/><rect x="21.0" y="18.0" width="7" height="3" fill="#9a9472" opacity="1"/><rect x="28.0" y="18.0" width="7" height="3" fill="#9a9472" opacity="1"/><rect x="35.0" y="18.0" width="7" height="3" fill="#beb896" opacity="1"/><rect x="42.0" y="18.0" width="7" height="3" fill="#b8b290" opacity="1"/><rect x="-3.5" y="21.0" width="7" height="3" fill="#cac4a2" opacity="1"/><rect x="3.5" y="21.0" width="7" height="3" fill="#beb896" opacity="1"/><rect x="10.5" y="21.0" width="7" height="3" fill="#9a9472" opacity="1"/><rect x="17.5" y="21.0" width="7" height="3" fill="#9a9472" opacity="1"/><rect x="24.5" y="21.0" width="7" height="3" fill="#b8b290" opacity="1"/><rect x="31.5" y="21.0" width="7" height="3" fill="#a8a27e" opacity="1"/><rect x="38.5" y="21.0" width="7" height="3" fill="#beb896" opacity="1"/><rect x="0.0" y="24.0" width="7" height="3" fill="#cac4a2" opacity="1"/><rect x="7.0" y="24.0" width="7" height="3" fill="#beb896" opacity="1"/><rect x="14.0" y="24.0" width="7" height="3" fill="#beb896" opacity="1"/><rect x="21.0" y="24.0" width="7" height="3" fill="#beb896" opacity="1"/><rect x="28.0" y="24.0" width="7" height="3" fill="#b8b290" opacity="1"/><rect x="35.0" y="24.0" width="7" height="3" fill="#cac4a2" opacity="1"/><rect x="42.0" y="24.0" width="7" height="3" fill="#a8a27e" opacity="1"/><rect x="-3.5" y="27.0" width="7" height="3" fill="#9a9472" opacity="1"/><rect x="3.5" y="27.0" width="7" height="3" fill="#b8b290" opacity="1"/><rect x="10.5" y="27.0" width="7" height="3" fill="#cac4a2" opacity="1"/><rect x="17.5" y="27.0" width="7" height="3" fill="#a8a27e" opacity="1"/><rect x="24.5" y="27.0" width="7" height="3" fill="#cac4a2" opacity="1"/><rect x="31.5" y="27.0" width="7" height="3" fill="#cac4a2" opacity="1"/><rect x="38.5" y="27.0" width="7" height="3" fill="#9a9472" opacity="1"/><rect x="0.0" y="30.0" width="7" height="3" fill="#a8a27e" opacity="1"/><rect x="7.0" y="30.0" width="7" height="3" fill="#9a9472" opacity="1"/><rect x="14.0" y="30.0" width="7" height="3" fill="#cac4a2" opacity="1"/><rect x="21.0" y="30.0" width="7" height="3" fill="#9a9472" opacity="1"/><rect x="28.0" y="30.0" width="7" height="3" fill="#cac4a2" opacity="1"/><rect x="35.0" y="30.0" width="7" height="3" fill="#aea886" opacity="1"/><rect x="42.0" y="30.0" width="7" height="3" fill="#cac4a2" opacity="1"/><rect x="-3.5" y="33.0" width="7" height="3" fill="#9a9472" opacity="1"/><rect x="3.5" y="33.0" width="7" height="3" fill="#beb896" opacity="1"/><rect x="10.5" y="33.0" width="7" height="3" fill="#a8a27e" opacity="1"/><rect x="17.5" y="33.0" width="7" height="3" fill="#beb896" opacity="1"/><rect x="24.5" y="33.0" width="7" height="3" fill="#a8a27e" opacity="1"/><rect x="31.5" y="33.0" width="7" height="3" fill="#a8a27e" opacity="1"/><rect x="38.5" y="33.0" width="7" height="3" fill="#cac4a2" opacity="1"/><rect x="0.0" y="36.0" width="7" height="3" fill="#cac4a2" opacity="1"/><rect x="7.0" y="36.0" width="7" height="3" fill="#cac4a2" opacity="1"/><rect x="14.0" y="36.0" width="7" height="3" fill="#a8a27e" opacity="1"/><rect x="21.0" y="36.0" width="7" height="3" fill="#b8b290" opacity="1"/><rect x="28.0" y="36.0" width="7" height="3" fill="#b8b290" opacity="1"/><rect x="35.0" y="36.0" width="7" height="3" fill="#b8b290" opacity="1"/><rect x="42.0" y="36.0" width="7" height="3" fill="#aea886" opacity="1"/><rect x="-3.5" y="39.0" width="7" height="3" fill="#beb896" opacity="1"/><rect x="3.5" y="39.0" width="7" height="3" fill="#cac4a2" opacity="1"/><rect x="10.5" y="39.0" width="7" height="3" fill="#aea886" opacity="1"/><rect x="17.5" y="39.0" width="7" height="3" fill="#cac4a2" opacity="1"/><rect x="24.5" y="39.0" width="7" height="3" fill="#cac4a2" opacity="1"/><rect x="31.5" y="39.0" width="7" height="3" fill="#aea886" opacity="1"/><rect x="38.5" y="39.0" width="7" height="3" fill="#b8b290" opacity="1"/><rect x="0.0" y="42.0" width="7" height="3" fill="#beb896" opacity="1"/><rect x="7.0" y="42.0" width="7" height="3" fill="#cac4a2" opacity="1"/><rect x="14.0" y="42.0" width="7" height="3" fill="#cac4a2" opacity="1"/><rect x="21.0" y="42.0" width="7" height="3" fill="#aea886" opacity="1"/><rect x="28.0" y="42.0" width="7" height="3" fill="#aea886" opacity="1"/><rect x="35.0" y="42.0" width="7" height="3" fill="#b8b290" opacity="1"/><rect x="42.0" y="42.0" width="7" height="3" fill="#a8a27e" opacity="1"/><rect x="0" y="0.0" width="45" height="0.5" fill="#5c5a40" opacity="0.5"/><rect x="0.5" y="0.0" width="0.5" height="3" fill="#5c5a40" opacity="0.5"/><rect x="8.4" y="0.0" width="0.5" height="3" fill="#5c5a40" opacity="0.5"/><rect x="15.4" y="0.0" width="0.5" height="3" fill="#5c5a40" opacity="0.5"/><rect x="22.5" y="0.0" width="0.5" height="3" fill="#5c5a40" opacity="0.5"/><rect x="29.2" y="0.0" width="0.5" height="3" fill="#5c5a40" opacity="0.5"/><rect x="37.7" y="0.0" width="0.5" height="3" fill="#5c5a40" opacity="0.5"/><rect x="44.0" y="0.0" width="0.5" height="3" fill="#5c5a40" opacity="0.5"/><rect x="0" y="3.0" width="45" height="0.5" fill="#5c5a40" opacity="0.5"/><rect x="2.8" y="3.0" width="0.5" height="3" fill="#5c5a40" opacity="0.5"/><rect x="9.1" y="3.0" width="0.5" height="3" fill="#5c5a40" opacity="0.5"/><rect x="15.5" y="3.0" width="0.5" height="3" fill="#5c5a40" opacity="0.5"/><rect x="21.9" y="3.0" width="0.5" height="3" fill="#5c5a40" opacity="0.5"/><rect x="27.7" y="3.0" width="0.5" height="3" fill="#5c5a40" opacity="0.5"/><rect x="34.1" y="3.0" width="0.5" height="3" fill="#5c5a40" opacity="0.5"/><rect x="40.6" y="3.0" width="0.5" height="3" fill="#5c5a40" opacity="0.5"/><rect x="0" y="6.0" width="45" height="0.5" fill="#5c5a40" opacity="0.5"/><rect x="-0.9" y="6.0" width="0.5" height="3" fill="#5c5a40" opacity="0.5"/><rect x="4.8" y="6.0" width="0.5" height="3" fill="#5c5a40" opacity="0.5"/><rect x="10.9" y="6.0" width="0.5" height="3" fill="#5c5a40" opacity="0.5"/><rect x="18.1" y="6.0" width="0.5" height="3" fill="#5c5a40" opacity="0.5"/><rect x="24.7" y="6.0" width="0.5" height="3" fill="#5c5a40" opacity="0.5"/><rect x="32.4" y="6.0" width="0.5" height="3" fill="#5c5a40" opacity="0.5"/><rect x="40.3" y="6.0" width="0.5" height="3" fill="#5c5a40" opacity="0.5"/><rect x="0" y="9.0" width="45" height="0.5" fill="#5c5a40" opacity="0.5"/><rect x="2.3" y="9.0" width="0.5" height="3" fill="#5c5a40" opacity="0.5"/><rect x="10.0" y="9.0" width="0.5" height="3" fill="#5c5a40" opacity="0.5"/><rect x="17.7" y="9.0" width="0.5" height="3" fill="#5c5a40" opacity="0.5"/><rect x="24.4" y="9.0" width="0.5" height="3" fill="#5c5a40" opacity="0.5"/><rect x="31.9" y="9.0" width="0.5" height="3" fill="#5c5a40" opacity="0.5"/><rect x="38.3" y="9.0" width="0.5" height="3" fill="#5c5a40" opacity="0.5"/><rect x="0" y="12.0" width="45" height="0.5" fill="#5c5a40" opacity="0.5"/><rect x="1.0" y="12.0" width="0.5" height="3" fill="#5c5a40" opacity="0.5"/><rect x="8.9" y="12.0" width="0.5" height="3" fill="#5c5a40" opacity="0.5"/><rect x="17.2" y="12.0" width="0.5" height="3" fill="#5c5a40" opacity="0.5"/><rect x="23.4" y="12.0" width="0.5" height="3" fill="#5c5a40" opacity="0.5"/><rect x="30.6" y="12.0" width="0.5" height="3" fill="#5c5a40" opacity="0.5"/><rect x="38.3" y="12.0" width="0.5" height="3" fill="#5c5a40" opacity="0.5"/><rect x="0" y="15.0" width="45" height="0.5" fill="#5c5a40" opacity="0.5"/><rect x="3.2" y="15.0" width="0.5" height="3" fill="#5c5a40" opacity="0.5"/><rect x="9.1" y="15.0" width="0.5" height="3" fill="#5c5a40" opacity="0.5"/><rect x="16.5" y="15.0" width="0.5" height="3" fill="#5c5a40" opacity="0.5"/><rect x="22.3" y="15.0" width="0.5" height="3" fill="#5c5a40" opacity="0.5"/><rect x="29.9" y="15.0" width="0.5" height="3" fill="#5c5a40" opacity="0.5"/><rect x="35.4" y="15.0" width="0.5" height="3" fill="#5c5a40" opacity="0.5"/><rect x="42.3" y="15.0" width="0.5" height="3" fill="#5c5a40" opacity="0.5"/><rect x="0" y="18.0" width="45" height="0.5" fill="#5c5a40" opacity="0.5"/><rect x="-1.1" y="18.0" width="0.5" height="3" fill="#5c5a40" opacity="0.5"/><rect x="5.8" y="18.0" width="0.5" height="3" fill="#5c5a40" opacity="0.5"/><rect x="12.8" y="18.0" width="0.5" height="3" fill="#5c5a40" opacity="0.5"/><rect x="19.4" y="18.0" width="0.5" height="3" fill="#5c5a40" opacity="0.5"/><rect x="27.6" y="18.0" width="0.5" height="3" fill="#5c5a40" opacity="0.5"/><rect x="35.7" y="18.0" width="0.5" height="3" fill="#5c5a40" opacity="0.5"/><rect x="43.9" y="18.0" width="0.5" height="3" fill="#5c5a40" opacity="0.5"/><rect x="0" y="21.0" width="45" height="0.5" fill="#5c5a40" opacity="0.5"/><rect x="2.1" y="21.0" width="0.5" height="3" fill="#5c5a40" opacity="0.5"/><rect x="8.7" y="21.0" width="0.5" height="3" fill="#5c5a40" opacity="0.5"/><rect x="14.5" y="21.0" width="0.5" height="3" fill="#5c5a40" opacity="0.5"/><rect x="22.2" y="21.0" width="0.5" height="3" fill="#5c5a40" opacity="0.5"/><rect x="28.5" y="21.0" width="0.5" height="3" fill="#5c5a40" opacity="0.5"/><rect x="34.3" y="21.0" width="0.5" height="3" fill="#5c5a40" opacity="0.5"/><rect x="40.7" y="21.0" width="0.5" height="3" fill="#5c5a40" opacity="0.5"/><rect x="0" y="24.0" width="45" height="0.5" fill="#5c5a40" opacity="0.5"/><rect x="0.7" y="24.0" width="0.5" height="3" fill="#5c5a40" opacity="0.5"/><rect x="7.6" y="24.0" width="0.5" height="3" fill="#5c5a40" opacity="0.5"/><rect x="14.0" y="24.0" width="0.5" height="3" fill="#5c5a40" opacity="0.5"/><rect x="21.5" y="24.0" width="0.5" height="3" fill="#5c5a40" opacity="0.5"/><rect x="27.2" y="24.0" width="0.5" height="3" fill="#5c5a40" opacity="0.5"/><rect x="33.3" y="24.0" width="0.5" height="3" fill="#5c5a40" opacity="0.5"/><rect x="40.9" y="24.0" width="0.5" height="3" fill="#5c5a40" opacity="0.5"/><rect x="0" y="27.0" width="45" height="0.5" fill="#5c5a40" opacity="0.5"/><rect x="2.3" y="27.0" width="0.5" height="3" fill="#5c5a40" opacity="0.5"/><rect x="8.0" y="27.0" width="0.5" height="3" fill="#5c5a40" opacity="0.5"/><rect x="15.0" y="27.0" width="0.5" height="3" fill="#5c5a40" opacity="0.5"/><rect x="22.5" y="27.0" width="0.5" height="3" fill="#5c5a40" opacity="0.5"/><rect x="28.0" y="27.0" width="0.5" height="3" fill="#5c5a40" opacity="0.5"/><rect x="34.8" y="27.0" width="0.5" height="3" fill="#5c5a40" opacity="0.5"/><rect x="41.2" y="27.0" width="0.5" height="3" fill="#5c5a40" opacity="0.5"/><rect x="0" y="30.0" width="45" height="0.5" fill="#5c5a40" opacity="0.5"/><rect x="-1.0" y="30.0" width="0.5" height="3" fill="#5c5a40" opacity="0.5"/><rect x="5.4" y="30.0" width="0.5" height="3" fill="#5c5a40" opacity="0.5"/><rect x="12.3" y="30.0" width="0.5" height="3" fill="#5c5a40" opacity="0.5"/><rect x="18.1" y="30.0" width="0.5" height="3" fill="#5c5a40" opacity="0.5"/><rect x="25.5" y="30.0" width="0.5" height="3" fill="#5c5a40" opacity="0.5"/><rect x="33.6" y="30.0" width="0.5" height="3" fill="#5c5a40" opacity="0.5"/><rect x="41.2" y="30.0" width="0.5" height="3" fill="#5c5a40" opacity="0.5"/><rect x="0" y="33.0" width="45" height="0.5" fill="#5c5a40" opacity="0.5"/><rect x="3.9" y="33.0" width="0.5" height="3" fill="#5c5a40" opacity="0.5"/><rect x="11.3" y="33.0" width="0.5" height="3" fill="#5c5a40" opacity="0.5"/><rect x="16.9" y="33.0" width="0.5" height="3" fill="#5c5a40" opacity="0.5"/><rect x="23.5" y="33.0" width="0.5" height="3" fill="#5c5a40" opacity="0.5"/><rect x="31.0" y="33.0" width="0.5" height="3" fill="#5c5a40" opacity="0.5"/><rect x="39.3" y="33.0" width="0.5" height="3" fill="#5c5a40" opacity="0.5"/><rect x="0" y="36.0" width="45" height="0.5" fill="#5c5a40" opacity="0.5"/><rect x="0.2" y="36.0" width="0.5" height="3" fill="#5c5a40" opacity="0.5"/><rect x="7.5" y="36.0" width="0.5" height="3" fill="#5c5a40" opacity="0.5"/><rect x="15.9" y="36.0" width="0.5" height="3" fill="#5c5a40" opacity="0.5"/><rect x="22.0" y="36.0" width="0.5" height="3" fill="#5c5a40" opacity="0.5"/><rect x="29.0" y="36.0" width="0.5" height="3" fill="#5c5a40" opacity="0.5"/><rect x="34.7" y="36.0" width="0.5" height="3" fill="#5c5a40" opacity="0.5"/><rect x="42.5" y="36.0" width="0.5" height="3" fill="#5c5a40" opacity="0.5"/><rect x="0" y="39.0" width="45" height="0.5" fill="#5c5a40" opacity="0.5"/><rect x="2.6" y="39.0" width="0.5" height="3" fill="#5c5a40" opacity="0.5"/><rect x="8.7" y="39.0" width="0.5" height="3" fill="#5c5a40" opacity="0.5"/><rect x="15.8" y="39.0" width="0.5" height="3" fill="#5c5a40" opacity="0.5"/><rect x="23.5" y="39.0" width="0.5" height="3" fill="#5c5a40" opacity="0.5"/><rect x="29.5" y="39.0" width="0.5" height="3" fill="#5c5a40" opacity="0.5"/><rect x="35.9" y="39.0" width="0.5" height="3" fill="#5c5a40" opacity="0.5"/><rect x="43.0" y="39.0" width="0.5" height="3" fill="#5c5a40" opacity="0.5"/><rect x="0" y="42.0" width="45" height="0.5" fill="#5c5a40" opacity="0.5"/><rect x="1.2" y="42.0" width="0.5" height="3" fill="#5c5a40" opacity="0.5"/><rect x="8.8" y="42.0" width="0.5" height="3" fill="#5c5a40" opacity="0.5"/><rect x="17.2" y="42.0" width="0.5" height="3" fill="#5c5a40" opacity="0.5"/><rect x="24.6" y="42.0" width="0.5" height="3" fill="#5c5a40" opacity="0.5"/><rect x="32.2" y="42.0" width="0.5" height="3" fill="#5c5a40" opacity="0.5"/><rect x="38.5" y="42.0" width="0.5" height="3" fill="#5c5a40" opacity="0.5"/><rect width="45" height="45" filter="url(#nzd)" opacity="0.2"/></svg>
<div class="abs" style="left:1815px;top:453px;width:49px;height:49px;background:#fff;border:1px solid #a3a9b0"></div>
<svg class="abs" style="left:1817px;top:455px;overflow:hidden" width="45" height="45" viewBox="0 0 45 45"><rect width="45" height="45" fill="#c4665a"/><rect x="0.0" y="0.0" width="14" height="3.8" fill="#96483c" opacity="1"/><rect x="14.0" y="0.0" width="14" height="3.8" fill="#96483c" opacity="1"/><rect x="28.0" y="0.0" width="14" height="3.8" fill="#dea090" opacity="1"/><rect x="42.0" y="0.0" width="14" height="3.8" fill="#dea090" opacity="1"/><rect x="-7.0" y="3.8" width="14" height="3.8" fill="#cc7866" opacity="1"/><rect x="7.0" y="3.8" width="14" height="3.8" fill="#a85445" opacity="1"/><rect x="21.0" y="3.8" width="14" height="3.8" fill="#96483c" opacity="1"/><rect x="35.0" y="3.8" width="14" height="3.8" fill="#96483c" opacity="1"/><rect x="0.0" y="7.6" width="14" height="3.8" fill="#dea090" opacity="1"/><rect x="14.0" y="7.6" width="14" height="3.8" fill="#b8604f" opacity="1"/><rect x="28.0" y="7.6" width="14" height="3.8" fill="#dea090" opacity="1"/><rect x="42.0" y="7.6" width="14" height="3.8" fill="#a85445" opacity="1"/><rect x="-7.0" y="11.4" width="14" height="3.8" fill="#c06a5a" opacity="1"/><rect x="7.0" y="11.4" width="14" height="3.8" fill="#cc7866" opacity="1"/><rect x="21.0" y="11.4" width="14" height="3.8" fill="#b8604f" opacity="1"/><rect x="35.0" y="11.4" width="14" height="3.8" fill="#d88c7a" opacity="1"/><rect x="0.0" y="15.2" width="14" height="3.8" fill="#d88c7a" opacity="1"/><rect x="14.0" y="15.2" width="14" height="3.8" fill="#b8604f" opacity="1"/><rect x="28.0" y="15.2" width="14" height="3.8" fill="#b8604f" opacity="1"/><rect x="42.0" y="15.2" width="14" height="3.8" fill="#cc7866" opacity="1"/><rect x="-7.0" y="19.0" width="14" height="3.8" fill="#a85445" opacity="1"/><rect x="7.0" y="19.0" width="14" height="3.8" fill="#d88c7a" opacity="1"/><rect x="21.0" y="19.0" width="14" height="3.8" fill="#c06a5a" opacity="1"/><rect x="35.0" y="19.0" width="14" height="3.8" fill="#d88c7a" opacity="1"/><rect x="0.0" y="22.8" width="14" height="3.8" fill="#d88c7a" opacity="1"/><rect x="14.0" y="22.8" width="14" height="3.8" fill="#cc7866" opacity="1"/><rect x="28.0" y="22.8" width="14" height="3.8" fill="#cc7866" opacity="1"/><rect x="42.0" y="22.8" width="14" height="3.8" fill="#a85445" opacity="1"/><rect x="-7.0" y="26.6" width="14" height="3.8" fill="#96483c" opacity="1"/><rect x="7.0" y="26.6" width="14" height="3.8" fill="#96483c" opacity="1"/><rect x="21.0" y="26.6" width="14" height="3.8" fill="#a85445" opacity="1"/><rect x="35.0" y="26.6" width="14" height="3.8" fill="#a85445" opacity="1"/><rect x="0.0" y="30.4" width="14" height="3.8" fill="#d88c7a" opacity="1"/><rect x="14.0" y="30.4" width="14" height="3.8" fill="#b8604f" opacity="1"/><rect x="28.0" y="30.4" width="14" height="3.8" fill="#96483c" opacity="1"/><rect x="42.0" y="30.4" width="14" height="3.8" fill="#c06a5a" opacity="1"/><rect x="-7.0" y="34.2" width="14" height="3.8" fill="#dea090" opacity="1"/><rect x="7.0" y="34.2" width="14" height="3.8" fill="#dea090" opacity="1"/><rect x="21.0" y="34.2" width="14" height="3.8" fill="#d88c7a" opacity="1"/><rect x="35.0" y="34.2" width="14" height="3.8" fill="#d88c7a" opacity="1"/><rect x="0.0" y="38.0" width="14" height="3.8" fill="#b8604f" opacity="1"/><rect x="14.0" y="38.0" width="14" height="3.8" fill="#cc7866" opacity="1"/><rect x="28.0" y="38.0" width="14" height="3.8" fill="#c06a5a" opacity="1"/><rect x="42.0" y="38.0" width="14" height="3.8" fill="#cc7866" opacity="1"/><rect x="-7.0" y="41.8" width="14" height="3.8" fill="#b8604f" opacity="1"/><rect x="7.0" y="41.8" width="14" height="3.8" fill="#cc7866" opacity="1"/><rect x="21.0" y="41.8" width="14" height="3.8" fill="#b8604f" opacity="1"/><rect x="35.0" y="41.8" width="14" height="3.8" fill="#b8604f" opacity="1"/><rect x="0" y="0.0" width="45" height="0.7" fill="#7a342c" opacity="0.5"/><rect x="2.4" y="0.0" width="0.7" height="3.8" fill="#7a342c" opacity="0.5"/><rect x="17.6" y="0.0" width="0.7" height="3.8" fill="#7a342c" opacity="0.5"/><rect x="33.2" y="0.0" width="0.7" height="3.8" fill="#7a342c" opacity="0.5"/><rect x="0" y="3.8" width="45" height="0.7" fill="#7a342c" opacity="0.5"/><rect x="5.6" y="3.8" width="0.7" height="3.8" fill="#7a342c" opacity="0.5"/><rect x="20.4" y="3.8" width="0.7" height="3.8" fill="#7a342c" opacity="0.5"/><rect x="36.8" y="3.8" width="0.7" height="3.8" fill="#7a342c" opacity="0.5"/><rect x="0" y="7.6" width="45" height="0.7" fill="#7a342c" opacity="0.5"/><rect x="0.4" y="7.6" width="0.7" height="3.8" fill="#7a342c" opacity="0.5"/><rect x="12.5" y="7.6" width="0.7" height="3.8" fill="#7a342c" opacity="0.5"/><rect x="25.9" y="7.6" width="0.7" height="3.8" fill="#7a342c" opacity="0.5"/><rect x="42.9" y="7.6" width="0.7" height="3.8" fill="#7a342c" opacity="0.5"/><rect x="0" y="11.4" width="45" height="0.7" fill="#7a342c" opacity="0.5"/><rect x="5.9" y="11.4" width="0.7" height="3.8" fill="#7a342c" opacity="0.5"/><rect x="22.6" y="11.4" width="0.7" height="3.8" fill="#7a342c" opacity="0.5"/><rect x="36.3" y="11.4" width="0.7" height="3.8" fill="#7a342c" opacity="0.5"/><rect x="0" y="15.2" width="45" height="0.7" fill="#7a342c" opacity="0.5"/><rect x="-1.1" y="15.2" width="0.7" height="3.8" fill="#7a342c" opacity="0.5"/><rect x="15.4" y="15.2" width="0.7" height="3.8" fill="#7a342c" opacity="0.5"/><rect x="28.4" y="15.2" width="0.7" height="3.8" fill="#7a342c" opacity="0.5"/><rect x="41.9" y="15.2" width="0.7" height="3.8" fill="#7a342c" opacity="0.5"/><rect x="0" y="19.0" width="45" height="0.7" fill="#7a342c" opacity="0.5"/><rect x="8.8" y="19.0" width="0.7" height="3.8" fill="#7a342c" opacity="0.5"/><rect x="22.8" y="19.0" width="0.7" height="3.8" fill="#7a342c" opacity="0.5"/><rect x="34.3" y="19.0" width="0.7" height="3.8" fill="#7a342c" opacity="0.5"/><rect x="0" y="22.8" width="45" height="0.7" fill="#7a342c" opacity="0.5"/><rect x="-2.8" y="22.8" width="0.7" height="3.8" fill="#7a342c" opacity="0.5"/><rect x="8.8" y="22.8" width="0.7" height="3.8" fill="#7a342c" opacity="0.5"/><rect x="20.9" y="22.8" width="0.7" height="3.8" fill="#7a342c" opacity="0.5"/><rect x="36.1" y="22.8" width="0.7" height="3.8" fill="#7a342c" opacity="0.5"/><rect x="0" y="26.6" width="45" height="0.7" fill="#7a342c" opacity="0.5"/><rect x="8.1" y="26.6" width="0.7" height="3.8" fill="#7a342c" opacity="0.5"/><rect x="20.1" y="26.6" width="0.7" height="3.8" fill="#7a342c" opacity="0.5"/><rect x="31.8" y="26.6" width="0.7" height="3.8" fill="#7a342c" opacity="0.5"/><rect x="43.0" y="26.6" width="0.7" height="3.8" fill="#7a342c" opacity="0.5"/><rect x="0" y="30.4" width="45" height="0.7" fill="#7a342c" opacity="0.5"/><rect x="2.2" y="30.4" width="0.7" height="3.8" fill="#7a342c" opacity="0.5"/><rect x="14.5" y="30.4" width="0.7" height="3.8" fill="#7a342c" opacity="0.5"/><rect x="26.9" y="30.4" width="0.7" height="3.8" fill="#7a342c" opacity="0.5"/><rect x="38.0" y="30.4" width="0.7" height="3.8" fill="#7a342c" opacity="0.5"/><rect x="0" y="34.2" width="45" height="0.7" fill="#7a342c" opacity="0.5"/><rect x="5.8" y="34.2" width="0.7" height="3.8" fill="#7a342c" opacity="0.5"/><rect x="17.6" y="34.2" width="0.7" height="3.8" fill="#7a342c" opacity="0.5"/><rect x="32.5" y="34.2" width="0.7" height="3.8" fill="#7a342c" opacity="0.5"/><rect x="0" y="38.0" width="45" height="0.7" fill="#7a342c" opacity="0.5"/><rect x="-0.3" y="38.0" width="0.7" height="3.8" fill="#7a342c" opacity="0.5"/><rect x="11.6" y="38.0" width="0.7" height="3.8" fill="#7a342c" opacity="0.5"/><rect x="26.4" y="38.0" width="0.7" height="3.8" fill="#7a342c" opacity="0.5"/><rect x="40.8" y="38.0" width="0.7" height="3.8" fill="#7a342c" opacity="0.5"/><rect x="0" y="41.8" width="45" height="0.7" fill="#7a342c" opacity="0.5"/><rect x="5.0" y="41.8" width="0.7" height="3.8" fill="#7a342c" opacity="0.5"/><rect x="21.6" y="41.8" width="0.7" height="3.8" fill="#7a342c" opacity="0.5"/><rect x="37.7" y="41.8" width="0.7" height="3.8" fill="#7a342c" opacity="0.5"/><rect width="45" height="45" filter="url(#nzd)" opacity="0.1"/></svg>
<div class="abs" style="left:1607px;top:505px;width:49px;height:49px;background:#fff;border:1px solid #a3a9b0"></div>
<svg class="abs" style="left:1609px;top:507px;overflow:hidden" width="45" height="45" viewBox="0 0 45 45"><rect width="45" height="45" fill="#b8b0a4"/><rect x="0.0" y="0.0" width="13" height="11.5" fill="#aaa49c" opacity="1"/><rect x="13.0" y="0.0" width="13" height="11.5" fill="#a09a96" opacity="1"/><rect x="26.0" y="0.0" width="13" height="11.5" fill="#b0a89e" opacity="1"/><rect x="39.0" y="0.0" width="13" height="11.5" fill="#a09a96" opacity="1"/><rect x="-6.5" y="11.5" width="13" height="11.5" fill="#b0a89e" opacity="1"/><rect x="6.5" y="11.5" width="13" height="11.5" fill="#c8c0b0" opacity="1"/><rect x="19.5" y="11.5" width="13" height="11.5" fill="#a09a96" opacity="1"/><rect x="32.5" y="11.5" width="13" height="11.5" fill="#ccc6b8" opacity="1"/><rect x="0.0" y="23.0" width="13" height="11.5" fill="#aaa49c" opacity="1"/><rect x="13.0" y="23.0" width="13" height="11.5" fill="#ccc6b8" opacity="1"/><rect x="26.0" y="23.0" width="13" height="11.5" fill="#a09a96" opacity="1"/><rect x="39.0" y="23.0" width="13" height="11.5" fill="#ccc6b8" opacity="1"/><rect x="-6.5" y="34.5" width="13" height="11.5" fill="#beb4a4" opacity="1"/><rect x="6.5" y="34.5" width="13" height="11.5" fill="#aaa49c" opacity="1"/><rect x="19.5" y="34.5" width="13" height="11.5" fill="#beb4a4" opacity="1"/><rect x="32.5" y="34.5" width="13" height="11.5" fill="#beb4a4" opacity="1"/><rect x="0" y="0.0" width="45" height="0.5" fill="#8e8a86" opacity="0.5"/><rect x="-0.7" y="0.0" width="0.5" height="11.5" fill="#8e8a86" opacity="0.5"/><rect x="12.7" y="0.0" width="0.5" height="11.5" fill="#8e8a86" opacity="0.5"/><rect x="26.0" y="0.0" width="0.5" height="11.5" fill="#8e8a86" opacity="0.5"/><rect x="38.9" y="0.0" width="0.5" height="11.5" fill="#8e8a86" opacity="0.5"/><rect x="0" y="11.5" width="45" height="0.5" fill="#8e8a86" opacity="0.5"/><rect x="7.1" y="11.5" width="0.5" height="11.5" fill="#8e8a86" opacity="0.5"/><rect x="20.7" y="11.5" width="0.5" height="11.5" fill="#8e8a86" opacity="0.5"/><rect x="33.7" y="11.5" width="0.5" height="11.5" fill="#8e8a86" opacity="0.5"/><rect x="0" y="23.0" width="45" height="0.5" fill="#8e8a86" opacity="0.5"/><rect x="-0.5" y="23.0" width="0.5" height="11.5" fill="#8e8a86" opacity="0.5"/><rect x="11.5" y="23.0" width="0.5" height="11.5" fill="#8e8a86" opacity="0.5"/><rect x="24.2" y="23.0" width="0.5" height="11.5" fill="#8e8a86" opacity="0.5"/><rect x="37.4" y="23.0" width="0.5" height="11.5" fill="#8e8a86" opacity="0.5"/><rect x="0" y="34.5" width="45" height="0.5" fill="#8e8a86" opacity="0.5"/><rect x="7.1" y="34.5" width="0.5" height="11.5" fill="#8e8a86" opacity="0.5"/><rect x="19.6" y="34.5" width="0.5" height="11.5" fill="#8e8a86" opacity="0.5"/><rect x="32.0" y="34.5" width="0.5" height="11.5" fill="#8e8a86" opacity="0.5"/><rect x="44.1" y="34.5" width="0.5" height="11.5" fill="#8e8a86" opacity="0.5"/><rect width="45" height="45" filter="url(#nzs)" opacity="0.15"/><rect width="45" height="45" filter="url(#nzd)" opacity="0.1"/></svg>
<div class="abs" style="left:1659px;top:505px;width:49px;height:49px;background:#fff;border:1px solid #a3a9b0"></div>
<svg class="abs" style="left:1661px;top:507px;overflow:hidden" width="45" height="45" viewBox="0 0 45 45"><rect width="45" height="45" fill="#e2c07e"/><rect x="0.0" y="0.0" width="11" height="5.6" fill="#e8c88a" opacity="1"/><rect x="11.0" y="0.0" width="11" height="5.6" fill="#e8c88a" opacity="1"/><rect x="22.0" y="0.0" width="11" height="5.6" fill="#deb872" opacity="1"/><rect x="33.0" y="0.0" width="11" height="5.6" fill="#e2be7a" opacity="1"/><rect x="44.0" y="0.0" width="11" height="5.6" fill="#ecd094" opacity="1"/><rect x="-5.5" y="5.6" width="11" height="5.6" fill="#e8c88a" opacity="1"/><rect x="5.5" y="5.6" width="11" height="5.6" fill="#deb872" opacity="1"/><rect x="16.5" y="5.6" width="11" height="5.6" fill="#d8b068" opacity="1"/><rect x="27.5" y="5.6" width="11" height="5.6" fill="#deb872" opacity="1"/><rect x="38.5" y="5.6" width="11" height="5.6" fill="#e8c88a" opacity="1"/><rect x="0.0" y="11.2" width="11" height="5.6" fill="#d8b068" opacity="1"/><rect x="11.0" y="11.2" width="11" height="5.6" fill="#deb872" opacity="1"/><rect x="22.0" y="11.2" width="11" height="5.6" fill="#d8b068" opacity="1"/><rect x="33.0" y="11.2" width="11" height="5.6" fill="#e2be7a" opacity="1"/><rect x="44.0" y="11.2" width="11" height="5.6" fill="#e8c88a" opacity="1"/><rect x="-5.5" y="16.8" width="11" height="5.6" fill="#e2be7a" opacity="1"/><rect x="5.5" y="16.8" width="11" height="5.6" fill="#ecd094" opacity="1"/><rect x="16.5" y="16.8" width="11" height="5.6" fill="#deb872" opacity="1"/><rect x="27.5" y="16.8" width="11" height="5.6" fill="#e2be7a" opacity="1"/><rect x="38.5" y="16.8" width="11" height="5.6" fill="#deb872" opacity="1"/><rect x="0.0" y="22.4" width="11" height="5.6" fill="#e2be7a" opacity="1"/><rect x="11.0" y="22.4" width="11" height="5.6" fill="#d8b068" opacity="1"/><rect x="22.0" y="22.4" width="11" height="5.6" fill="#d8b068" opacity="1"/><rect x="33.0" y="22.4" width="11" height="5.6" fill="#ecd094" opacity="1"/><rect x="44.0" y="22.4" width="11" height="5.6" fill="#e8c88a" opacity="1"/><rect x="-5.5" y="28.0" width="11" height="5.6" fill="#e8c88a" opacity="1"/><rect x="5.5" y="28.0" width="11" height="5.6" fill="#deb872" opacity="1"/><rect x="16.5" y="28.0" width="11" height="5.6" fill="#e2be7a" opacity="1"/><rect x="27.5" y="28.0" width="11" height="5.6" fill="#e2be7a" opacity="1"/><rect x="38.5" y="28.0" width="11" height="5.6" fill="#e2be7a" opacity="1"/><rect x="0.0" y="33.6" width="11" height="5.6" fill="#deb872" opacity="1"/><rect x="11.0" y="33.6" width="11" height="5.6" fill="#d8b068" opacity="1"/><rect x="22.0" y="33.6" width="11" height="5.6" fill="#e2be7a" opacity="1"/><rect x="33.0" y="33.6" width="11" height="5.6" fill="#d8b068" opacity="1"/><rect x="44.0" y="33.6" width="11" height="5.6" fill="#d8b068" opacity="1"/><rect x="-5.5" y="39.2" width="11" height="5.6" fill="#e8c88a" opacity="1"/><rect x="5.5" y="39.2" width="11" height="5.6" fill="#ecd094" opacity="1"/><rect x="16.5" y="39.2" width="11" height="5.6" fill="#d8b068" opacity="1"/><rect x="27.5" y="39.2" width="11" height="5.6" fill="#e2be7a" opacity="1"/><rect x="38.5" y="39.2" width="11" height="5.6" fill="#e8c88a" opacity="1"/><rect x="0.0" y="44.8" width="11" height="5.6" fill="#d8b068" opacity="1"/><rect x="11.0" y="44.8" width="11" height="5.6" fill="#d8b068" opacity="1"/><rect x="22.0" y="44.8" width="11" height="5.6" fill="#e8c88a" opacity="1"/><rect x="33.0" y="44.8" width="11" height="5.6" fill="#ecd094" opacity="1"/><rect x="44.0" y="44.8" width="11" height="5.6" fill="#deb872" opacity="1"/><rect x="0" y="0.0" width="45" height="0.7" fill="#b08a4a" opacity="0.7"/><rect x="1.8" y="0.0" width="0.7" height="5.6" fill="#b08a4a" opacity="0.7"/><rect x="11.4" y="0.0" width="0.7" height="5.6" fill="#b08a4a" opacity="0.7"/><rect x="20.5" y="0.0" width="0.7" height="5.6" fill="#b08a4a" opacity="0.7"/><rect x="33.5" y="0.0" width="0.7" height="5.6" fill="#b08a4a" opacity="0.7"/><rect x="43.2" y="0.0" width="0.7" height="5.6" fill="#b08a4a" opacity="0.7"/><rect x="0" y="5.6" width="45" height="0.7" fill="#b08a4a" opacity="0.7"/><rect x="6.1" y="5.6" width="0.7" height="5.6" fill="#b08a4a" opacity="0.7"/><rect x="16.5" y="5.6" width="0.7" height="5.6" fill="#b08a4a" opacity="0.7"/><rect x="29.0" y="5.6" width="0.7" height="5.6" fill="#b08a4a" opacity="0.7"/><rect x="39.0" y="5.6" width="0.7" height="5.6" fill="#b08a4a" opacity="0.7"/><rect x="0" y="11.2" width="45" height="0.7" fill="#b08a4a" opacity="0.7"/><rect x="-0.7" y="11.2" width="0.7" height="5.6" fill="#b08a4a" opacity="0.7"/><rect x="10.7" y="11.2" width="0.7" height="5.6" fill="#b08a4a" opacity="0.7"/><rect x="23.4" y="11.2" width="0.7" height="5.6" fill="#b08a4a" opacity="0.7"/><rect x="35.2" y="11.2" width="0.7" height="5.6" fill="#b08a4a" opacity="0.7"/><rect x="0" y="16.8" width="45" height="0.7" fill="#b08a4a" opacity="0.7"/><rect x="6.3" y="16.8" width="0.7" height="5.6" fill="#b08a4a" opacity="0.7"/><rect x="15.5" y="16.8" width="0.7" height="5.6" fill="#b08a4a" opacity="0.7"/><rect x="28.1" y="16.8" width="0.7" height="5.6" fill="#b08a4a" opacity="0.7"/><rect x="39.4" y="16.8" width="0.7" height="5.6" fill="#b08a4a" opacity="0.7"/><rect x="0" y="22.4" width="45" height="0.7" fill="#b08a4a" opacity="0.7"/><rect x="-1.2" y="22.4" width="0.7" height="5.6" fill="#b08a4a" opacity="0.7"/><rect x="11.2" y="22.4" width="0.7" height="5.6" fill="#b08a4a" opacity="0.7"/><rect x="22.5" y="22.4" width="0.7" height="5.6" fill="#b08a4a" opacity="0.7"/><rect x="35.2" y="22.4" width="0.7" height="5.6" fill="#b08a4a" opacity="0.7"/><rect x="0" y="28.0" width="45" height="0.7" fill="#b08a4a" opacity="0.7"/><rect x="7.3" y="28.0" width="0.7" height="5.6" fill="#b08a4a" opacity="0.7"/><rect x="18.6" y="28.0" width="0.7" height="5.6" fill="#b08a4a" opacity="0.7"/><rect x="30.4" y="28.0" width="0.7" height="5.6" fill="#b08a4a" opacity="0.7"/><rect x="41.9" y="28.0" width="0.7" height="5.6" fill="#b08a4a" opacity="0.7"/><rect x="0" y="33.6" width="45" height="0.7" fill="#b08a4a" opacity="0.7"/><rect x="1.8" y="33.6" width="0.7" height="5.6" fill="#b08a4a" opacity="0.7"/><rect x="12.1" y="33.6" width="0.7" height="5.6" fill="#b08a4a" opacity="0.7"/><rect x="24.2" y="33.6" width="0.7" height="5.6" fill="#b08a4a" opacity="0.7"/><rect x="37.0" y="33.6" width="0.7" height="5.6" fill="#b08a4a" opacity="0.7"/><rect x="0" y="39.2" width="45" height="0.7" fill="#b08a4a" opacity="0.7"/><rect x="4.1" y="39.2" width="0.7" height="5.6" fill="#b08a4a" opacity="0.7"/><rect x="16.4" y="39.2" width="0.7" height="5.6" fill="#b08a4a" opacity="0.7"/><rect x="28.0" y="39.2" width="0.7" height="5.6" fill="#b08a4a" opacity="0.7"/><rect x="37.8" y="39.2" width="0.7" height="5.6" fill="#b08a4a" opacity="0.7"/><rect x="0" y="44.8" width="45" height="0.7" fill="#b08a4a" opacity="0.7"/><rect x="0.1" y="44.8" width="0.7" height="5.6" fill="#b08a4a" opacity="0.7"/><rect x="9.3" y="44.8" width="0.7" height="5.6" fill="#b08a4a" opacity="0.7"/><rect x="22.0" y="44.8" width="0.7" height="5.6" fill="#b08a4a" opacity="0.7"/><rect x="33.0" y="44.8" width="0.7" height="5.6" fill="#b08a4a" opacity="0.7"/><rect x="44.1" y="44.8" width="0.7" height="5.6" fill="#b08a4a" opacity="0.7"/><rect width="45" height="45" filter="url(#nzd)" opacity="0.08"/></svg>
<div class="abs" style="left:1603px;top:597px;width:66px;height:71px;background:#f0f0f0;border:1px solid #a8a8a8"></div>
<svg class="abs" style="left:1612px;top:610px" width="48" height="46" viewBox="0 0 48 46"><g transform="translate(15,2)"><path d="M0 5l9-4 9 4-9 4z" fill="#dedede" stroke="#a0a0a0" stroke-width="1.100"/><path d="M0 5l9 4v11l-9-4.500z" fill="#bcbcbc" stroke="#a0a0a0" stroke-width="1.100"/><path d="M9 9l9-4v10.500L9 20z" fill="#cecece" stroke="#a0a0a0" stroke-width="1.100"/></g><g transform="translate(4,17)"><path d="M0 5l9-4 9 4-9 4z" fill="#dedede" stroke="#a0a0a0" stroke-width="1.100"/><path d="M0 5l9 4v11l-9-4.500z" fill="#bcbcbc" stroke="#a0a0a0" stroke-width="1.100"/><path d="M9 9l9-4v10.500L9 20z" fill="#cecece" stroke="#a0a0a0" stroke-width="1.100"/></g><g transform="translate(24,18)"><path d="M0 5l9-4 9 4-9 4z" fill="#dedede" stroke="#a0a0a0" stroke-width="1.100"/><path d="M0 5l9 4v11l-9-4.500z" fill="#bcbcbc" stroke="#a0a0a0" stroke-width="1.100"/><path d="M9 9l9-4v10.500L9 20z" fill="#cecece" stroke="#a0a0a0" stroke-width="1.100"/></g></svg>
<div class="abs" style="left:1673px;top:599px;width:200px;height:17px;background:#f0f0f0;border:1px solid #f7f7f7"></div>
<div class="abs" style="left:1673px;top:619px;width:200px;height:47px;background:#f0f0f0;border:1px solid #f7f7f7"></div>
<svg class="abs" style="left:1885px;top:600px" width="10" height="15" viewBox="0 0 10 15"><rect x="0" y="0" width="9.500" height="6" fill="#000"/><path d="M2 1.500h5.500L4.750 4.800z" fill="#fff"/><rect x="0" y="7.500" width="9.500" height="7" fill="#000"/><path d="M4.750 9v4M2.700 11h4.100" stroke="#fff" stroke-width="1.300"/></svg>
<div class="abs" style="left:1601px;top:670px;width:302px;height:1px;background:#c2c2c2"></div>
<div class="abs" style="left:1601px;top:697px;width:302px;height:1px;background:#e6e6e6"></div>
<div class="abs" style="left:1601px;top:677px;width:44px;height:21px;background:#f8f8f8;border:1px solid #ebebeb;border-bottom:none"></div>
<div class="t" style="left:1607.5px;top:679.6px;font-size:12px;letter-spacing:-0.675px;color:#000;">Select</div>
<div class="abs" style="left:1645px;top:679px;width:39px;height:18px;background:#f2f2f2;border:1px solid #e9e9e9;border-bottom:none;border-left:none"></div>
<div class="t" style="left:1649.6px;top:681.3px;font-size:12px;letter-spacing:-0.594px;color:#000;">Edit</div>
<div class="abs" style="left:1684px;top:679px;width:53px;height:18px;background:#f2f2f2;border:1px solid #e9e9e9;border-bottom:none;border-left:none"></div>
<div class="t" style="left:1691.6px;top:681.3px;font-size:12px;letter-spacing:-0.501px;color:#000;">Statistics</div>
<div class="abs" style="left:1601px;top:698px;width:302px;height:28px;background:#f6f6f6"></div>
<div class="abs" style="left:1606px;top:701px;width:32px;height:19px;background:#f2f2f2;border:1px solid #fafafa;border-right-color:#a8a8a8;border-bottom-color:#a8a8a8"></div>
<svg class="abs" style="left:1613px;top:705px" width="20" height="13" viewBox="0 0 20 13"><rect x="0.5" y="0.5" width="3" height="3" fill="none" stroke="#333" stroke-width=".9"/><rect x="4.5" y="0.5" width="3" height="3" fill="none" stroke="#333" stroke-width=".9"/><rect x="8.5" y="0.5" width="3" height="3" fill="none" stroke="#333" stroke-width=".9"/><rect x="0.5" y="4.5" width="3" height="3" fill="none" stroke="#333" stroke-width=".9"/><rect x="4.5" y="4.5" width="3" height="3" fill="none" stroke="#333" stroke-width=".9"/><rect x="8.5" y="4.5" width="3" height="3" fill="none" stroke="#333" stroke-width=".9"/><rect x="0.5" y="8.5" width="3" height="3" fill="none" stroke="#333" stroke-width=".9"/><rect x="4.5" y="8.5" width="3" height="3" fill="none" stroke="#333" stroke-width=".9"/><rect x="8.5" y="8.5" width="3" height="3" fill="none" stroke="#333" stroke-width=".9"/><path d="M13.500 6h4l-2 2.500z" fill="#222"/></svg>
<div class="abs" style="left:1640px;top:701px;width:37px;height:19px;background:#f2f2f2;border:1px solid #fafafa;border-right-color:#a8a8a8;border-bottom-color:#a8a8a8"></div>
<svg class="abs" style="left:1643px;top:702px" width="18" height="18" viewBox="0 0 18 18"><path d="M1.500 9L9 2l7.500 7" fill="none" stroke="#000" stroke-width="1.800"/><path d="M3.500 8.500V16h11V8.500L9 3.500z" fill="#fff" stroke="#000" stroke-width="1.400"/><rect x="7.500" y="10.500" width="3" height="5.500" fill="#000"/><rect x="12" y="2.500" width="1.500" height="3" fill="#000"/></svg>
<div class="abs" style="left:1662px;top:702px;width:1px;height:18px;background:#dcdcdc"></div>
<svg class="abs" style="left:1665px;top:705px" width="10" height="6" viewBox="0 0 10 6"><path d="M0 0h10L5 6z" fill="#000"/></svg>
<div class="abs" style="left:1679px;top:701px;width:183px;height:20px;background:#fff;border:1px solid #c9c9c9;border-top-color:#7f7f7f;border-left-color:#7f7f7f"></div>
<div class="t" style="left:1682.3px;top:704px;font-size:12px;letter-spacing:-0.716px;color:#808080;">3D Warehouse</div>
<div class="abs" style="left:1862px;top:701px;width:19px;height:20px;background:#fff;border:1px solid #b9b9b9;border-left:1px solid #888"></div>
<svg class="abs" style="left:1865px;top:705px" width="12" height="12" viewBox="0 0 12 12"><circle cx="7.500" cy="4.500" r="3.200" fill="none" stroke="#222" stroke-width="1.200"/><path d="M5.200 7L1.500 10.800" stroke="#222" stroke-width="1.400"/></svg>
<div class="abs" style="left:1884px;top:700px;width:19px;height:1px;background:#d8d8d8"></div>
<svg class="abs" style="left:1886px;top:702px" width="18" height="18" viewBox="0 0 18 18"><rect x="2" y="4" width="6" height="9" rx="1" fill="#3a5f9a" stroke="#1c2f55" stroke-width=".8"/><path d="M3.500 8h3M3.500 10h3" stroke="#fff" stroke-width=".8"/><path d="M7 6h3.500V2.500L16.500 9l-6 6.500V12H7z" fill="#000"/></svg>
<div class="abs" style="left:1601px;top:725px;width:302px;height:1px;background:#a6a6a6"></div>
<div class="abs" style="left:1601px;top:726px;width:287px;height:265px;background:#fff"></div>
<div class="abs" style="left:1895px;top:743px;width:2px;height:17px;background:#8a8a8a"></div>
<div class="abs" style="left:1601px;top:726px;width:287px;height:265px;overflow:hidden">
<div class="abs" style="left:7px;top:4px;width:48px;height:48px;background:#fff;border:1px solid #8f8f8f;overflow:hidden"><div class="abs" style="left:2px;top:22px;width:42px;height:1px;background:#b8b8b8"></div><div class="abs" style="left:10px;top:21.5px;width:14px;height:1px;background:#8a8a8a"></div></div>
<div class="abs" style="left:59px;top:4px;width:48px;height:48px;background:#fff;border:1px solid #8f8f8f;overflow:hidden"><div class="abs" style="left:2px;top:22px;width:42px;height:1px;background:#aaa"></div><div class="abs" style="left:8px;top:22px;width:22px;height:1.2px;background:#7a7a7a"></div></div>
<div class="abs" style="left:111px;top:4px;width:48px;height:48px;background:#fff;border:1px solid #8f8f8f;overflow:hidden"><div class="abs" style="left:2px;top:22px;width:42px;height:1.2px;background:#888"></div></div>
<div class="abs" style="left:163px;top:4px;width:48px;height:48px;background:#fff;border:1px solid #8f8f8f;overflow:hidden"><div class="abs" style="left:2px;top:22px;width:42px;height:1px;background:#c4c4c4"></div><div class="abs" style="left:2px;top:22px;width:10px;height:1.2px;background:#7a7a7a"></div></div>
<div class="abs" style="left:215px;top:4px;width:48px;height:48px;background:#fff;border:1px solid #8f8f8f;overflow:hidden"><div class="abs" style="left:2px;top:22px;width:42px;height:1px;background:#c4c4c4"></div><div class="abs" style="left:2px;top:22px;width:10px;height:1.2px;background:#7a7a7a"></div></div>
<div class="abs" style="left:7px;top:56px;width:48px;height:48px;background:#fff;border:1px solid #8f8f8f;overflow:hidden"><div class="abs" style="left:2px;top:22px;width:42px;height:1px;background:#8a8a8a"></div></div>
<div class="abs" style="left:59px;top:56px;width:48px;height:48px;background:#fff;border:1px solid #8f8f8f;overflow:hidden"><div class="abs" style="left:2px;top:22px;width:42px;height:1px;background:#b4b4b4"></div><div class="abs" style="left:8px;top:21.5px;width:16px;height:1.2px;background:#7a7a7a"></div></div>
<div class="abs" style="left:111px;top:56px;width:48px;height:48px;background:#fff;border:1px solid #8f8f8f;overflow:hidden"><div class="abs" style="left:2px;top:22px;width:42px;height:1px;background:#8a8a8a"></div></div>
<div class="abs" style="left:163px;top:56px;width:48px;height:48px;background:#fff;border:1px solid #8f8f8f;overflow:hidden"><div class="abs" style="left:2px;top:22px;width:42px;height:1px;background:#aaa"></div></div>
<div class="abs" style="left:215px;top:56px;width:48px;height:48px;background:#fff;border:1px solid #8f8f8f;overflow:hidden"><div class="abs" style="left:2px;top:22px;width:42px;height:1px;background:#c8c8c8"></div></div>
<div class="abs" style="left:7px;top:108px;width:48px;height:48px;background:#fff;border:1px solid #8f8f8f;overflow:hidden"><div class="abs" style="left:2px;top:22px;width:42px;height:1px;background:#c4c4c4"></div><div class="abs" style="left:2px;top:22px;width:8px;height:1.2px;background:#7a7a7a"></div></div>
<div class="abs" style="left:59px;top:108px;width:48px;height:48px;background:#fff;border:1px solid #8f8f8f;overflow:hidden"><div class="abs" style="left:2px;top:22px;width:42px;height:1px;background:#b4b4b4"></div></div>
<div class="abs" style="left:111px;top:108px;width:48px;height:48px;background:#fff;border:1px solid #8f8f8f;overflow:hidden"><div class="abs" style="left:2px;top:22px;width:42px;height:1.2px;background:#8a8a8a"></div></div>
<div class="abs" style="left:163px;top:108px;width:48px;height:48px;background:#fff;border:1px solid #8f8f8f;overflow:hidden"><div class="abs" style="left:24px;top:22px;width:20px;height:1px;background:#999"></div><div class="abs" style="left:2px;top:22px;width:18px;height:1px;background:#d8d8d8"></div></div>
<div class="abs" style="left:215px;top:108px;width:48px;height:48px;background:#fff;border:1px solid #8f8f8f;overflow:hidden"><div class="abs" style="left:2px;top:22px;width:42px;height:1.4px;background:#6a6a6a"></div></div>
<div class="abs" style="left:7px;top:160px;width:48px;height:48px;background:#fff;border:1px solid #8f8f8f;overflow:hidden"><div class="abs" style="left:2px;top:22px;width:42px;height:1px;background:#999"></div><div class="abs" style="left:14px;top:22px;width:16px;height:1.5px;background:#555"></div></div>
<div class="abs" style="left:59px;top:160px;width:48px;height:48px;background:#fff;border:1px solid #8f8f8f;overflow:hidden"><svg class="abs" style="left:0;top:0" width="46" height="46" viewBox="0 0 46 46"><rect width="46" height="46" fill="#f6f6f6"/><rect x="0" y="0" width="4" height="46" fill="#fdfdfd"/><rect x="3.500" y="0" width="1" height="46" fill="#555"/><rect x="5" y="0" width="21" height="24" fill="#fafafa"/><rect x="12" y="5" width="9" height="13" fill="#2a2a2a"/><rect x="13.500" y="7" width="6" height="10" fill="#8a8a8a"/><rect x="21" y="9" width="9" height="12" fill="#2a2a2a"/><rect x="22.500" y="11" width="6" height="9" fill="#9a9a9a"/><path d="M4.500 17L26 23.500V46H4.500z" fill="#d6d6d6"/><path d="M4.500 17L26 23.500M4.500 28L26 33" stroke="#b4b4b4" stroke-width=".8" fill="none"/><rect x="25.500" y="0" width="1.600" height="46" fill="#333"/><rect x="38" y="14" width="8" height="27" fill="#1e1e1e"/><rect x="30" y="2" width="1.200" height="30" fill="#222"/><rect x="35" y="0" width="1" height="20" fill="#222"/><ellipse cx="34" cy="10" rx="4" ry="6" fill="#4a7a3a"/><ellipse cx="37" cy="20" rx="4.500" ry="6" fill="#2f5a2a"/><ellipse cx="33" cy="25" rx="3.500" ry="4" fill="#5a9a48"/><ellipse cx="40" cy="27" rx="3" ry="3.500" fill="#3f7a36"/><rect x="30" y="29" width="11.500" height="5.500" fill="#f8f8f8" stroke="#bbb" stroke-width=".5"/><rect x="27" y="35" width="13" height="6" fill="#f2f2f2"/><rect x="27" y="41" width="19" height="5" fill="#5a3c34"/></svg></div>
<div class="abs" style="left:111px;top:160px;width:48px;height:48px;background:#fff;border:1px solid #8f8f8f;overflow:hidden"><div class="abs" style="left:2px;top:22px;width:42px;height:1px;background:#999"></div></div>
<div class="abs" style="left:163px;top:160px;width:48px;height:48px;background:#fff;border:1px solid #8f8f8f;overflow:hidden"><svg class="abs" style="left:0;top:0" width="46" height="46" viewBox="0 0 46 46"><path d="M2 3l41 9" stroke="#555" stroke-width="1"/><path d="M6 4v38l18-3V8zM33 10v28l8-1.500V12z" fill="#fdfdfd" stroke="#aaa" stroke-width=".8"/><path d="M24 18v10M35 18v10" stroke="#ccc" stroke-width=".8"/><circle cx="10" cy="5" r="1" fill="#444"/><circle cx="22" cy="7.500" r="1" fill="#444"/><circle cx="34" cy="10" r="1" fill="#444"/></svg></div>
<div class="abs" style="left:215px;top:160px;width:48px;height:48px;background:#fff;border:1px solid #8f8f8f;overflow:hidden"><svg class="abs" style="left:0;top:0" width="46" height="46" viewBox="0 0 46 46"><rect width="46" height="46" fill="#8a8a8a"/><rect x="0" y="5" width="46" height="36" fill="#fff"/><path d="M3 14c0-3 2-5 5-5l30-4c4 0 6 3 6 8s-2 9-6 10l-30 3c-3 0-5-3-5-7z" fill="#f6f6f6" stroke="#aaa" stroke-width=".8"/><path d="M38 5c4 0 6 3 6 8s-2 9-6 10c-3-3-3-14 0-18z" fill="#2030c8"/><rect x="9" y="11" width="15" height="5" fill="#2a4ad0" transform="rotate(-6 16 13)"/><path d="M5 24l3 12M14 26l2 10M33 24l2 14M8 36l28 2" stroke="#999" stroke-width="1" fill="none"/></svg></div>
<div class="abs" style="left:7px;top:212px;width:48px;height:48px;background:#fff;border:1px solid #8f8f8f;overflow:hidden"><div class="abs" style="left:22px;top:1px;width:1.3px;height:43px;background:#444"></div></div>
<div class="abs" style="left:59px;top:212px;width:48px;height:48px;background:#fff;border:1px solid #8f8f8f;overflow:hidden"><div class="abs" style="left:22px;top:1px;width:1.3px;height:43px;background:#444"></div></div>
<div class="abs" style="left:111px;top:212px;width:48px;height:48px;background:#fff;border:1px solid #8f8f8f;overflow:hidden"><div class="abs" style="left:22px;top:1px;width:2px;height:43px;background:#333"></div></div>
<div class="abs" style="left:163px;top:212px;width:48px;height:48px;background:#fff;border:1px solid #8f8f8f;overflow:hidden"><div class="abs" style="left:1px;top:17px;width:44px;height:7.500px;background:#3c3c3c;transform:skewY(3deg);border-radius:1px"></div></div>
<div class="abs" style="left:215px;top:212px;width:48px;height:48px;background:#fff;border:1px solid #8f8f8f;overflow:hidden"><div class="abs" style="left:2px;top:22px;width:42px;height:1px;background:#e6e6e6"></div></div>
<div class="abs" style="left:7px;top:264px;width:48px;height:48px;background:#fff;border:1px solid #8f8f8f;overflow:hidden"></div>
<div class="abs" style="left:59px;top:264px;width:48px;height:48px;background:#fff;border:1px solid #8f8f8f;overflow:hidden"></div>
<div class="abs" style="left:111px;top:264px;width:48px;height:48px;background:#fff;border:1px solid #8f8f8f;overflow:hidden"></div>
<div class="abs" style="left:163px;top:264px;width:48px;height:48px;background:#fff;border:1px solid #8f8f8f;overflow:hidden"></div>
<div class="abs" style="left:215px;top:264px;width:48px;height:48px;background:#fff;border:1px solid #8f8f8f;overflow:hidden"></div>
</div>
<div class="abs" style="left:1764px;top:829px;width:42px;height:17px;background:#ffffe1;border:1px solid #767676"></div>
<div class="t" style="left:1767.8px;top:832.4px;font-size:12px;letter-spacing:-0.622px;color:#000;">*U5297</div>
<div class="abs" style="left:1601px;top:991px;width:302px;height:14px;background:#fdfdfd;border-top:1px solid #b4b4b4"></div>
<div class="t" style="left:1732.5px;top:996.4px;font-size:11px;letter-spacing:-0.174px;color:#444;">In Model</div>
<svg class="abs" style="left:1609.5px;top:996.5px" width="12" height="10" viewBox="0 0 12 10"><path d="M1 5l5-4.500v3h5v3H6v3z" fill="#fff" stroke="#555" stroke-width="1"/></svg>
<svg class="abs" style="left:1887.5px;top:996.5px" width="12" height="10" viewBox="0 0 12 10"><path d="M11 5L6 .5v3H1v3h5v3z" fill="#fff" stroke="#555" stroke-width="1"/></svg>
<div id="status"></div>
<svg class="abs" style="left:4px;top:1009px" width="18" height="18" viewBox="0 0 18 18"><circle cx="9" cy="9" r="6.600" fill="#f4f4f4" stroke="#a8a8a8" stroke-width="1.100"/><circle cx="9" cy="7.600" r="2.500" fill="#b0b0b0"/><rect x="7.900" y="9.500" width="2.200" height="3.300" fill="#b0b0b0"/></svg>
<svg class="abs" style="left:34px;top:1009px" width="18" height="18" viewBox="0 0 18 18"><circle cx="9" cy="9" r="6.600" fill="#fff" stroke="#111" stroke-width="1.400"/><circle cx="9" cy="5.800" r="1.400" fill="#111"/><path d="M6.800 8h4.400v1.300h-.9V13.500H7.700V9.300H6.800z" fill="#111"/></svg>
<div class="abs" style="left:62px;top:1014px;width:1px;height:9px;background:#7c7c7c"></div>
<div class="t" style="left:73.3px;top:1013.6px;font-size:12px;letter-spacing:0.558px;color:#000;">Click or drag to select objects. Shift = Add/Subtract. Ctrl = Add. Shift + Ctrl = Subtract.</div>
<div class="abs" style="left:1609px;top:1014px;width:1px;height:9px;background:#666"></div>
<div class="t" style="left:1620.3px;top:1014.1px;font-size:12.5px;letter-spacing:0.236px;color:#000;">Measurements</div>
<div class="abs" style="left:1715px;top:1007px;width:200px;height:24px;background:#f0f0f0;border:1px solid #b9c7d6"></div>
</body></html>
